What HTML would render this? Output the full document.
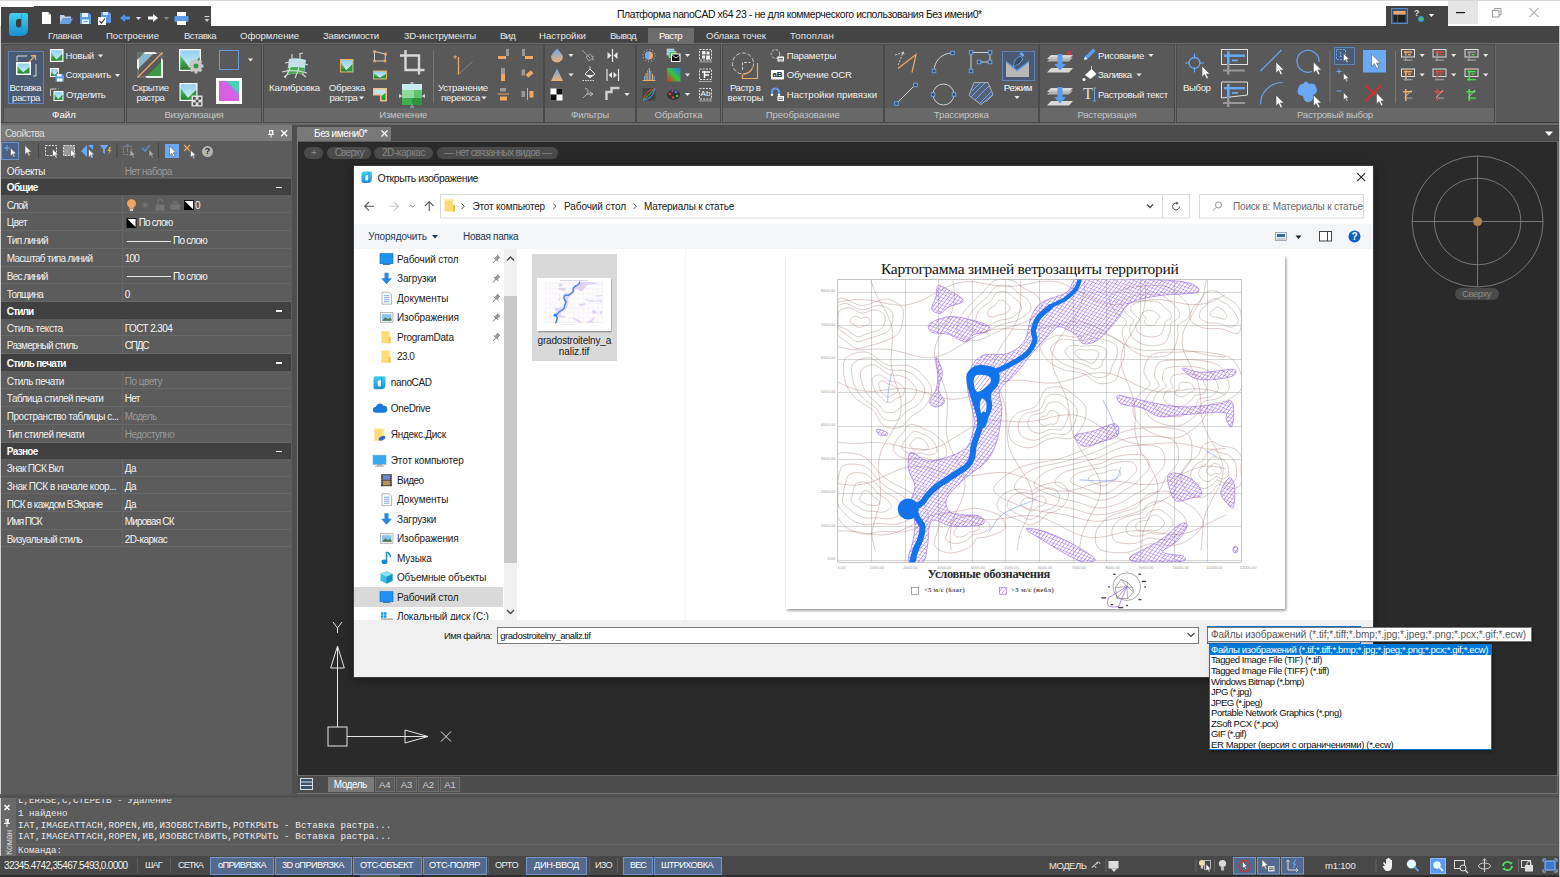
<!DOCTYPE html>
<html lang="ru"><head><meta charset="utf-8"><title>nanoCAD</title><style>html,body{margin:0;padding:0}body{width:1560px;height:877px;overflow:hidden;background:#555;position:relative;font-family:"Liberation Sans",sans-serif}
.t{position:absolute;white-space:nowrap;margin:0;padding:0}.r{position:absolute;margin:0;padding:0;overflow:visible}
</style></head><body>
<svg width="0" height="0" style="position:absolute"><defs>
<linearGradient id="sky" x1="0" y1="0" x2="0" y2="1"><stop offset="0" stop-color="#8fd0ee"/><stop offset="1" stop-color="#d9f1f7"/></linearGradient>
<linearGradient id="grn" x1="0" y1="0" x2="0" y2="1"><stop offset="0" stop-color="#5fd06a"/><stop offset="1" stop-color="#1f7a2a"/></linearGradient>
<linearGradient id="bo" x1="0" y1="0" x2="0" y2="1"><stop offset="0" stop-color="#6aa9f0"/><stop offset="1" stop-color="#f0b070"/></linearGradient>
<linearGradient id="rgb" x1="0" y1="1" x2="1" y2="0"><stop offset="0" stop-color="#f02020"/><stop offset="0.5" stop-color="#30c840"/><stop offset="1" stop-color="#3070f0"/></linearGradient>
<linearGradient id="logo" x1="0" y1="0" x2="0" y2="1"><stop offset="0" stop-color="#3fd0f0"/><stop offset="1" stop-color="#1c8fd0"/></linearGradient>
<linearGradient id="mg" x1="0" y1="0" x2="1" y2="1"><stop offset="0" stop-color="#d050e0"/><stop offset="0.5" stop-color="#c060e0"/><stop offset="1" stop-color="#40d8b0"/></linearGradient>
</defs></svg>
<div class="r" style="left:0px;top:0px;width:1560px;height:26px;background:#ffffff;"></div>
<div class="r" style="left:0px;top:0px;width:1560px;height:1px;background:#d8d8d8;"></div>
<div class="r" style="left:1px;top:7px;width:34px;height:19px;background:#444;"></div>
<div class="r" style="left:34px;top:6px;width:177px;height:20px;background:#444;"></div>
<svg class="r" style="left:0px;top:0px;" width="215" height="26" viewBox="0 0 215 26"><path d="M42,12 h6 l3,3 v9 h-9 z" fill="#fff"/><path d="M48,12 l3,3 h-3z" fill="#ccc"/><path d="M60,15 h4 l1,1.5 h6 v2 h-8 l-3,5.5 z" fill="#b8d4f0"/><path d="M62.5,18.5 h10.5 l-3,5.5 h-10.5 z" fill="#6ea0e0"/><path d="M80,13 h9 l2,2 v9 h-11 z" fill="#5b9be8"/><rect x="82" y="13" width="6" height="4" fill="#e8f0fa"/><rect x="82" y="19.5" width="7" height="4.5" fill="#e8f0fa"/><rect x="83.5" y="21" width="4" height="1" fill="#5b9be8"/><path d="M101,12 h8 l2,2 v9 h-10 z" fill="#5b9be8"/><rect x="103" y="12" width="5" height="3" fill="#dce8f8"/><rect x="98" y="17" width="8" height="8" fill="#fff"/><path d="M99.5,21 l2,2 l3.5,-4.5" stroke="#333" stroke-width="1.2" fill="none"/><path d="M120,18 l5,-4 v2.5 h5 v3 h-5 v2.5 z" fill="#4f93ea"/><path d="M135.9,17.1 h5.200 l-2.600,3 z" fill="#ddd"/><path d="M158,18 l-5,-4 v2.5 h-5 v3 h5 v2.5 z" fill="#fff"/><path d="M163.9,17.1 h5.200 l-2.600,3 z" fill="#888"/><rect x="177" y="12" width="9" height="5" fill="#fff"/><rect x="174.500" y="16" width="14" height="6" rx="1" fill="#5b9be8"/><rect x="177" y="21" width="9" height="4" fill="#fff"/><rect x="204.5" y="16" width="5" height="1.2" fill="#ccc"/><path d="M204.500,19 h5 l-2.500,3 z" fill="#ccc"/></svg>
<span class="t" style="left:617.00px;top:8.30px;font-size:10.4px;line-height:14.4px;color:#111;font-family:'Liberation Sans',sans-serif;letter-spacing:-0.398px;">Платформа nanoCAD x64 23 - не для коммерческого использования Без имени0*</span>
<div class="r" style="left:1386px;top:6px;width:62px;height:20px;background:#444;"></div>
<div class="r" style="left:1448px;top:1px;width:30px;height:23px;background:#e5e5e5;"></div>
<svg class="r" style="left:0px;top:0px;" width="1560" height="26" viewBox="0 0 1560 26"><rect x="1391.5" y="8.500" width="16" height="15" fill="#3f5575" stroke="#5b86c0" stroke-width="1"/><rect x="1393.5" y="11" width="12" height="3.5" fill="#e8a868"/><rect x="1393.5" y="15" width="3.5" height="7" fill="#222"/><rect x="1398" y="15" width="7.500" height="7" fill="#222"/><circle cx="1421" cy="19" r="3" fill="#3a9ad0"/><path d="M1419,19 q2,-2.500 4,0 q-2,2 -4,0" fill="#5c5"/><path d="M1428.9,14.1 h5.200 l-2.600,3 z" fill="#fff"/><rect x="1456" y="12" width="9" height="1.2" fill="#111"/><rect x="1492.5" y="10.500" width="6.500" height="6.500" fill="none" stroke="#999" stroke-width="1"/><path d="M1494.5,10.500 v-2 h6.500 v6.500 h-2" fill="none" stroke="#999" stroke-width="1"/><path d="M1529.5,8 l9,9 M1538.5,8 l-9,9" stroke="#888" stroke-width="1"/></svg>
<span class="t" style="left:1414.00px;top:7.00px;font-size:9px;line-height:13px;color:#ddd;font-family:'Liberation Sans',sans-serif;font-weight:bold;">?</span>
<div class="r" style="left:1px;top:26px;width:1558px;height:17px;background:#444444;"></div>
<div class="r" style="left:648px;top:28px;width:46px;height:15px;background:#6c6c6c;"></div>
<span class="t" style="left:48.00px;top:28.70px;font-size:9.6px;line-height:13.6px;color:#e4e4e4;font-family:'Liberation Sans',sans-serif;letter-spacing:-0.363px;">Главная</span>
<span class="t" style="left:106.00px;top:28.70px;font-size:9.6px;line-height:13.6px;color:#e4e4e4;font-family:'Liberation Sans',sans-serif;letter-spacing:-0.046px;">Построение</span>
<span class="t" style="left:184.00px;top:28.70px;font-size:9.6px;line-height:13.6px;color:#e4e4e4;font-family:'Liberation Sans',sans-serif;letter-spacing:-0.526px;">Вставка</span>
<span class="t" style="left:240.00px;top:28.70px;font-size:9.6px;line-height:13.6px;color:#e4e4e4;font-family:'Liberation Sans',sans-serif;letter-spacing:-0.059px;">Оформление</span>
<span class="t" style="left:323.00px;top:28.70px;font-size:9.6px;line-height:13.6px;color:#e4e4e4;font-family:'Liberation Sans',sans-serif;letter-spacing:-0.206px;">Зависимости</span>
<span class="t" style="left:404.00px;top:28.70px;font-size:9.6px;line-height:13.6px;color:#e4e4e4;font-family:'Liberation Sans',sans-serif;letter-spacing:-0.128px;">3D-инструменты</span>
<span class="t" style="left:500.00px;top:28.70px;font-size:9.6px;line-height:13.6px;color:#e4e4e4;font-family:'Liberation Sans',sans-serif;letter-spacing:-0.789px;">Вид</span>
<span class="t" style="left:539.00px;top:28.70px;font-size:9.6px;line-height:13.6px;color:#e4e4e4;font-family:'Liberation Sans',sans-serif;letter-spacing:-0.008px;">Настройки</span>
<span class="t" style="left:610.00px;top:28.70px;font-size:9.6px;line-height:13.6px;color:#e4e4e4;font-family:'Liberation Sans',sans-serif;letter-spacing:-0.605px;">Вывод</span>
<span class="t" style="left:659.00px;top:28.70px;font-size:9.6px;line-height:13.6px;color:#fff;font-family:'Liberation Sans',sans-serif;letter-spacing:-0.592px;">Растр</span>
<span class="t" style="left:706.00px;top:28.70px;font-size:9.6px;line-height:13.6px;color:#e4e4e4;font-family:'Liberation Sans',sans-serif;letter-spacing:0.012px;">Облака точек</span>
<span class="t" style="left:790.00px;top:28.70px;font-size:9.6px;line-height:13.6px;color:#e4e4e4;font-family:'Liberation Sans',sans-serif;letter-spacing:0.196px;">Топоплан</span>
<div class="r" style="left:1px;top:43px;width:1558px;height:80px;background:#595959;"></div>
<div class="r" style="left:1px;top:43px;width:1558px;height:1px;background:#6e6e6e;"></div>
<div class="r" style="left:1px;top:122px;width:1558px;height:1px;background:#3c3c3c;"></div>
<div class="r" style="left:4px;top:45px;width:120px;height:76.5px;background:#595959;box-shadow:0 0 0 1px #4a4a4a, 1px 1px 0 1px #6a6a6a;"></div>
<div class="r" style="left:4px;top:108px;width:120px;height:13.5px;background:#686868;"></div>
<span class="t" style="left:52.00px;top:108.20px;font-size:9.6px;line-height:13.6px;color:#fff;font-family:'Liberation Sans',sans-serif;letter-spacing:0.100px;">Файл</span>
<div class="r" style="left:127px;top:45px;width:134px;height:76.5px;background:#595959;box-shadow:0 0 0 1px #4a4a4a, 1px 1px 0 1px #6a6a6a;"></div>
<div class="r" style="left:127px;top:108px;width:134px;height:13.5px;background:#686868;"></div>
<span class="t" style="left:164.50px;top:108.20px;font-size:9.6px;line-height:13.6px;color:#c4c4c4;font-family:'Liberation Sans',sans-serif;letter-spacing:-0.321px;">Визуализация</span>
<div class="r" style="left:264px;top:45px;width:278.5px;height:76.5px;background:#595959;box-shadow:0 0 0 1px #4a4a4a, 1px 1px 0 1px #6a6a6a;"></div>
<div class="r" style="left:264px;top:108px;width:278.5px;height:13.5px;background:#686868;"></div>
<span class="t" style="left:379.25px;top:108.20px;font-size:9.6px;line-height:13.6px;color:#c4c4c4;font-family:'Liberation Sans',sans-serif;letter-spacing:-0.210px;">Изменение</span>
<div class="r" style="left:545px;top:45px;width:90px;height:76.5px;background:#595959;box-shadow:0 0 0 1px #4a4a4a, 1px 1px 0 1px #6a6a6a;"></div>
<div class="r" style="left:545px;top:108px;width:90px;height:13.5px;background:#686868;"></div>
<span class="t" style="left:571.00px;top:108.20px;font-size:9.6px;line-height:13.6px;color:#c4c4c4;font-family:'Liberation Sans',sans-serif;letter-spacing:-0.164px;">Фильтры</span>
<div class="r" style="left:637px;top:45px;width:83px;height:76.5px;background:#595959;box-shadow:0 0 0 1px #4a4a4a, 1px 1px 0 1px #6a6a6a;"></div>
<div class="r" style="left:637px;top:108px;width:83px;height:13.5px;background:#686868;"></div>
<span class="t" style="left:654.50px;top:108.20px;font-size:9.6px;line-height:13.6px;color:#c4c4c4;font-family:'Liberation Sans',sans-serif;letter-spacing:-0.046px;">Обработка</span>
<div class="r" style="left:722.5px;top:45px;width:160.5px;height:76.5px;background:#595959;box-shadow:0 0 0 1px #4a4a4a, 1px 1px 0 1px #6a6a6a;"></div>
<div class="r" style="left:722.5px;top:108px;width:160.5px;height:13.5px;background:#686868;"></div>
<span class="t" style="left:765.75px;top:108.20px;font-size:9.6px;line-height:13.6px;color:#c4c4c4;font-family:'Liberation Sans',sans-serif;letter-spacing:-0.068px;">Преобразование</span>
<div class="r" style="left:885px;top:45px;width:152.5px;height:76.5px;background:#595959;box-shadow:0 0 0 1px #4a4a4a, 1px 1px 0 1px #6a6a6a;"></div>
<div class="r" style="left:885px;top:108px;width:152.5px;height:13.5px;background:#686868;"></div>
<span class="t" style="left:933.75px;top:108.20px;font-size:9.6px;line-height:13.6px;color:#c4c4c4;font-family:'Liberation Sans',sans-serif;letter-spacing:-0.136px;">Трассировка</span>
<div class="r" style="left:1040px;top:45px;width:134px;height:76.5px;background:#595959;box-shadow:0 0 0 1px #4a4a4a, 1px 1px 0 1px #6a6a6a;"></div>
<div class="r" style="left:1040px;top:108px;width:134px;height:13.5px;background:#686868;"></div>
<span class="t" style="left:1077.50px;top:108.20px;font-size:9.6px;line-height:13.6px;color:#c4c4c4;font-family:'Liberation Sans',sans-serif;letter-spacing:-0.280px;">Растеризация</span>
<div class="r" style="left:1176.5px;top:45px;width:317.0px;height:76.5px;background:#595959;box-shadow:0 0 0 1px #4a4a4a, 1px 1px 0 1px #6a6a6a;"></div>
<div class="r" style="left:1176.5px;top:108px;width:317.0px;height:13.5px;background:#686868;"></div>
<span class="t" style="left:1297.00px;top:108.20px;font-size:9.6px;line-height:13.6px;color:#c4c4c4;font-family:'Liberation Sans',sans-serif;letter-spacing:-0.234px;">Растровый выбор</span>
<div class="r" style="left:7.5px;top:50.5px;width:36px;height:53px;background:#4a5a73;border:1px solid #5d83b8;box-sizing:border-box;"></div>
<div class="r" style="left:1001.5px;top:50.5px;width:33.5px;height:30.5px;background:#4a5a73;border:1px solid #5d83b8;box-sizing:border-box;"></div>
<div class="r" style="left:1333.5px;top:46.5px;width:21px;height:18px;background:#4a5a73;border:1px solid #5d83b8;box-sizing:border-box;"></div>
<svg class="r" style="left:0px;top:43px;" width="1560" height="80" viewBox="0 43 1560 80"><path d="M17,61 v-5 h10 M31,56 l4,-0 M35,56 v0" fill="none" stroke="#d8d8d8" stroke-width="1"/><path d="M36,64 v12 h-3" fill="none" stroke="#d8d8d8" stroke-width="1"/><path d="M29,62 l6.500,-6.500 M31,55.500 h4.500 v4.500" fill="none" stroke="#f0a860" stroke-width="1.2"/><rect x="16" y="62" width="15" height="13" fill="#fff"/><rect x="17.5" y="63.5" width="12.0" height="10.0" fill="url(#sky)"/><path d="M17.5,66.0 L24.1,73.5 L17.5,73.5 z" fill="url(#grn)"/><path d="M29.5,67.0 L21.7,73.5 L29.5,73.5 z" fill="#2f9a3c"/><rect x="50" y="49" width="13.5" height="13" fill="#fff"/><rect x="51.2" y="50.2" width="11.1" height="10.6" fill="url(#sky)"/><path d="M51.2,52.85 L57.30500000000001,60.800000000000004 L51.2,60.800000000000004 z" fill="url(#grn)"/><path d="M62.300000000000004,53.910000000000004 L55.085,60.800000000000004 L62.300000000000004,60.800000000000004 z" fill="#2f9a3c"/><path d="M97.9,54.6 h5.200 l-2.600,3 z" fill="#e8e8e8"/><rect x="50" y="68" width="9" height="9" fill="#fff"/><rect x="51" y="69" width="7" height="7" fill="url(#sky)"/><path d="M51,70.75 L54.85,76 L51,76 z" fill="url(#grn)"/><path d="M58,71.45 L53.45,76 L58,76 z" fill="#2f9a3c"/><path d="M55.500,74 h7 l1.500,1.500 v6 h-8.500 z" fill="#5b9be8"/><rect x="57" y="74" width="4.500" height="2.500" fill="#fff"/><rect x="57" y="78.500" width="5.500" height="3" fill="#fff"/><path d="M114.9,74.1 h5.200 l-2.600,3 z" fill="#e8e8e8"/><path d="M50.500,96 v-7 h6 M58,89 h0.500" fill="none" stroke="#d0d0d0" stroke-width="1"/><rect x="53.5" y="91" width="10" height="10" fill="#fff"/><rect x="54.5" y="92" width="8" height="8" fill="url(#sky)"/><path d="M54.5,94.0 L58.9,100 L54.5,100 z" fill="url(#grn)"/><path d="M62.5,94.8 L57.3,100 L62.5,100 z" fill="#2f9a3c"/><rect x="137" y="52" width="26" height="26" fill="#eee"/><rect x="139" y="54" width="22" height="22" fill="#5a5a5a"/><path d="M139,54 h14 l-14,14 z" fill="#8ab8c8"/><path d="M161,76 h-14 l14,-14 z" fill="#3a9a48"/><path d="M137,52 l8,0 l-8,8 z M163,52 v8 l-8,-8z M137,78 v-10 l10,10 z" fill="#595959" opacity="0.85"/><path d="M137.500,77.500 l25,-25" stroke="#f0a860" stroke-width="1.3"/><rect x="179" y="49" width="22" height="22" fill="#fff"/><rect x="180.3" y="50.3" width="19.4" height="19.4" fill="url(#sky)"/><path d="M180.3,55.15 L190.97,69.69999999999999 L180.3,69.69999999999999 z" fill="url(#grn)"/><path d="M199.70000000000002,57.089999999999996 L187.09,69.69999999999999 L199.70000000000002,69.69999999999999 z" fill="#2f9a3c"/><circle cx="196" cy="66" r="6" fill="#c8c8c8" stroke="#999" stroke-width="0.500"/><rect x="194.500" y="58.500" width="3" height="3.500" fill="#c8c8c8" transform="rotate(0 196 66)"/><rect x="194.500" y="58.500" width="3" height="3.500" fill="#c8c8c8" transform="rotate(45 196 66)"/><rect x="194.500" y="58.500" width="3" height="3.500" fill="#c8c8c8" transform="rotate(90 196 66)"/><rect x="194.500" y="58.500" width="3" height="3.500" fill="#c8c8c8" transform="rotate(135 196 66)"/><rect x="194.500" y="58.500" width="3" height="3.500" fill="#c8c8c8" transform="rotate(180 196 66)"/><rect x="194.500" y="58.500" width="3" height="3.500" fill="#c8c8c8" transform="rotate(225 196 66)"/><rect x="194.500" y="58.500" width="3" height="3.500" fill="#c8c8c8" transform="rotate(270 196 66)"/><rect x="194.500" y="58.500" width="3" height="3.500" fill="#c8c8c8" transform="rotate(315 196 66)"/><circle cx="196" cy="66" r="2.500" fill="#3a9a48"/><rect x="219.500" y="50.500" width="19" height="19" fill="none" stroke="#6a9ad8" stroke-width="1"/><path d="M247.9,58.6 h5.200 l-2.600,3 z" fill="#e8e8e8"/><rect x="179.5" y="83" width="18" height="18" fill="#fff"/><rect x="180.7" y="84.2" width="15.6" height="15.6" fill="url(#sky)"/><path d="M180.7,88.10000000000001 L189.28,99.8 L180.7,99.8 z" fill="url(#grn)"/><path d="M196.29999999999998,89.66 L186.16,99.8 L196.29999999999998,99.8 z" fill="#2f9a3c"/><rect x="191.500" y="95.500" width="11" height="11" fill="#ddd"/><rect x="193" y="97" width="2.700" height="2.700" fill="#555"/><rect x="198.400" y="97" width="2.700" height="2.700" fill="#555"/><rect x="195.700" y="99.700" width="2.700" height="2.700" fill="#555"/><rect x="193" y="102.400" width="2.700" height="2.700" fill="#555"/><rect x="198.400" y="102.400" width="2.700" height="2.700" fill="#555"/><rect x="216" y="78" width="26" height="26" fill="#fff"/><rect x="219" y="81" width="20" height="20" fill="#d860e0"/><path d="M226,81 h13 v13 z" fill="#48d8b0"/><path d="M222,81 h5 l12,12 v5 z" fill="#a880e0" opacity="0.700"/><path d="M289,59 q7,-2 17,1 l-2,14 q-8,-2 -17,1 z" fill="#bfe4f2"/><path d="M287.500,68 q8,-2 17,0 l-1,6 q-8,-2 -17,1 z" fill="#3fae4c"/><path d="M285,63 q12,-3 23,2 M282,72 q12,-3 25,1 M292,54 q1,12 -7,24 M300,54 q1,12 -5,24 M299,54 l4,-1 M302,74 l4,3 M284,77 l4,-3" fill="none" stroke="#d4d4d4" stroke-width="1.200"/><rect x="340" y="59" width="13.5" height="13.5" fill="#e8b060"/><rect x="341" y="60" width="11.5" height="11.5" fill="url(#sky)"/><path d="M341,62.875 L347.325,71.5 L341,71.5 z" fill="url(#grn)"/><path d="M352.5,64.025 L345.025,71.5 L352.5,71.5 z" fill="#2f9a3c"/><path d="M358.9,96.6 h5.200 l-2.600,3 z" fill="#e8e8e8"/><path d="M374.500,51.500 l11,2.500 l-0.500,7 h-10.500 z" fill="none" stroke="#d0d0d0" stroke-width="1"/><rect x="373.2" y="50.2" width="2.600" height="2.600" fill="#f0a860"/><rect x="384.2" y="52.7" width="2.600" height="2.600" fill="#f0a860"/><rect x="383.7" y="59.7" width="2.600" height="2.600" fill="#f0a860"/><rect x="373.2" y="59.7" width="2.600" height="2.600" fill="#f0a860"/><rect x="373" y="70.5" width="14" height="9" fill="#e8b060"/><rect x="374" y="71.5" width="12" height="7" fill="url(#sky)"/><path d="M374,73.25 L380.6,78.5 L374,78.5 z" fill="url(#grn)"/><path d="M386,73.95 L378.2,78.5 L386,78.5 z" fill="#2f9a3c"/><path d="M373,88 h14 v13.500 h-7 v-6 h-7 z" fill="#f0c088"/><path d="M374.500,89.500 h11 v10.500 h-4 v-6 h-7 z" fill="#bfe4f2"/><path d="M381.500,96 l4,-3 v7 h-4z" fill="#2f9a3c"/><path d="M405.500,50 v20 h19 M400,55.500 h19 v19" fill="none" stroke="#d8d8d8" stroke-width="2.400"/><rect x="402" y="84" width="20" height="21" fill="#3fae4c"/><rect x="402" y="84" width="20" height="6" fill="#c8ecf4"/><rect x="402" y="90" width="12" height="8" fill="#8fdc9a"/><rect x="414" y="90" width="8" height="8" fill="#5fc46c"/><rect x="412" y="98" width="10" height="7" fill="#2f963c"/><path d="M410,83 h4 M412,82 v2 M410,107 h4 M412,106 v-1.500 M399.500,94.500 l2,1.500 l-2,1.500z M424.500,94.500 l-2,1.500 l2,1.500z" stroke="#ddd" stroke-width="0.800" fill="#ddd"/><rect x="433" y="51" width="1" height="52" fill="#777"/><path d="M458.500,57 v17.500" stroke="#f0a860" stroke-width="1.300"/><path d="M458.500,74.500 l14,-13" stroke="#888" stroke-width="1"/><path d="M481.4,96.6 h5.200 l-2.600,3 z" fill="#e8e8e8"/><rect x="498" y="56" width="8" height="3" fill="#f0a860"/><rect x="506" y="49" width="3" height="7" fill="#999"/><rect x="525" y="56" width="8" height="3" fill="#f0a860"/><rect x="522" y="49" width="3" height="7" fill="#999"/><rect x="501" y="68" width="4" height="6" fill="#999"/><rect x="501" y="74" width="4" height="7" fill="#f0a860"/><rect x="521.500" y="69.500" width="3.500" height="6" fill="#999"/><rect x="526" y="72" width="7" height="4" fill="#f0a860" transform="rotate(-40 529.5 74)"/><rect x="500" y="88" width="6" height="3.500" fill="#999"/><rect x="497.500" y="93.500" width="11.500" height="1" fill="#f0a860"/><rect x="500" y="96.500" width="7" height="4" fill="#f0a860"/><rect x="521.500" y="91" width="3.500" height="6" fill="#999"/><rect x="527" y="88" width="1" height="12" fill="#f0a860"/><rect x="529.500" y="91" width="4" height="6.500" fill="#f0a860"/><path d="M557,48.500 q-6,6.500 -6,8 a6,6 0 0 0 12,0 q0,-1.500 -6,-8z" fill="url(#bo)"/><path d="M568.4,54.1 h5.200 l-2.600,3 z" fill="#e8e8e8"/><path d="M557,68.500 l6,12.500 h-12 z" fill="url(#bo)"/><path d="M568.4,73.6 h5.200 l-2.600,3 z" fill="#e8e8e8"/><rect x="550.500" y="88.500" width="12" height="12" fill="#fff"/><rect x="556.500" y="88.500" width="6" height="6" fill="#111"/><rect x="550.500" y="94.500" width="6" height="6" fill="#111"/><path d="M582,50 l8,8 M586,57 l4,-3 l3,4 l-4,3 z M592,56 l2,1" fill="none" stroke="#aaa" stroke-width="0.900"/><circle cx="593" cy="59.500" r="0.700" fill="#ccc"/><path d="M585,74 l5,-5 l5,5 l-5,3.500 z" fill="none" stroke="#e0e0e0" stroke-width="1"/><path d="M586,75 l8,0 l-4,3z" fill="#eee"/><path d="M582.500,80.500 h12" stroke="#e0e0e0" stroke-width="1.200" stroke-dasharray="1.500,1"/><path d="M590,69 v-3" stroke="#ddd" stroke-width="0.800"/><path d="M585,88 q5,2 2,6 q-3,3 -4,4 M587,94 l6,0 M590,92 l3,2 l-3,2" fill="none" stroke="#bbb" stroke-width="1"/><path d="M612.500,49 v13" stroke="#e8e8e8" stroke-width="1.200"/><path d="M607.500,52 l4,3.500 l-4,3.500z M617.500,52 l-4,3.500 l4,3.500z" fill="#e8e8e8"/><path d="M607,69 v12 M618.500,69 v12" stroke="#e8e8e8" stroke-width="1.200"/><path d="M612,72 l-3.500,3 l3.500,3z M613.500,72 l3.500,3 l-3.500,3z" fill="#e8e8e8"/><path d="M606.500,100 v-8 h5 v-4 h8" fill="none" stroke="#d0d0d0" stroke-width="2.400"/><path d="M624.4,93.1 h5.200 l-2.600,3 z" fill="#e8e8e8"/><circle cx="649" cy="55.500" r="4" fill="#f0a860"/><path d="M649,51.500 a4,4 0 0 0 0,8 z" fill="#6aa9f5"/><circle cx="649" cy="55.500" r="6" fill="none" stroke="#ddd" stroke-width="0.800" stroke-dasharray="1,2.100"/><rect x="644.0" y="76" width="1" height="4" fill="#6aa9f5"/><rect x="645.6" y="73" width="1" height="7" fill="#f0a860"/><rect x="647.2" y="70" width="1" height="10" fill="#6aa9f5"/><rect x="648.8" y="68" width="1" height="12" fill="#f0a860"/><rect x="650.4" y="71" width="1" height="9" fill="#6aa9f5"/><rect x="652.0" y="74" width="1" height="6" fill="#f0a860"/><rect x="653.6" y="76" width="1" height="4" fill="#6aa9f5"/><rect x="642.500" y="80" width="13" height="1" fill="#f0a860"/><rect x="642.500" y="88" width="13" height="13" fill="#444"/><path d="M643,100.500 q2,-10 12,-12" fill="none" stroke="#e04040" stroke-width="1"/><path d="M643,100.500 l12,-12" stroke="#40c040" stroke-width="1"/><path d="M643,100.500 q10,-2 12,-12" fill="none" stroke="#40a0f0" stroke-width="1"/><rect x="667" y="49" width="7" height="6" fill="#7cc8f0" stroke="#ddd" stroke-width="0.600"/><rect x="669" y="51.500" width="7" height="6" fill="#4fbf5c" stroke="#ddd" stroke-width="0.600"/><rect x="671.500" y="54" width="8.500" height="7.500" fill="#111" stroke="#fff" stroke-width="1"/><path d="M672,55 l4,3 l4,-3" fill="none" stroke="#fff" stroke-width="0.800"/><path d="M684.9,54.1 h5.200 l-2.600,3 z" fill="#e8e8e8"/><rect x="667" y="68" width="13.500" height="13.500" fill="url(#rgb)"/><path d="M684.9,73.6 h5.200 l-2.600,3 z" fill="#e8e8e8"/><ellipse cx="673.500" cy="95" rx="6.500" ry="5" fill="#333"/><circle cx="670" cy="94" r="1.300" fill="#e04040"/><circle cx="673" cy="97.500" r="1.300" fill="#e04040"/><circle cx="677" cy="96" r="1.300" fill="#40c040"/><circle cx="676" cy="92" r="1.300" fill="#4080f0"/><circle cx="672.500" cy="91" r="1" fill="#c050c0"/><path d="M684.9,93.1 h5.200 l-2.600,3 z" fill="#e8e8e8"/><rect x="699.500" y="49.5" width="12" height="10.500" fill="none" stroke="#e0e0e0" stroke-width="1" stroke-dasharray="2,1.200"/><rect x="699" y="61.5" width="13" height="0.800" fill="#bbb"/><rect x="699.500" y="69.0" width="12" height="10.500" fill="none" stroke="#e0e0e0" stroke-width="1" stroke-dasharray="2,1.200"/><rect x="699" y="81.0" width="13" height="0.800" fill="#bbb"/><rect x="699.500" y="88.5" width="12" height="10.500" fill="none" stroke="#e0e0e0" stroke-width="1" stroke-dasharray="2,1.200"/><rect x="699" y="100.5" width="13" height="0.800" fill="#bbb"/><rect x="702" y="51" width="3.500" height="3.500" fill="#eee"/><rect x="706.500" y="51.500" width="3" height="3" fill="#eee"/><rect x="702" y="55.500" width="3" height="3" fill="#eee"/><rect x="706" y="55.500" width="4" height="4" fill="#eee"/><path d="M704.500,71 v7 M702,72 h8 M705,75 h4" stroke="#fff" stroke-width="1.500" fill="none"/><circle cx="743" cy="63.500" r="10.500" fill="none" stroke="#ccc" stroke-width="1" stroke-dasharray="4,2"/><path d="M743,74 a10.500,10.500 0 0 0 9.500,-6" fill="none" stroke="#f0a860" stroke-width="1.200"/><path d="M742.500,70 v-7.500 h8" fill="none" stroke="#ccc" stroke-width="1" stroke-dasharray="3,1.500"/><path d="M757.500,63 v15.500 h-15 v-4" fill="none" stroke="#f0a860" stroke-width="1.200"/><circle cx="775.500" cy="54" r="4.300" fill="none" stroke="#ccc" stroke-width="1" stroke-dasharray="2.500,1.500"/><rect x="777.500" y="56.500" width="6.500" height="5" fill="#fff"/><rect x="778.500" y="58" width="4.500" height="0.800" fill="#555"/><rect x="778.500" y="59.600" width="4.500" height="0.800" fill="#555"/><rect x="771" y="70" width="13" height="9.500" rx="1" fill="#fff"/><path d="M772,95 v-3 a3.500,3.500 0 0 1 7,0 v3" fill="none" stroke="#5b9bf0" stroke-width="2.200"/><rect x="770.900" y="94" width="2.200" height="1.800" fill="#fff"/><rect x="777.900" y="94" width="2.200" height="1.800" fill="#fff"/><rect x="777.500" y="96" width="6.500" height="5" fill="#fff"/><rect x="778.500" y="97.500" width="4.500" height="0.800" fill="#555"/><rect x="778.500" y="99.100" width="4.500" height="0.800" fill="#555"/><path d="M898,68.500 l18,-14 l-4,18" fill="none" stroke="#f0a860" stroke-width="1.200"/><path d="M895,55 l8,-2.500 l-5,13" fill="none" stroke="#ccc" stroke-width="1" stroke-dasharray="2,1.300"/><path d="M903.500,51 l1,3.500 l-3,-1z" fill="#ccc"/><path d="M934,71 a18,18 0 0 1 18,-18" fill="none" stroke="#d0d0d0" stroke-width="1"/><rect x="932.2" y="69.2" width="3.600" height="3.600" fill="#3a4a60" stroke="#6aa9f5" stroke-width="0.900"/><rect x="950.7" y="51.2" width="3.600" height="3.600" fill="#3a4a60" stroke="#6aa9f5" stroke-width="0.900"/><path d="M896.500,103.500 l19,-19" stroke="#d0d0d0" stroke-width="1"/><rect x="894.7" y="101.7" width="3.600" height="3.600" fill="#3a4a60" stroke="#6aa9f5" stroke-width="0.900"/><rect x="913.7" y="83.2" width="3.600" height="3.600" fill="#3a4a60" stroke="#6aa9f5" stroke-width="0.900"/><circle cx="943.500" cy="94.500" r="10.500" fill="none" stroke="#d0d0d0" stroke-width="1"/><rect x="931.2" y="92.7" width="3.600" height="3.600" fill="#3a4a60" stroke="#6aa9f5" stroke-width="0.900"/><rect x="952.2" y="92.7" width="3.600" height="3.600" fill="#3a4a60" stroke="#6aa9f5" stroke-width="0.900"/><path d="M971,71 v-18.500 h19 v9.500 h-11" fill="none" stroke="#d0d0d0" stroke-width="1"/><rect x="969.2" y="69.2" width="3.600" height="3.600" fill="#3a4a60" stroke="#6aa9f5" stroke-width="0.900"/><rect x="969.2" y="50.7" width="3.600" height="3.600" fill="#3a4a60" stroke="#6aa9f5" stroke-width="0.900"/><rect x="988.2" y="50.7" width="3.600" height="3.600" fill="#3a4a60" stroke="#6aa9f5" stroke-width="0.900"/><rect x="988.2" y="60.2" width="3.600" height="3.600" fill="#3a4a60" stroke="#6aa9f5" stroke-width="0.900"/><rect x="977.2" y="60.2" width="3.600" height="3.600" fill="#3a4a60" stroke="#6aa9f5" stroke-width="0.900"/><path d="M974,82.500 h14 l5,12 l-12,10 l-12,-9 z" fill="#56627a" stroke="#b8b8b8" stroke-width="0.900"/><path d="M972,91 l8,-8 M971,97 l14,-14 M975,100 l15,-15 M980,103 l12,-12 M986,102 l7,-7" stroke="#6aa9f5" stroke-width="1"/><path d="M1006,62 l11,9 l12,-9 v15 h-23 z" fill="#b8b8b8"/><path d="M1006,61.500 l11,9 l12,-9" fill="none" stroke="#5b9bf0" stroke-width="1.200"/><path d="M1013,67 l2,-7 l5,-4 l3,3 l-4,5 z" fill="#3a4a60" stroke="#6aa9f5" stroke-width="0.800"/><rect x="1020" y="53" width="4" height="3" fill="#6aa9f5" transform="rotate(40 1022 54.5)"/><path d="M1014.4,96.1 h5.200 l-2.600,3 z" fill="#e8e8e8"/><path d="M1051,55 h22 l-4,4 h-22 z" fill="#d8d8d8"/><path d="M1051,57.5 h22 l-4,4 h-22 z" fill="#bdbdbd" opacity="0.900"/><path d="M1051,68 h22 l-4,4.500 h-22 z" fill="#d8d8d8"/><path d="M1057.500,54 h5 v10 h3.500 l-6,6.500 l-6,-6.500 h3.500 z" fill="#5b9bf0"/><path d="M1051,88 h22 l-4,4 h-22 z" fill="#d8d8d8"/><path d="M1051,90.5 h22 l-4,4 h-22 z" fill="#bdbdbd" opacity="0.900"/><path d="M1051,101 h22 l-4,4.500 h-22 z" fill="#d8d8d8"/><path d="M1057.500,87 h5 v10 h3.500 l-6,6.500 l-6,-6.500 h3.500 z" fill="#5b9bf0"/><path d="M1067,51 l4,4 M1071,51 l-4,4" stroke="#e03030" stroke-width="1.300"/><path d="M1084,60 l1,-3.500 l8,-8 l2.500,2.500 l-8,8 z" fill="#5b9bf0"/><path d="M1084,60 l1,-3.500 l2.500,2.500z" fill="#eee"/><path d="M1148.4,54.1 h5.200 l-2.600,3 z" fill="#e8e8e8"/><path d="M1085,75 l6.500,-6 l5,5 l-6,5 z" fill="#fff"/><path d="M1091.500,69 v-3" stroke="#ddd" stroke-width="0.800"/><circle cx="1084" cy="79.500" r="1.500" fill="#fff"/><path d="M1136.4,73.6 h5.200 l-2.600,3 z" fill="#e8e8e8"/><path d="M1094.500,88 v13 M1093,88 h3 M1093,101 h3" stroke="#6aa9f5" stroke-width="0.900"/><circle cx="1194.500" cy="63" r="5.500" fill="none" stroke="#6aa9f5" stroke-width="1.300"/><path d="M1194.500,53.500 v5 M1194.500,67.500 v5 M1185,63 h5 M1199,63 h5" stroke="#6aa9f5" stroke-width="1.200"/><polygon points="1202.0,66.0 1202.0,77.0 1204.6,74.6 1206.6,78.8 1208.4,77.9 1206.4,73.9 1209.9,73.9" fill="#fff" stroke="#555" stroke-width="0.6"/><rect x="1221.500" y="49.5" width="26" height="15" fill="none" stroke="#e0e0e0" stroke-width="1"/><rect x="1227" y="51.5" width="2.400" height="23" fill="#999"/><rect x="1223" y="69.5" width="22" height="2" fill="#999"/><rect x="1227" y="51.5" width="2.400" height="13" fill="#6aa9f5"/><rect x="1224" y="54.5" width="21" height="2.400" fill="#6aa9f5"/><rect x="1232" y="59.5" width="6" height="1.800" fill="#6aa9f5"/><path d="M1221.500,82 h26 v13 l-26,3 z" fill="none" stroke="#e0e0e0" stroke-width="1"/><rect x="1227" y="84" width="2.400" height="23" fill="#999"/><rect x="1223" y="102" width="22" height="2" fill="#999"/><rect x="1227" y="84" width="2.400" height="13" fill="#6aa9f5"/><rect x="1224" y="87" width="21" height="2.400" fill="#6aa9f5"/><rect x="1232" y="92" width="6" height="1.800" fill="#6aa9f5"/><path d="M1260.500,71 l21,-21" stroke="#6aa9f5" stroke-width="1.200"/><polygon points="1276.0,62.0 1276.0,73.0 1278.6,70.6 1280.6,74.8 1282.4,73.9 1280.4,69.9 1283.9,69.9" fill="#fff" stroke="#555" stroke-width="0.6"/><path d="M1260.500,104.500 a22,22 0 0 1 22,-22" fill="none" stroke="#6aa9f5" stroke-width="1.200"/><polygon points="1276.0,95.0 1276.0,106.0 1278.6,103.6 1280.6,107.8 1282.4,106.9 1280.4,102.9 1283.9,102.9" fill="#fff" stroke="#555" stroke-width="0.6"/><path d="M1319,62 a11,11 0 1 0 -7,9.500" fill="none" stroke="#6aa9f5" stroke-width="1.200"/><polygon points="1313.5,62.0 1313.5,73.0 1316.1,70.6 1318.1,74.8 1319.9,73.9 1317.9,69.9 1321.4,69.9" fill="#fff" stroke="#555" stroke-width="0.6"/><path d="M1303,84 q3,-5 6,0 q6,-2 7,3 q3,6 -3,8 q1,6 -4,7 q-5,1 -6,-6 q-7,-1 -5,-7 q1,-5 5,-5z" fill="#6aa9f5"/><polygon points="1313.5,95.0 1313.5,106.0 1316.1,103.6 1318.1,107.8 1319.9,106.9 1317.9,102.9 1321.4,102.9" fill="#fff" stroke="#555" stroke-width="0.6"/><rect x="1329.500" y="51" width="1" height="52" fill="#777"/><rect x="1336.500" y="49.500" width="9" height="10" fill="none" stroke="#6aa9f5" stroke-width="1" stroke-dasharray="2,1.200"/><polygon points="1343.5,53.5 1343.5,61.5 1345.4,59.7 1346.9,62.8 1348.1,62.1 1346.7,59.3 1349.3,59.3" fill="#fff" stroke="#555" stroke-width="0.6"/><path d="M1336.500,71.500 h5 M1339,69 v5" stroke="#6aa9f5" stroke-width="1"/><polygon points="1343.5,73.0 1343.5,80.5 1345.3,78.8 1346.7,81.7 1347.8,81.1 1346.5,78.4 1348.9,78.4" fill="#fff" stroke="#555" stroke-width="0.6"/><path d="M1336.500,91 h5" stroke="#6aa9f5" stroke-width="1"/><polygon points="1343.5,92.5 1343.5,100.0 1345.3,98.3 1346.7,101.2 1347.8,100.6 1346.5,97.9 1348.9,97.9" fill="#fff" stroke="#555" stroke-width="0.6"/><rect x="1363" y="50" width="23" height="22.500" fill="#6aa9f5"/><polygon points="1371.5,54.0 1371.5,66.5 1374.5,63.8 1376.8,68.5 1378.8,67.5 1376.5,63.0 1380.5,63.0" fill="#fff" stroke="#555" stroke-width="0.6"/><path d="M1365,84.500 l17,17 M1382,84.500 l-17,17" stroke="#d03030" stroke-width="1.800"/><polygon points="1376.5,93.0 1376.5,104.0 1379.1,101.6 1381.1,105.8 1382.9,104.9 1380.9,100.9 1384.4,100.9" fill="#fff" stroke="#555" stroke-width="0.6"/><rect x="1395" y="51" width="1" height="52" fill="#777"/><rect x="1401.5" y="49.5" width="13" height="7.500" fill="none" stroke="#ddd" stroke-width="1"/><rect x="1405.0" y="51" width="1.600" height="10" fill="#999"/><rect x="1403.5" y="59.5" width="9" height="1.300" fill="#999"/><rect x="1404.0" y="51.3" width="8" height="1.600" fill="#f0a860"/><rect x="1408.0" y="54" width="3" height="1.300" fill="#f0a860"/><path d="M1419.6000000000001,54.1 h5.200 l-2.600,3 z" fill="#e8e8e8"/><rect x="1401.5" y="69.0" width="13" height="7.500" fill="none" stroke="#ddd" stroke-width="1"/><rect x="1405.0" y="70.5" width="1.600" height="10" fill="#f0a860"/><rect x="1403.5" y="79.0" width="9" height="1.300" fill="#999"/><rect x="1404.0" y="70.8" width="8" height="1.600" fill="#f0a860"/><rect x="1408.0" y="73.5" width="3" height="1.300" fill="#f0a860"/><path d="M1419.6000000000001,73.6 h5.200 l-2.600,3 z" fill="#e8e8e8"/><rect x="1405.0" y="89" width="1.600" height="12" fill="#f0a860"/><rect x="1403.0" y="91" width="9" height="1.500" fill="#f0a860"/><rect x="1406.5" y="97.5" width="6" height="1.300" fill="#999"/><path d="M1404.5,98 l7,-8" stroke="#ccc" stroke-width="0.800"/><rect x="1433" y="49.5" width="13" height="7.500" fill="none" stroke="#ddd" stroke-width="1"/><rect x="1436.5" y="51" width="1.600" height="10" fill="#999"/><rect x="1435" y="59.5" width="9" height="1.300" fill="#999"/><rect x="1435.5" y="51.3" width="8" height="1.600" fill="#e04848"/><rect x="1439.5" y="54" width="3" height="1.300" fill="#e04848"/><path d="M1451.1000000000001,54.1 h5.200 l-2.600,3 z" fill="#e8e8e8"/><rect x="1433" y="69.0" width="13" height="7.500" fill="none" stroke="#ddd" stroke-width="1"/><rect x="1436.5" y="70.5" width="1.600" height="10" fill="#e04848"/><rect x="1435" y="79.0" width="9" height="1.300" fill="#999"/><rect x="1435.5" y="70.8" width="8" height="1.600" fill="#e04848"/><rect x="1439.5" y="73.5" width="3" height="1.300" fill="#e04848"/><path d="M1451.1000000000001,73.6 h5.200 l-2.600,3 z" fill="#e8e8e8"/><rect x="1436.5" y="89" width="1.600" height="12" fill="#e04848"/><rect x="1434.5" y="91" width="9" height="1.500" fill="#e04848"/><rect x="1438" y="97.5" width="6" height="1.300" fill="#999"/><path d="M1436,98 l7,-8" stroke="#ccc" stroke-width="0.800"/><rect x="1465" y="49.5" width="13" height="7.500" fill="none" stroke="#ddd" stroke-width="1"/><rect x="1468.5" y="51" width="1.600" height="10" fill="#999"/><rect x="1467" y="59.5" width="9" height="1.300" fill="#999"/><rect x="1467.5" y="51.3" width="8" height="1.600" fill="#999"/><rect x="1471.5" y="54" width="3" height="1.300" fill="#48e048"/><path d="M1483.1000000000001,54.1 h5.200 l-2.600,3 z" fill="#e8e8e8"/><rect x="1465" y="69.0" width="13" height="7.500" fill="none" stroke="#ddd" stroke-width="1"/><rect x="1468.5" y="70.5" width="1.600" height="10" fill="#48e048"/><rect x="1467" y="79.0" width="9" height="1.300" fill="#48e048"/><rect x="1467.5" y="70.8" width="8" height="1.600" fill="#48e048"/><rect x="1471.5" y="73.5" width="3" height="1.300" fill="#48e048"/><path d="M1483.1000000000001,73.6 h5.200 l-2.600,3 z" fill="#e8e8e8"/><rect x="1468.5" y="89" width="1.600" height="12" fill="#48e048"/><rect x="1466.5" y="91" width="9" height="1.500" fill="#48e048"/><rect x="1470" y="97.5" width="6" height="1.300" fill="#48e048"/><path d="M1468,98 l7,-8" stroke="#ccc" stroke-width="0.800"/></svg>
<span class="t" style="left:9.55px;top:80.70px;font-size:9.6px;line-height:13.6px;color:#f0f0f0;font-family:'Liberation Sans',sans-serif;letter-spacing:-0.597px;">Вставка</span>
<span class="t" style="left:12.00px;top:91.20px;font-size:9.6px;line-height:13.6px;color:#f0f0f0;font-family:'Liberation Sans',sans-serif;letter-spacing:-0.426px;">растра</span>
<span class="t" style="left:65.50px;top:48.70px;font-size:9.6px;line-height:13.6px;color:#f0f0f0;font-family:'Liberation Sans',sans-serif;letter-spacing:-0.227px;">Новый</span>
<span class="t" style="left:65.50px;top:68.20px;font-size:9.6px;line-height:13.6px;color:#f0f0f0;font-family:'Liberation Sans',sans-serif;letter-spacing:-0.245px;">Сохранить</span>
<span class="t" style="left:66.00px;top:87.70px;font-size:9.6px;line-height:13.6px;color:#f0f0f0;font-family:'Liberation Sans',sans-serif;letter-spacing:-0.379px;">Отделить</span>
<span class="t" style="left:132.00px;top:80.70px;font-size:9.6px;line-height:13.6px;color:#f0f0f0;font-family:'Liberation Sans',sans-serif;letter-spacing:-0.210px;">Скрытие</span>
<span class="t" style="left:136.50px;top:91.20px;font-size:9.6px;line-height:13.6px;color:#f0f0f0;font-family:'Liberation Sans',sans-serif;letter-spacing:-0.426px;">растра</span>
<span class="t" style="left:269.00px;top:80.70px;font-size:9.6px;line-height:13.6px;color:#f0f0f0;font-family:'Liberation Sans',sans-serif;letter-spacing:-0.192px;">Калибровка</span>
<span class="t" style="left:328.75px;top:80.70px;font-size:9.6px;line-height:13.6px;color:#f0f0f0;font-family:'Liberation Sans',sans-serif;letter-spacing:-0.155px;">Обрезка</span>
<span class="t" style="left:329.50px;top:91.20px;font-size:9.6px;line-height:13.6px;color:#f0f0f0;font-family:'Liberation Sans',sans-serif;letter-spacing:-0.426px;">растра</span>
<span class="t" style="left:453.00px;top:53.00px;font-size:10px;line-height:14px;color:#f0a860;font-family:'Liberation Sans',sans-serif;">*</span>
<span class="t" style="left:438.00px;top:80.70px;font-size:9.6px;line-height:13.6px;color:#f0f0f0;font-family:'Liberation Sans',sans-serif;letter-spacing:-0.198px;">Устранение</span>
<span class="t" style="left:441.00px;top:91.20px;font-size:9.6px;line-height:13.6px;color:#f0f0f0;font-family:'Liberation Sans',sans-serif;letter-spacing:-0.250px;">перекоса</span>
<span class="t" style="left:700.61px;top:88.00px;font-size:8px;line-height:12px;color:#fff;font-family:'Liberation Sans',sans-serif;">Ab</span>
<span class="t" style="left:729.95px;top:80.70px;font-size:9.6px;line-height:13.6px;color:#f0f0f0;font-family:'Liberation Sans',sans-serif;letter-spacing:-0.461px;">Растр в</span>
<span class="t" style="left:727.60px;top:91.20px;font-size:9.6px;line-height:13.6px;color:#f0f0f0;font-family:'Liberation Sans',sans-serif;letter-spacing:-0.072px;">векторы</span>
<span class="t" style="left:786.70px;top:48.70px;font-size:9.6px;line-height:13.6px;color:#f0f0f0;font-family:'Liberation Sans',sans-serif;letter-spacing:-0.186px;">Параметры</span>
<span class="t" style="left:772.39px;top:69.00px;font-size:8px;line-height:12px;color:#222;font-family:'Liberation Sans',sans-serif;font-weight:bold;">aB</span>
<span class="t" style="left:786.70px;top:68.20px;font-size:9.6px;line-height:13.6px;color:#f0f0f0;font-family:'Liberation Sans',sans-serif;letter-spacing:-0.242px;">Обучение OCR</span>
<span class="t" style="left:786.70px;top:87.70px;font-size:9.6px;line-height:13.6px;color:#f0f0f0;font-family:'Liberation Sans',sans-serif;letter-spacing:0.039px;">Настройки привязки</span>
<span class="t" style="left:1003.75px;top:80.70px;font-size:9.6px;line-height:13.6px;color:#fff;font-family:'Liberation Sans',sans-serif;letter-spacing:-0.220px;">Режим</span>
<span class="t" style="left:1098.00px;top:48.70px;font-size:9.6px;line-height:13.6px;color:#f0f0f0;font-family:'Liberation Sans',sans-serif;letter-spacing:-0.261px;">Рисование</span>
<span class="t" style="left:1098.00px;top:68.20px;font-size:9.6px;line-height:13.6px;color:#f0f0f0;font-family:'Liberation Sans',sans-serif;letter-spacing:-0.493px;">Заливка</span>
<span class="t" style="left:1083.00px;top:84.00px;font-size:16px;line-height:20px;color:#ddd;font-family:'Liberation Serif',serif;">T</span>
<span class="t" style="left:1098.00px;top:87.70px;font-size:9.6px;line-height:13.6px;color:#f0f0f0;font-family:'Liberation Sans',sans-serif;letter-spacing:-0.298px;">Растровый текст</span>
<span class="t" style="left:1183.05px;top:80.70px;font-size:9.6px;line-height:13.6px;color:#f0f0f0;font-family:'Liberation Sans',sans-serif;letter-spacing:-0.396px;">Выбор</span>
<span class="t" style="left:1338.28px;top:48.50px;font-size:8px;line-height:12px;color:#6aa9f5;font-family:'Liberation Sans',sans-serif;">1</span>
<svg class="r" style="left:8px;top:12px;" width="21" height="25" viewBox="0 0 21 25"><path d="M4,1 h14 q2,0 2,2 v14 q0,7 -7,7 h-9 q-3,0 -3,-3 v-16 q0,-4 3,-4z" fill="url(#logo)"/><path d="M8,9.500 q0,-2.500 2.500,-2.500 h2.800 v6 q0,2.500 -2.500,2.500 h-0.300 q-2.500,0 -2.500,-2.500z" fill="#3c3c3c"/><path d="M13.600,1.500 v21.500" stroke="#2590c8" stroke-width="0.700"/></svg>
<div class="r" style="left:0px;top:123px;width:1560px;height:3px;background:#6a6a6a;"></div>
<div class="r" style="left:0px;top:26px;width:1.2px;height:851px;background:#cfcfcf;"></div>
<div class="r" style="left:1px;top:125px;width:291px;height:671px;background:#5c5c5c;"></div>
<div class="r" style="left:292px;top:125px;width:5px;height:671px;background:#4e4e4e;"></div>
<div class="r" style="left:1px;top:125px;width:291px;height:16px;background:#7a7a7a;"></div>
<span class="t" style="left:5.00px;top:126.50px;font-size:10px;line-height:14px;color:#dcdcdc;font-family:'Liberation Sans',sans-serif;letter-spacing:-0.614px;">Свойства</span>
<div class="r" style="left:1px;top:141px;width:291px;height:20px;background:#5c5c5c;"></div>
<svg class="r" style="left:0px;top:125px;" width="297" height="36" viewBox="0 125 297 36"><path d="M269,130.500 h4.500 M269.700,130.500 v4 M272.800,130.500 v4 M268,134.500 h6 M271,134.500 v3" stroke="#fff" stroke-width="1" fill="none"/><rect x="271.800" y="130.500" width="1.300" height="4" fill="#fff"/><path d="M281.200,130.200 l6,6 M287.200,130.200 l-6,6" stroke="#fff" stroke-width="1.400"/><rect x="1.500" y="142.500" width="17" height="17" fill="#4b6186" stroke="#6a92cc" stroke-width="1"/><path d="M4,148 h6 M7,145 v6" stroke="#6aa9f5" stroke-width="1"/><polygon points="10.5,148.0 10.5,156.0 12.4,154.2 13.9,157.3 15.1,156.6 13.7,153.8 16.3,153.8" fill="#fff" stroke="#555" stroke-width="0.6"/><polygon points="25.0,145.5 25.0,154.5 27.2,152.5 28.8,155.9 30.2,155.2 28.6,152.0 31.5,152.0" fill="#fff" stroke="#555" stroke-width="0.6"/><rect x="38" y="143" width="1" height="15" fill="#444"/><rect x="45.500" y="145.500" width="11" height="10" fill="none" stroke="#e0e0e0" stroke-width="1" stroke-dasharray="2,1.200"/><polygon points="52.5,149.0 52.5,157.0 54.4,155.2 55.9,158.3 57.1,157.6 55.7,154.8 58.3,154.8" fill="#fff" stroke="#555" stroke-width="0.6"/><rect x="63.500" y="145.500" width="11" height="10" fill="#999" stroke="#e0e0e0" stroke-width="1" stroke-dasharray="2,1.200"/><polygon points="70.5,149.0 70.5,157.0 72.4,155.2 73.9,158.3 75.1,157.6 73.7,154.8 76.3,154.8" fill="#fff" stroke="#555" stroke-width="0.6"/><path d="M81,151 l6,-6 v12 z M93,145 h-5 l5,5z M93,157 h-5 l5,-5z" fill="#6aa9f5"/><polygon points="88.5,149.0 88.5,157.0 90.4,155.2 91.9,158.3 93.1,157.6 91.7,154.8 94.3,154.8" fill="#fff" stroke="#555" stroke-width="0.6"/><path d="M99.500,145 h9 l-3.500,4 v5 l-2,-1.500 v-3.500 z" fill="#6aa9f5"/><path d="M109.500,147 l-2,4 h2 l-1.500,4 l3.500,-5 h-2 l1.500,-3z" fill="#f0a860"/><rect x="116.500" y="143" width="1" height="15" fill="#444"/><rect x="123.500" y="146.500" width="8" height="8" fill="none" stroke="#888" stroke-width="1" stroke-dasharray="2,1.200"/><path d="M127.500,152 v-8 M125.500,146 l2,-2 l2,2" stroke="#5a88c0" stroke-width="1" fill="none"/><polygon points="130.0,149.5 130.0,157.0 131.8,155.3 133.2,158.2 134.3,157.6 133.0,154.9 135.4,154.9" fill="#aaa" stroke="#555" stroke-width="0.6"/><path d="M142,148 l3,3 l5,-6" fill="none" stroke="#5a88c0" stroke-width="1.800"/><polygon points="149.0,149.5 149.0,157.0 150.8,155.3 152.2,158.2 153.3,157.6 152.0,154.9 154.4,154.9" fill="#aaa" stroke="#555" stroke-width="0.6"/><rect x="158" y="143" width="1" height="15" fill="#444"/><rect x="165" y="144" width="14" height="14" fill="#6aa9f5"/><polygon points="169.5,146.0 169.5,155.5 171.8,153.4 173.5,157.0 175.0,156.3 173.3,152.8 176.3,152.8" fill="#fff" stroke="#555" stroke-width="0.6"/><path d="M184,145 l6,6 M190,145 l-6,6" stroke="#f0a860" stroke-width="1.200"/><polygon points="190.5,150.0 190.5,157.5 192.3,155.8 193.7,158.7 194.8,158.1 193.5,155.4 195.9,155.4" fill="#fff" stroke="#555" stroke-width="0.6"/><circle cx="207.500" cy="151.500" r="5.500" fill="#b4b4b4"/></svg>
<span class="t" style="left:204.75px;top:145.30px;font-size:9px;line-height:13px;color:#2a2a2a;font-family:'Liberation Sans',sans-serif;font-weight:bold;">?</span>
<div class="r" style="left:1px;top:160.3px;width:290px;height:18.2px;background:#5c5c5c;border-bottom:1px solid #686868;box-sizing:border-box;"></div>
<div class="r" style="left:122px;top:160.3px;width:1px;height:18.2px;background:#686868;"></div>
<span class="t" style="left:6.80px;top:164.90px;font-size:10px;line-height:14px;color:#f0f0f0;font-family:'Liberation Sans',sans-serif;letter-spacing:-0.434px;">Объекты</span>
<span class="t" style="left:124.80px;top:164.90px;font-size:10px;line-height:14px;color:#9a9a9a;font-family:'Liberation Sans',sans-serif;letter-spacing:-0.651px;">Нет набора</span>
<div class="r" style="left:1px;top:178.5px;width:290px;height:16.9px;background:#404040;"></div>
<span class="t" style="left:6.80px;top:181.15px;font-size:10px;line-height:14px;color:#fff;font-family:'Liberation Sans',sans-serif;font-weight:bold;letter-spacing:-0.660px;">Общие</span>
<div class="r" style="left:275.5px;top:186.65px;width:6.5px;height:1.6px;background:#f0f0f0;"></div>
<div class="r" style="left:1px;top:195.4px;width:290px;height:17.9px;background:#5c5c5c;border-bottom:1px solid #686868;box-sizing:border-box;"></div>
<div class="r" style="left:122px;top:195.4px;width:1px;height:17.9px;background:#686868;"></div>
<span class="t" style="left:6.80px;top:198.55px;font-size:10px;line-height:14px;color:#f0f0f0;font-family:'Liberation Sans',sans-serif;letter-spacing:-1.029px;">Слой</span>
<svg class="r" style="left:125px;top:195.4px;" width="100" height="17.9" viewBox="125 195.4 100 17.9"><path d="M131.500,199.54999999999998 a4.300,4.300 0 0 1 2.300,8 v1.500 h-4.600 v-1.500 a4.300,4.300 0 0 1 2.300,-8z" fill="#f0a860"/><rect x="129.800" y="209.54999999999998" width="3.400" height="1.800" fill="#ddd"/><g stroke="#777" stroke-width="0.900"><path d="M145,202.04999999999998 v7 M141.500,205.54999999999998 h7 M142.500,203.04999999999998 l5,5 M147.500,203.04999999999998 l-5,5"/></g><rect x="155.500" y="205.04999999999998" width="9" height="6" fill="#737373"/><path d="M158,205.04999999999998 v-2.500 a2.500,2.500 0 0 1 5,0" fill="none" stroke="#737373" stroke-width="1.200"/><rect x="170.500" y="204.54999999999998" width="9.500" height="5.500" fill="#737373"/><rect x="172.500" y="201.04999999999998" width="5.500" height="4" fill="#6a6a6a"/><rect x="184.500" y="201.04999999999998" width="9" height="9" fill="#000"/><path d="M184.500,201.04999999999998 h9 v9 z" fill="#fff"/><rect x="184.500" y="201.04999999999998" width="9" height="9" fill="none" stroke="#000" stroke-width="0.800"/></svg>
<span class="t" style="left:195.00px;top:198.55px;font-size:10px;line-height:14px;color:#f4f4f4;font-family:'Liberation Sans',sans-serif;">0</span>
<div class="r" style="left:1px;top:213.3px;width:290px;height:17.8px;background:#5c5c5c;border-bottom:1px solid #686868;box-sizing:border-box;"></div>
<div class="r" style="left:122px;top:213.3px;width:1px;height:17.8px;background:#686868;"></div>
<span class="t" style="left:6.80px;top:216.40px;font-size:10px;line-height:14px;color:#f0f0f0;font-family:'Liberation Sans',sans-serif;letter-spacing:-0.552px;">Цвет</span>
<svg class="r" style="left:125px;top:213.3px;" width="20" height="17.8" viewBox="125 213.3 20 17.8"><rect x="127" y="218.9" width="9" height="9" fill="#000"/><path d="M127,218.9 h9 v9 z" fill="#fff"/><rect x="127" y="218.9" width="9" height="9" fill="none" stroke="#000" stroke-width="0.800"/></svg>
<span class="t" style="left:138.70px;top:216.40px;font-size:10px;line-height:14px;color:#f4f4f4;font-family:'Liberation Sans',sans-serif;letter-spacing:-0.848px;">По слою</span>
<div class="r" style="left:1px;top:231.1px;width:290px;height:17.8px;background:#5c5c5c;border-bottom:1px solid #686868;box-sizing:border-box;"></div>
<div class="r" style="left:122px;top:231.1px;width:1px;height:17.8px;background:#686868;"></div>
<span class="t" style="left:6.80px;top:234.20px;font-size:10px;line-height:14px;color:#f0f0f0;font-family:'Liberation Sans',sans-serif;letter-spacing:-0.707px;">Тип линий</span>
<div class="r" style="left:127px;top:240.7px;width:44px;height:1px;background:#e8e8e8;"></div>
<span class="t" style="left:173.00px;top:234.20px;font-size:10px;line-height:14px;color:#f4f4f4;font-family:'Liberation Sans',sans-serif;letter-spacing:-0.791px;">По слою</span>
<div class="r" style="left:1px;top:248.9px;width:290px;height:17.8px;background:#5c5c5c;border-bottom:1px solid #686868;box-sizing:border-box;"></div>
<div class="r" style="left:122px;top:248.9px;width:1px;height:17.8px;background:#686868;"></div>
<span class="t" style="left:6.80px;top:252.00px;font-size:10px;line-height:14px;color:#f0f0f0;font-family:'Liberation Sans',sans-serif;letter-spacing:-0.672px;">Масштаб типа линий</span>
<span class="t" style="left:124.80px;top:252.00px;font-size:10px;line-height:14px;color:#f4f4f4;font-family:'Liberation Sans',sans-serif;letter-spacing:-0.828px;">100</span>
<div class="r" style="left:1px;top:266.7px;width:290px;height:17.8px;background:#5c5c5c;border-bottom:1px solid #686868;box-sizing:border-box;"></div>
<div class="r" style="left:122px;top:266.7px;width:1px;height:17.8px;background:#686868;"></div>
<span class="t" style="left:6.80px;top:269.80px;font-size:10px;line-height:14px;color:#f0f0f0;font-family:'Liberation Sans',sans-serif;letter-spacing:-0.814px;">Вес линий</span>
<div class="r" style="left:127px;top:276.3px;width:44px;height:1px;background:#e8e8e8;"></div>
<span class="t" style="left:173.00px;top:269.80px;font-size:10px;line-height:14px;color:#f4f4f4;font-family:'Liberation Sans',sans-serif;letter-spacing:-0.791px;">По слою</span>
<div class="r" style="left:1px;top:284.5px;width:290px;height:17.6px;background:#5c5c5c;border-bottom:1px solid #686868;box-sizing:border-box;"></div>
<div class="r" style="left:122px;top:284.5px;width:1px;height:17.6px;background:#686868;"></div>
<span class="t" style="left:6.80px;top:287.50px;font-size:10px;line-height:14px;color:#f0f0f0;font-family:'Liberation Sans',sans-serif;letter-spacing:-0.743px;">Толщина</span>
<span class="t" style="left:124.80px;top:287.50px;font-size:10px;line-height:14px;color:#f4f4f4;font-family:'Liberation Sans',sans-serif;">0</span>
<div class="r" style="left:1px;top:302.1px;width:290px;height:17.1px;background:#404040;"></div>
<span class="t" style="left:6.80px;top:304.85px;font-size:10px;line-height:14px;color:#fff;font-family:'Liberation Sans',sans-serif;font-weight:bold;letter-spacing:-0.833px;">Стили</span>
<div class="r" style="left:275.5px;top:310.35px;width:6.5px;height:1.6px;background:#f0f0f0;"></div>
<div class="r" style="left:1px;top:319.2px;width:290px;height:17.3px;background:#5c5c5c;border-bottom:1px solid #686868;box-sizing:border-box;"></div>
<div class="r" style="left:122px;top:319.2px;width:1px;height:17.3px;background:#686868;"></div>
<span class="t" style="left:6.80px;top:322.05px;font-size:10px;line-height:14px;color:#f0f0f0;font-family:'Liberation Sans',sans-serif;letter-spacing:-0.405px;">Стиль текста</span>
<span class="t" style="left:124.80px;top:322.05px;font-size:10px;line-height:14px;color:#f4f4f4;font-family:'Liberation Sans',sans-serif;letter-spacing:-0.613px;">ГОСТ 2.304</span>
<div class="r" style="left:1px;top:336.5px;width:290px;height:17.4px;background:#5c5c5c;border-bottom:1px solid #686868;box-sizing:border-box;"></div>
<div class="r" style="left:122px;top:336.5px;width:1px;height:17.4px;background:#686868;"></div>
<span class="t" style="left:6.80px;top:339.40px;font-size:10px;line-height:14px;color:#f0f0f0;font-family:'Liberation Sans',sans-serif;letter-spacing:-0.724px;">Размерный стиль</span>
<span class="t" style="left:124.80px;top:339.40px;font-size:10px;line-height:14px;color:#f4f4f4;font-family:'Liberation Sans',sans-serif;letter-spacing:-1.251px;">СПДС</span>
<div class="r" style="left:1px;top:353.9px;width:290px;height:17.6px;background:#404040;"></div>
<span class="t" style="left:6.80px;top:356.90px;font-size:10px;line-height:14px;color:#fff;font-family:'Liberation Sans',sans-serif;font-weight:bold;letter-spacing:-0.693px;">Стиль печати</span>
<div class="r" style="left:275.5px;top:362.4px;width:6.5px;height:1.6px;background:#f0f0f0;"></div>
<div class="r" style="left:1px;top:371.5px;width:290px;height:17.8px;background:#5c5c5c;border-bottom:1px solid #686868;box-sizing:border-box;"></div>
<div class="r" style="left:122px;top:371.5px;width:1px;height:17.8px;background:#686868;"></div>
<span class="t" style="left:6.80px;top:374.60px;font-size:10px;line-height:14px;color:#f0f0f0;font-family:'Liberation Sans',sans-serif;letter-spacing:-0.456px;">Стиль печати</span>
<span class="t" style="left:124.80px;top:374.60px;font-size:10px;line-height:14px;color:#9a9a9a;font-family:'Liberation Sans',sans-serif;letter-spacing:-0.522px;">По цвету</span>
<div class="r" style="left:1px;top:389.3px;width:290px;height:17.8px;background:#5c5c5c;border-bottom:1px solid #686868;box-sizing:border-box;"></div>
<div class="r" style="left:122px;top:389.3px;width:1px;height:17.8px;background:#686868;"></div>
<span class="t" style="left:6.80px;top:392.40px;font-size:10px;line-height:14px;color:#f0f0f0;font-family:'Liberation Sans',sans-serif;letter-spacing:-0.566px;">Таблица стилей печати</span>
<span class="t" style="left:124.80px;top:392.40px;font-size:10px;line-height:14px;color:#f4f4f4;font-family:'Liberation Sans',sans-serif;letter-spacing:-0.711px;">Нет</span>
<div class="r" style="left:1px;top:407.1px;width:290px;height:17.8px;background:#5c5c5c;border-bottom:1px solid #686868;box-sizing:border-box;"></div>
<div class="r" style="left:122px;top:407.1px;width:1px;height:17.8px;background:#686868;"></div>
<span class="t" style="left:6.80px;top:410.20px;font-size:10px;line-height:14px;color:#f0f0f0;font-family:'Liberation Sans',sans-serif;letter-spacing:-0.461px;">Пространство таблицы с...</span>
<span class="t" style="left:124.80px;top:410.20px;font-size:10px;line-height:14px;color:#9a9a9a;font-family:'Liberation Sans',sans-serif;letter-spacing:-0.699px;">Модель</span>
<div class="r" style="left:1px;top:424.9px;width:290px;height:17.9px;background:#5c5c5c;border-bottom:1px solid #686868;box-sizing:border-box;"></div>
<div class="r" style="left:122px;top:424.9px;width:1px;height:17.9px;background:#686868;"></div>
<span class="t" style="left:6.80px;top:428.05px;font-size:10px;line-height:14px;color:#f0f0f0;font-family:'Liberation Sans',sans-serif;letter-spacing:-0.491px;">Тип стилей печати</span>
<span class="t" style="left:124.80px;top:428.05px;font-size:10px;line-height:14px;color:#9a9a9a;font-family:'Liberation Sans',sans-serif;letter-spacing:-0.575px;">Недоступно</span>
<div class="r" style="left:1px;top:442.8px;width:290px;height:16.4px;background:#404040;"></div>
<span class="t" style="left:6.80px;top:445.20px;font-size:10px;line-height:14px;color:#fff;font-family:'Liberation Sans',sans-serif;font-weight:bold;letter-spacing:-0.667px;">Разное</span>
<div class="r" style="left:275.5px;top:450.7px;width:6.5px;height:1.6px;background:#f0f0f0;"></div>
<div class="r" style="left:1px;top:459.2px;width:290px;height:17.7px;background:#5c5c5c;border-bottom:1px solid #686868;box-sizing:border-box;"></div>
<div class="r" style="left:122px;top:459.2px;width:1px;height:17.7px;background:#686868;"></div>
<span class="t" style="left:6.80px;top:462.25px;font-size:10px;line-height:14px;color:#f0f0f0;font-family:'Liberation Sans',sans-serif;letter-spacing:-0.657px;">Знак ПСК Вкл</span>
<span class="t" style="left:124.80px;top:462.25px;font-size:10px;line-height:14px;color:#f4f4f4;font-family:'Liberation Sans',sans-serif;letter-spacing:-0.567px;">Да</span>
<div class="r" style="left:1px;top:476.9px;width:290px;height:17.6px;background:#5c5c5c;border-bottom:1px solid #686868;box-sizing:border-box;"></div>
<div class="r" style="left:122px;top:476.9px;width:1px;height:17.6px;background:#686868;"></div>
<span class="t" style="left:6.80px;top:479.90px;font-size:10px;line-height:14px;color:#f0f0f0;font-family:'Liberation Sans',sans-serif;letter-spacing:-0.452px;">Знак ПСК в начале коор...</span>
<span class="t" style="left:124.80px;top:479.90px;font-size:10px;line-height:14px;color:#f4f4f4;font-family:'Liberation Sans',sans-serif;letter-spacing:-0.567px;">Да</span>
<div class="r" style="left:1px;top:494.5px;width:290px;height:17.6px;background:#5c5c5c;border-bottom:1px solid #686868;box-sizing:border-box;"></div>
<div class="r" style="left:122px;top:494.5px;width:1px;height:17.6px;background:#686868;"></div>
<span class="t" style="left:6.80px;top:497.50px;font-size:10px;line-height:14px;color:#f0f0f0;font-family:'Liberation Sans',sans-serif;letter-spacing:-0.687px;">ПСК в каждом ВЭкране</span>
<span class="t" style="left:124.80px;top:497.50px;font-size:10px;line-height:14px;color:#f4f4f4;font-family:'Liberation Sans',sans-serif;letter-spacing:-0.567px;">Да</span>
<div class="r" style="left:1px;top:512.1px;width:290px;height:17.7px;background:#5c5c5c;border-bottom:1px solid #686868;box-sizing:border-box;"></div>
<div class="r" style="left:122px;top:512.1px;width:1px;height:17.7px;background:#686868;"></div>
<span class="t" style="left:6.80px;top:515.15px;font-size:10px;line-height:14px;color:#f0f0f0;font-family:'Liberation Sans',sans-serif;letter-spacing:-1.099px;">Имя ПСК</span>
<span class="t" style="left:124.80px;top:515.15px;font-size:10px;line-height:14px;color:#f4f4f4;font-family:'Liberation Sans',sans-serif;letter-spacing:-0.804px;">Мировая СК</span>
<div class="r" style="left:1px;top:529.8px;width:290px;height:17.7px;background:#5c5c5c;border-bottom:1px solid #686868;box-sizing:border-box;"></div>
<div class="r" style="left:122px;top:529.8px;width:1px;height:17.7px;background:#686868;"></div>
<span class="t" style="left:6.80px;top:532.85px;font-size:10px;line-height:14px;color:#f0f0f0;font-family:'Liberation Sans',sans-serif;letter-spacing:-0.632px;">Визуальный стиль</span>
<span class="t" style="left:124.80px;top:532.85px;font-size:10px;line-height:14px;color:#f4f4f4;font-family:'Liberation Sans',sans-serif;letter-spacing:-0.510px;">2D-каркас</span>
<div class="r" style="left:297px;top:125px;width:1262px;height:16px;background:#4c4c4c;"></div>
<div class="r" style="left:297px;top:127px;width:94px;height:14px;background:#787878;"></div>
<span class="t" style="left:314.00px;top:127.00px;font-size:10px;line-height:14px;color:#fff;font-family:'Liberation Sans',sans-serif;letter-spacing:-0.414px;">Без имени0*</span>
<svg class="r" style="left:380px;top:129px;" width="10" height="10" viewBox="0 0 10 10"><path d="M1.500,1.500 l6,6 M7.500,1.500 l-6,6" stroke="#fff" stroke-width="1.200"/></svg>
<svg class="r" style="left:1544px;top:130px;" width="10" height="8" viewBox="0 0 10 8"><path d="M1,1.500 h8 l-4,4.500z" fill="#fff"/></svg>
<div class="r" style="left:296.5px;top:140.5px;width:1262.5px;height:652.5px;background:#5e5e5e;"></div>
<div class="r" style="left:296.5px;top:141px;width:1.8px;height:634px;background:#7e7e7e;"></div>
<div class="r" style="left:298.3px;top:142.2px;width:1258.5px;height:632.8px;background:#2a2a2a;"></div>
<div class="r" style="left:304.3px;top:146.8px;width:19.0px;height:12.2px;background:#4b4b4b;border-radius:6.5px;"></div>
<span class="t" style="left:310.88px;top:146.30px;font-size:10px;line-height:14px;color:#858585;font-family:'Liberation Sans',sans-serif;">+</span>
<div class="r" style="left:327.3px;top:146.8px;width:43.69999999999999px;height:12.2px;background:#4b4b4b;border-radius:6.5px;"></div>
<span class="t" style="left:334.65px;top:146.30px;font-size:10px;line-height:14px;color:#858585;font-family:'Liberation Sans',sans-serif;letter-spacing:-0.739px;">Сверху</span>
<div class="r" style="left:374.3px;top:146.8px;width:58.39999999999998px;height:12.2px;background:#4b4b4b;border-radius:6.5px;"></div>
<span class="t" style="left:382.00px;top:146.30px;font-size:10px;line-height:14px;color:#858585;font-family:'Liberation Sans',sans-serif;letter-spacing:-0.443px;">2D-каркас</span>
<div class="r" style="left:436.7px;top:146.8px;width:121.59999999999997px;height:12.2px;background:#4b4b4b;border-radius:6.5px;"></div>
<span class="t" style="left:444.00px;top:146.30px;font-size:10px;line-height:14px;color:#858585;font-family:'Liberation Sans',sans-serif;letter-spacing:-0.698px;">— нет связанных видов —</span>
<svg class="r" style="left:1400px;top:150px;" width="160" height="145" viewBox="1400 150 160 145"><circle cx="1477.600" cy="221.500" r="65.500" fill="none" stroke="#8c8c8c" stroke-width="0.800"/><circle cx="1477.600" cy="221.500" r="43.300" fill="none" stroke="#8c8c8c" stroke-width="0.800"/><path d="M1412,221.500 h131 M1477.600,156 v131" stroke="#8c8c8c" stroke-width="0.800"/><circle cx="1477.600" cy="221.500" r="4.500" fill="#b08050"/></svg>
<div class="r" style="left:1454.6px;top:287.7px;width:44px;height:12.5px;background:#4a4a4a;border-radius:6px;"></div>
<span class="t" style="left:1462.10px;top:287.25px;font-size:9.5px;line-height:13.5px;color:#8a8a8a;font-family:'Liberation Sans',sans-serif;letter-spacing:-0.460px;">Сверху</span>
<svg class="r" style="left:320px;top:615px;" width="140" height="135" viewBox="320 615 140 135"><g fill="none" stroke="#e6e6e6" stroke-width="1"><path d="M337.500,727 V646 M330.700,668 L337.500,646 L344.300,668 z"/><rect x="328" y="727" width="19" height="19"/><path d="M347,736.500 H428 M405,730 L428,736.500 L405,743 z"/><path d="M333,622 l4.500,6 l4.500,-6 M337.500,628 v5"/><path d="M441,731.500 l10,10 M451,731.500 l-10,10"/></g></svg>
<div class="r" style="left:297px;top:775.5px;width:1262px;height:17.5px;background:#4c4c4c;"></div>
<div class="r" style="left:297px;top:775.3px;width:1261px;height:1.2px;background:#686868;"></div>
<div class="r" style="left:297px;top:792.6px;width:1261px;height:1.6px;background:#727272;"></div>
<div class="r" style="left:1556.8px;top:141px;width:1.6px;height:653px;background:#6c6c6c;"></div>
<svg class="r" style="left:299px;top:776px;" width="16" height="16" viewBox="299 776 16 16"><rect x="300.500" y="778.500" width="12" height="11" fill="#3a5070" stroke="#ddd" stroke-width="1"/><path d="M301,782 h11 M301,785.500 h11" stroke="#ddd" stroke-width="1"/></svg>
<div class="r" style="left:327.5px;top:777px;width:46px;height:15px;background:#7a7a7a;"></div>
<span class="t" style="left:333.80px;top:777.80px;font-size:10px;line-height:14px;color:#fff;font-family:'Liberation Sans',sans-serif;letter-spacing:-0.483px;">Модель</span>
<div class="r" style="left:374.5px;top:777px;width:20.5px;height:15px;background:#5a5a5a;border:1px solid #6e6e6e;box-sizing:border-box;"></div>
<span class="t" style="left:378.89px;top:778.05px;font-size:9.5px;line-height:13.5px;color:#cfcfcf;font-family:'Liberation Sans',sans-serif;">A4</span>
<div class="r" style="left:396.3px;top:777px;width:20.5px;height:15px;background:#5a5a5a;border:1px solid #6e6e6e;box-sizing:border-box;"></div>
<span class="t" style="left:400.69px;top:778.05px;font-size:9.5px;line-height:13.5px;color:#cfcfcf;font-family:'Liberation Sans',sans-serif;">A3</span>
<div class="r" style="left:418px;top:777px;width:20.5px;height:15px;background:#5a5a5a;border:1px solid #6e6e6e;box-sizing:border-box;"></div>
<span class="t" style="left:422.39px;top:778.05px;font-size:9.5px;line-height:13.5px;color:#cfcfcf;font-family:'Liberation Sans',sans-serif;">A2</span>
<div class="r" style="left:439.8px;top:777px;width:20.5px;height:15px;background:#5a5a5a;border:1px solid #6e6e6e;box-sizing:border-box;"></div>
<span class="t" style="left:444.19px;top:778.05px;font-size:9.5px;line-height:13.5px;color:#cfcfcf;font-family:'Liberation Sans',sans-serif;">A1</span>
<div class="r" style="left:354px;top:166px;width:1019px;height:511px;background:#ffffff;box-shadow:0 0 0 1px #3a3a3a, 0 2px 10px rgba(0,0,0,0.5);"></div>
<svg class="r" style="left:354px;top:166px;" width="1019" height="24" viewBox="354 166 1019 24"><path d="M364,171.500 h6.500 q1.300,0 1.300,1.300 v6 q0,4.200 -4.200,4.200 h-4.300 q-1.800,0 -1.800,-1.800 v-7 q0,-2.700 2.500,-2.700z" fill="url(#logo)"/><path d="M365.300,176.800 q0,-1.800 1.800,-1.800 h1.400 v4.200 q0,1.400 -1.400,1.400 h-0.400 q-1.400,0 -1.400,-1.400z" fill="#e4f7ff"/><path d="M368.900,172.300 v10" stroke="#1a80c0" stroke-width="0.600"/><path d="M1357.200,173.200 l8,8 M1365.200,173.200 l-8,8" stroke="#222" stroke-width="1.100"/></svg>
<span class="t" style="left:377.50px;top:170.75px;font-size:10.5px;line-height:14.5px;color:#1a1a1a;font-family:'Liberation Sans',sans-serif;letter-spacing:-0.427px;">Открыть изображение</span>
<svg class="r" style="left:354px;top:190px;" width="1019" height="34" viewBox="354 190 1019 34"><path d="M374,206.300 h-9 M369,202 l-4.300,4.300 l4.300,4.300" fill="none" stroke="#555" stroke-width="1.100"/><path d="M389,206.300 h9 M394,202 l4.300,4.300 l-4.300,4.300" fill="none" stroke="#c8c8c8" stroke-width="1.100"/><path d="M410.500,205 l2.200,2.200 l2.200,-2.200" fill="none" stroke="#777" stroke-width="1"/><path d="M429.200,211 v-9 M424.900,206 l4.300,-4.300 l4.300,4.300" fill="none" stroke="#555" stroke-width="1.100"/><rect x="440.500" y="194.500" width="749" height="23.500" fill="#fff" stroke="#d9d9d9" stroke-width="1"/><path d="M1162.500,194.500 v23.500" stroke="#d9d9d9" stroke-width="1"/><path d="M444.500,199 h8.500 v12.500 h-8.500z" fill="#ffdc78"/><path d="M453,205 h2 v6.500 h-2z" fill="#f0c040"/><path d="M444.500,199 h10 v2 h-10z" fill="#ffe9a6"/><path d="M461.5,203.5 l2.800,2.800 l-2.800,2.800" fill="none" stroke="#555" stroke-width="1"/><path d="M553.2,203.5 l2.800,2.800 l-2.800,2.800" fill="none" stroke="#555" stroke-width="1"/><path d="M633.5,203.5 l2.800,2.800 l-2.800,2.800" fill="none" stroke="#555" stroke-width="1"/><path d="M1147,204.500 l3,3 l3,-3" fill="none" stroke="#444" stroke-width="1.300"/><path d="M1179.500,206.500 a3.500,3.500 0 1 1 -1.500,-2.900" fill="none" stroke="#444" stroke-width="1"/><path d="M1176.500,201.500 l2,2 l-2.500,1z" fill="#444"/><rect x="1199.500" y="194.500" width="164" height="23.500" fill="#fff" stroke="#d9d9d9" stroke-width="1"/><circle cx="1218.500" cy="205" r="3" fill="none" stroke="#888" stroke-width="0.900"/><path d="M1216.300,207.300 l-3.300,3.300" stroke="#888" stroke-width="0.900"/></svg>
<span class="t" style="left:472.50px;top:199.50px;font-size:10px;line-height:14px;color:#1a1a1a;font-family:'Liberation Sans',sans-serif;letter-spacing:-0.163px;">Этот компьютер</span>
<span class="t" style="left:564.00px;top:199.50px;font-size:10px;line-height:14px;color:#1a1a1a;font-family:'Liberation Sans',sans-serif;letter-spacing:-0.065px;">Рабочий стол</span>
<span class="t" style="left:644.00px;top:199.50px;font-size:10px;line-height:14px;color:#1a1a1a;font-family:'Liberation Sans',sans-serif;letter-spacing:-0.202px;">Материалы к статье</span>
<span class="t" style="left:1233.00px;top:199.50px;font-size:10px;line-height:14px;color:#6a6a6a;font-family:'Liberation Sans',sans-serif;letter-spacing:-0.185px;">Поиск в: Материалы к статье</span>
<div class="r" style="left:354px;top:224px;width:1019px;height:25px;background:#f3f5f7;"></div>
<span class="t" style="left:368.30px;top:229.50px;font-size:10px;line-height:14px;color:#1e395b;font-family:'Liberation Sans',sans-serif;letter-spacing:-0.073px;">Упорядочить</span>
<span class="t" style="left:463.00px;top:229.50px;font-size:10px;line-height:14px;color:#1e395b;font-family:'Liberation Sans',sans-serif;letter-spacing:-0.271px;">Новая папка</span>
<svg class="r" style="left:354px;top:224px;" width="1019" height="25" viewBox="354 224 1019 25"><path d="M432,235 h6 l-3,3.500z" fill="#1e395b"/><rect x="1275.500" y="232.500" width="11" height="8" fill="#e8eef4" stroke="#8a9ab0" stroke-width="0.800"/><rect x="1277" y="234" width="8" height="3" fill="#3a6aa0"/><path d="M1277,239 h8" stroke="#8a9ab0" stroke-width="0.800"/><path d="M1295.500,235.500 h6 l-3,3.500z" fill="#222"/><rect x="1319.500" y="231.500" width="12" height="9.500" fill="#fff" stroke="#444" stroke-width="1"/><path d="M1327.500,231.500 v9.500" stroke="#444" stroke-width="1"/><circle cx="1354.500" cy="236.500" r="6" fill="#0b62c4"/></svg>
<span class="t" style="left:1351.45px;top:229.80px;font-size:10px;line-height:14px;color:#fff;font-family:'Liberation Sans',sans-serif;font-weight:bold;">?</span>
<div class="r" style="left:354px;top:587px;width:149px;height:19.5px;background:#d9d9d9;"></div>
<span class="t" style="left:397.00px;top:252.70px;font-size:10px;line-height:14px;color:#1a1a1a;font-family:'Liberation Sans',sans-serif;letter-spacing:-0.106px;">Рабочий стол</span>
<span class="t" style="left:397.00px;top:272.20px;font-size:10px;line-height:14px;color:#1a1a1a;font-family:'Liberation Sans',sans-serif;letter-spacing:-0.131px;">Загрузки</span>
<span class="t" style="left:397.00px;top:291.70px;font-size:10px;line-height:14px;color:#1a1a1a;font-family:'Liberation Sans',sans-serif;letter-spacing:-0.017px;">Документы</span>
<span class="t" style="left:397.00px;top:311.20px;font-size:10px;line-height:14px;color:#1a1a1a;font-family:'Liberation Sans',sans-serif;letter-spacing:-0.095px;">Изображения</span>
<span class="t" style="left:397.00px;top:330.70px;font-size:10px;line-height:14px;color:#1a1a1a;font-family:'Liberation Sans',sans-serif;letter-spacing:-0.252px;">ProgramData</span>
<span class="t" style="left:397.00px;top:350.20px;font-size:10px;line-height:14px;color:#1a1a1a;font-family:'Liberation Sans',sans-serif;letter-spacing:-0.566px;">23.0</span>
<span class="t" style="left:390.80px;top:376.20px;font-size:10px;line-height:14px;color:#1a1a1a;font-family:'Liberation Sans',sans-serif;letter-spacing:-0.366px;">nanoCAD</span>
<span class="t" style="left:390.80px;top:402.20px;font-size:10px;line-height:14px;color:#1a1a1a;font-family:'Liberation Sans',sans-serif;letter-spacing:-0.355px;">OneDrive</span>
<span class="t" style="left:390.80px;top:428.20px;font-size:10px;line-height:14px;color:#1a1a1a;font-family:'Liberation Sans',sans-serif;letter-spacing:-0.286px;">Яндекс.Диск</span>
<span class="t" style="left:390.80px;top:454.20px;font-size:10px;line-height:14px;color:#1a1a1a;font-family:'Liberation Sans',sans-serif;letter-spacing:-0.134px;">Этот компьютер</span>
<span class="t" style="left:397.00px;top:473.70px;font-size:10px;line-height:14px;color:#1a1a1a;font-family:'Liberation Sans',sans-serif;letter-spacing:-0.543px;">Видео</span>
<span class="t" style="left:397.00px;top:493.20px;font-size:10px;line-height:14px;color:#1a1a1a;font-family:'Liberation Sans',sans-serif;letter-spacing:-0.028px;">Документы</span>
<span class="t" style="left:397.00px;top:512.70px;font-size:10px;line-height:14px;color:#1a1a1a;font-family:'Liberation Sans',sans-serif;letter-spacing:-0.118px;">Загрузки</span>
<span class="t" style="left:397.00px;top:532.20px;font-size:10px;line-height:14px;color:#1a1a1a;font-family:'Liberation Sans',sans-serif;letter-spacing:-0.113px;">Изображения</span>
<span class="t" style="left:397.00px;top:551.70px;font-size:10px;line-height:14px;color:#1a1a1a;font-family:'Liberation Sans',sans-serif;letter-spacing:-0.095px;">Музыка</span>
<span class="t" style="left:397.00px;top:571.20px;font-size:10px;line-height:14px;color:#1a1a1a;font-family:'Liberation Sans',sans-serif;letter-spacing:-0.171px;">Объемные объекты</span>
<span class="t" style="left:397.00px;top:590.70px;font-size:10px;line-height:14px;color:#1a1a1a;font-family:'Liberation Sans',sans-serif;letter-spacing:-0.098px;">Рабочий стол</span>
<span class="t" style="left:397.00px;top:610.20px;font-size:10px;line-height:14px;color:#1a1a1a;font-family:'Liberation Sans',sans-serif;letter-spacing:-0.149px;">Локальный диск (C:)</span>
<svg class="r" style="left:354px;top:249px;overflow:hidden;" width="150" height="371" viewBox="354 249 150 371"><rect x="380" y="253.7" width="13" height="10" fill="#1f93f3"/><rect x="380" y="253.7" width="13" height="10" fill="none" stroke="#1170c8" stroke-width="0.700"/><rect x="383" y="263.7" width="7" height="1.200" fill="#2a6ab0"/><g transform="rotate(40 496 259.5)"><path d="M494,255.5 h4 M494.700,255.5 v4 M497.300,255.5 v4 M493,259.5 h6 M496,259.5 v4.500" stroke="#777" stroke-width="0.900" fill="none"/><rect x="494.700" y="255.5" width="2.600" height="4" fill="#999"/></g><path d="M384.5,272.7 h4 v5.500 h3.500 l-5.500,6 l-5.500,-6 h3.500z" fill="#2b88e0"/><g transform="rotate(40 496 279)"><path d="M494,275 h4 M494.700,275 v4 M497.300,275 v4 M493,279 h6 M496,279 v4.500" stroke="#777" stroke-width="0.900" fill="none"/><rect x="494.700" y="275" width="2.600" height="4" fill="#999"/></g><path d="M382,292.2 h7 l2.500,2.500 v9.500 h-9.500z" fill="#fafafa" stroke="#999" stroke-width="0.700"/><path d="M384,295.7 h5.500 M384,297.7 h5.500 M384,299.7 h5.500 M384,301.7 h5.500" stroke="#5a9ae0" stroke-width="0.800"/><g transform="rotate(40 496 298.5)"><path d="M494,294.5 h4 M494.700,294.5 v4 M497.300,294.5 v4 M493,298.5 h6 M496,298.5 v4.500" stroke="#777" stroke-width="0.900" fill="none"/><rect x="494.700" y="294.5" width="2.600" height="4" fill="#999"/></g><rect x="380.5" y="312.7" width="12.500" height="9.500" fill="#f4f4f4" stroke="#999" stroke-width="0.700"/><rect x="382" y="314.2" width="9.500" height="6.500" fill="#8ac4ec"/><path d="M382,320.7 l3.500,-3.500 l2.500,2 l2,-1.500 l1.500,1.500 v1.500z" fill="#4a7a50"/><g transform="rotate(40 496 318)"><path d="M494,314 h4 M494.700,314 v4 M497.300,314 v4 M493,318 h6 M496,318 v4.500" stroke="#777" stroke-width="0.900" fill="none"/><rect x="494.700" y="314" width="2.600" height="4" fill="#999"/></g><path d="M381.5,331.2 h9 v12 h-9z" fill="#ffe9a6"/><path d="M381.5,331.2 h7 v12 h-7z" fill="#ffdc78"/><path d="M388.5,337.2 h2 v6 h-2z" fill="#f0c040"/><g transform="rotate(40 496 337.5)"><path d="M494,333.5 h4 M494.700,333.5 v4 M497.300,333.5 v4 M493,337.5 h6 M496,337.5 v4.500" stroke="#777" stroke-width="0.900" fill="none"/><rect x="494.700" y="333.5" width="2.600" height="4" fill="#999"/></g><path d="M381.5,350.7 h9 v12 h-9z" fill="#ffe9a6"/><path d="M381.5,350.7 h7 v12 h-7z" fill="#ffdc78"/><path d="M388.5,356.7 h2 v6 h-2z" fill="#f0c040"/><path d="M376,376.2 h8 q1.500,0 1.500,1.500 v7 q0,4.500 -4.500,4.500 h-5.500 q-2,0 -2,-2 v-8 q0,-3 2.500,-3z" fill="url(#logo)"/><path d="M377.6,382.2 q0,-2 2,-2 h1.600 v4.600 q0,1.600 -1.600,1.600 h-0.400 q-1.600,0 -1.600,-1.600z" fill="#e4f7ff"/><path d="M381.6,377.2 v11" stroke="#1a80c0" stroke-width="0.600"/><path d="M376,412.7 a3,3 0 0 1 0,-6 a4,4 0 0 1 7.500,-1 a3.500,3.500 0 0 1 0.500,7z" fill="#1a78d8"/><path d="M374.5,428.7 h10 v12 h-10z" fill="#ffe9a6"/><path d="M374.5,428.7 h8 v12 h-8z" fill="#ffdc78"/><ellipse cx="382" cy="438.2" rx="3.500" ry="2" fill="#2a6ad8" transform="rotate(-25 382 438.2)"/><rect x="373" y="455.2" width="13" height="9" fill="#35a8f0" stroke="#7ac" stroke-width="0.700"/><rect x="377" y="464.2" width="5" height="1.500" fill="#999"/><rect x="375" y="465.7" width="9" height="1" fill="#aaa"/><rect x="381" y="474.2" width="11" height="12" fill="#444"/><rect x="383" y="475.2" width="7" height="4.500" fill="#6a8ad0"/><rect x="383" y="480.7" width="7" height="4.500" fill="#c09050"/><path d="M381.8,475.2 v10 M391.2,475.2 v10" stroke="#ddd" stroke-width="0.800" stroke-dasharray="1,1"/><path d="M382,493.7 h7 l2.500,2.500 v9.500 h-9.500z" fill="#fafafa" stroke="#999" stroke-width="0.700"/><path d="M384,497.2 h5.500 M384,499.2 h5.500 M384,501.2 h5.500 M384,503.2 h5.500" stroke="#5a9ae0" stroke-width="0.800"/><path d="M384.5,513.2 h4 v5.500 h3.500 l-5.500,6 l-5.500,-6 h3.500z" fill="#2b88e0"/><rect x="380.5" y="533.7" width="12.500" height="9.500" fill="#f4f4f4" stroke="#999" stroke-width="0.700"/><rect x="382" y="535.2" width="9.500" height="6.500" fill="#8ac4ec"/><path d="M382,541.7 l3.500,-3.500 l2.500,2 l2,-1.500 l1.500,1.500 v1.500z" fill="#4a7a50"/><path d="M386.5,552.2 v9" stroke="#1a88e0" stroke-width="1.500"/><ellipse cx="384.5" cy="561.7" rx="3" ry="2.300" fill="#1a88e0"/><path d="M386.5,552.2 q4,1 4,5" stroke="#1a88e0" stroke-width="1.500" fill="none"/><path d="M386.5,571.2 l6,2.500 v7 l-6,3 l-6,-3 v-7z" fill="#35c0e8"/><path d="M386.5,576.7 l6,-3 v7 l-6,3z" fill="#1a90c8"/><path d="M386.5,576.7 l-6,-3 l6,-2.500 l6,2.500z" fill="#8ae0f8"/><rect x="380" y="591.7" width="13" height="10" fill="#1f93f3"/><rect x="380" y="591.7" width="13" height="10" fill="none" stroke="#1170c8" stroke-width="0.700"/><rect x="383" y="601.7" width="7" height="1.200" fill="#2a6ab0"/><rect x="381" y="618.2" width="12" height="3.500" fill="#bbb"/><rect x="381" y="620.7" width="12" height="1" fill="#888"/><path d="M381,612.2 h2.500 v2.500 h-2.500z M384,612.2 h2.500 v2.500 h-2.500z M381,615.2 h2.500 v2.500 h-2.500z M384,615.2 h2.500 v2.500 h-2.500z" fill="#1a98e8"/></svg>
<div class="r" style="left:503.5px;top:249px;width:13.5px;height:371px;background:#f0f0f0;"></div>
<div class="r" style="left:503.5px;top:296px;width:13.5px;height:267px;background:#c9c9c9;"></div>
<svg class="r" style="left:503px;top:249px;" width="14" height="371" viewBox="503 249 14 371"><path d="M507,260.500 l3.500,-3.500 l3.500,3.500" fill="none" stroke="#444" stroke-width="1.300"/><path d="M507,610 l3.500,3.500 l3.500,-3.500" fill="none" stroke="#444" stroke-width="1.300"/></svg>
<div class="r" style="left:532px;top:254px;width:85px;height:106.5px;background:#d9d9d9;"></div>
<div class="r" style="left:536.5px;top:278px;width:74px;height:53px;background:#fff;box-shadow:0.5px 1px 1.5px rgba(0,0,0,0.45);"></div>
<svg class="r" style="left:536.500px;top:278px" width="74" height="53" viewBox="0 0 1233 877" preserveAspectRatio="none"><rect x="137" y="70" width="957" height="670" fill="#fdfbfd" stroke="#e6e0e6" stroke-width="5"/><path d="M137.0,70 V740 M216.7,70 V740 M296.4,70 V740 M376.1,70 V740 M455.8,70 V740 M535.5,70 V740 M615.2,70 V740 M694.9,70 V740 M774.6,70 V740 M854.3,70 V740 M934.0,70 V740 M1013.7,70 V740 M1093.4,70 V740 M137,735.0 H1094 M137,655.6 H1094 M137,576.2 H1094 M137,496.8 H1094 M137,417.4 H1094 M137,338.0 H1094 M137,258.6 H1094 M137,179.2 H1094 M137,99.8 H1094 " stroke="#efe8ea" stroke-width="5" fill="none"/><path d="M710.0,66.0 C733.3,60.7 778.3,66.3 820.0,68.0 C861.7,69.7 931.7,70.7 960.0,76.0 C988.3,81.3 1000.0,94.7 990.0,100.0 C980.0,105.3 926.7,103.7 900.0,108.0 C873.3,112.3 846.7,116.5 830.0,126.0 C813.3,135.5 812.5,150.7 800.0,165.0 C787.5,179.3 768.3,202.5 755.0,212.0 C741.7,221.5 729.2,224.0 720.0,222.0 C710.8,220.0 709.7,206.7 700.0,200.0 C690.3,193.3 672.0,182.0 662.0,182.0 C652.0,182.0 650.3,190.0 640.0,200.0 C629.7,210.0 613.3,226.7 600.0,242.0 C586.7,257.3 573.0,277.0 560.0,292.0 C547.0,307.0 527.7,317.3 522.0,332.0 C516.3,346.7 527.2,360.3 526.0,380.0 C524.8,399.7 521.0,430.0 515.0,450.0 C509.0,470.0 502.5,485.0 490.0,500.0 C477.5,515.0 455.8,525.0 440.0,540.0 C424.2,555.0 400.0,575.8 395.0,590.0 C390.0,604.2 397.5,618.3 410.0,625.0 C422.5,631.7 458.3,625.8 470.0,630.0 C481.7,634.2 490.0,645.8 480.0,650.0 C470.0,654.2 430.0,656.3 410.0,655.0 C390.0,653.7 370.0,634.5 360.0,642.0 C350.0,649.5 353.3,684.0 350.0,700.0 C346.7,716.0 347.5,731.7 340.0,738.0 C332.5,744.3 309.2,746.0 305.0,738.0 C300.8,730.0 312.5,704.7 315.0,690.0 C317.5,675.3 320.8,665.0 320.0,650.0 C319.2,635.0 310.0,615.0 310.0,600.0 C310.0,585.0 320.8,573.3 320.0,560.0 C319.2,546.7 306.7,533.3 305.0,520.0 C303.3,506.7 302.5,483.3 310.0,480.0 C317.5,476.7 335.0,498.3 350.0,500.0 C365.0,501.7 385.0,495.0 400.0,490.0 C415.0,485.0 430.8,478.3 440.0,470.0 C449.2,461.7 451.7,451.7 455.0,440.0 C458.3,428.3 461.7,418.3 460.0,400.0 C458.3,381.7 446.7,349.2 445.0,330.0 C443.3,310.8 444.2,298.3 450.0,285.0 C455.8,271.7 465.0,256.7 480.0,250.0 C495.0,243.3 523.3,250.8 540.0,245.0 C556.7,239.2 570.8,229.2 580.0,215.0 C589.2,200.8 588.3,175.0 595.0,160.0 C601.7,145.0 605.8,135.0 620.0,125.0 C634.2,115.0 665.0,109.8 680.0,100.0 C695.0,90.2 686.7,71.3 710.0,66.0z" fill="#e2d2f2" stroke="none"/><path d="M375.0,85.0 C380.0,82.5 390.0,89.2 400.0,95.0 C410.0,100.8 435.0,113.3 435.0,120.0 C435.0,126.7 409.2,130.0 400.0,135.0 C390.8,140.0 386.7,149.2 380.0,150.0 C373.3,150.8 361.7,146.7 360.0,140.0 C358.3,133.3 367.5,119.2 370.0,110.0 C372.5,100.8 370.0,87.5 375.0,85.0z" fill="#e2d2f2" stroke="none"/><path d="M355.0,175.0 C361.7,168.8 384.2,159.7 400.0,158.0 C415.8,156.3 434.2,161.3 450.0,165.0 C465.8,168.7 488.3,175.0 495.0,180.0 C501.7,185.0 495.8,191.7 490.0,195.0 C484.2,198.3 468.3,196.2 460.0,200.0 C451.7,203.8 450.0,218.0 440.0,218.0 C430.0,218.0 413.3,203.8 400.0,200.0 C386.7,196.2 367.5,199.2 360.0,195.0 C352.5,190.8 348.3,181.2 355.0,175.0z" fill="#e2d2f2" stroke="none"/><path d="M370.0,255.0 C371.8,253.7 384.0,277.5 385.0,290.0 C386.0,302.5 375.2,318.3 376.0,330.0 C376.8,341.7 391.0,353.0 390.0,360.0 C389.0,367.0 375.8,372.0 370.0,372.0 C364.2,372.0 355.0,367.0 355.0,360.0 C355.0,353.0 366.8,340.3 370.0,330.0 C373.2,319.7 374.0,310.5 374.0,298.0 C374.0,285.5 368.2,256.3 370.0,255.0z" fill="#e2d2f2" stroke="none"/><path d="M230.0,425.0 C232.5,423.7 245.8,427.8 250.0,430.0 C254.2,432.2 257.5,436.7 255.0,438.0 C252.5,439.3 239.2,440.2 235.0,438.0 C230.8,435.8 227.5,426.3 230.0,425.0z" fill="#e2d2f2" stroke="none"/><path d="M955.0,280.0 C959.2,278.3 980.0,289.5 1000.0,290.0 C1020.0,290.5 1063.3,281.3 1075.0,283.0 C1086.7,284.7 1080.8,295.8 1070.0,300.0 C1059.2,304.2 1025.8,308.0 1010.0,308.0 C994.2,308.0 984.2,304.7 975.0,300.0 C965.8,295.3 950.8,281.7 955.0,280.0z" fill="#e2d2f2" stroke="none"/><path d="M800.0,345.0 C803.3,342.5 813.3,346.7 830.0,350.0 C846.7,353.3 878.3,361.3 900.0,365.0 C921.7,368.7 936.7,372.0 960.0,372.0 C983.3,372.0 1021.7,367.3 1040.0,365.0 C1058.3,362.7 1064.0,353.8 1070.0,358.0 C1076.0,362.2 1076.0,379.7 1076.0,390.0 C1076.0,400.3 1073.0,418.0 1070.0,420.0 C1067.0,422.0 1061.3,407.8 1058.0,402.0 C1054.7,396.2 1066.3,387.0 1050.0,385.0 C1033.7,383.0 985.0,388.3 960.0,390.0 C935.0,391.7 916.7,397.5 900.0,395.0 C883.3,392.5 875.0,380.0 860.0,375.0 C845.0,370.0 820.0,370.0 810.0,365.0 C800.0,360.0 796.7,347.5 800.0,345.0z" fill="#e2d2f2" stroke="none"/><path d="M700.0,440.0 C703.3,434.2 724.2,434.7 740.0,430.0 C755.8,425.3 785.0,410.3 795.0,412.0 C805.0,413.7 805.8,432.8 800.0,440.0 C794.2,447.2 773.3,450.8 760.0,455.0 C746.7,459.2 730.0,467.5 720.0,465.0 C710.0,462.5 696.7,445.8 700.0,440.0z" fill="#e2d2f2" stroke="none"/><path d="M920.0,535.0 C923.3,528.3 934.2,527.5 945.0,530.0 C955.8,532.5 975.8,541.7 985.0,550.0 C994.2,558.3 1001.7,573.7 1000.0,580.0 C998.3,586.3 985.0,585.5 975.0,588.0 C965.0,590.5 948.3,598.0 940.0,595.0 C931.7,592.0 928.3,580.0 925.0,570.0 C921.7,560.0 916.7,541.7 920.0,535.0z" fill="#e2d2f2" stroke="none"/><path d="M1045.0,575.0 C1045.8,565.0 1059.5,542.5 1065.0,540.0 C1070.5,537.5 1076.3,548.3 1078.0,560.0 C1079.7,571.7 1078.0,603.3 1075.0,610.0 C1072.0,616.7 1065.0,605.8 1060.0,600.0 C1055.0,594.2 1044.2,585.0 1045.0,575.0z" fill="#e2d2f2" stroke="none"/><path d="M583.0,661.0 C583.0,657.0 612.2,662.3 630.0,668.0 C647.8,673.7 672.5,686.0 690.0,695.0 C707.5,704.0 725.5,715.2 735.0,722.0 C744.5,728.8 749.5,733.0 747.0,736.0 C744.5,739.0 731.2,742.3 720.0,740.0 C708.8,737.7 695.0,730.0 680.0,722.0 C665.0,714.0 646.2,702.2 630.0,692.0 C613.8,681.8 583.0,665.0 583.0,661.0z" fill="#e2d2f2" stroke="none"/><path d="M957.0,647.0 C961.2,647.0 967.5,648.8 965.0,656.0 C962.5,663.2 951.5,680.3 942.0,690.0 C932.5,699.7 910.0,708.7 908.0,714.0 C906.0,719.3 922.2,720.2 930.0,722.0 C937.8,723.8 950.5,722.5 955.0,725.0 C959.5,727.5 966.2,734.5 957.0,737.0 C947.8,739.5 919.8,739.8 900.0,740.0 C880.2,740.2 849.3,740.3 838.0,738.0 C826.7,735.7 826.7,731.3 832.0,726.0 C837.3,720.7 857.0,713.3 870.0,706.0 C883.0,698.7 898.3,690.3 910.0,682.0 C921.7,673.7 932.2,661.8 940.0,656.0 C947.8,650.2 952.8,647.0 957.0,647.0z" fill="#e2d2f2" stroke="none"/><path d="M712.0,66.0 C710.3,70.3 708.2,83.5 702.0,92.0 C695.8,100.5 685.0,110.0 675.0,117.0 C665.0,124.0 652.3,126.8 642.0,134.0 C631.7,141.2 619.8,150.7 613.0,160.0 C606.2,169.3 602.5,180.8 601.0,190.0 C599.5,199.2 606.5,205.8 604.0,215.0 C601.5,224.2 594.7,236.2 586.0,245.0 C577.3,253.8 564.0,261.0 552.0,268.0 C540.0,275.0 527.7,284.2 514.0,287.0 C500.3,289.8 480.7,282.8 470.0,285.0 C459.3,287.2 453.0,291.7 450.0,300.0 C447.0,308.3 449.3,323.3 452.0,335.0 C454.7,346.7 460.7,360.7 466.0,370.0 C471.3,379.3 482.0,383.4 483.6,391.0 C485.2,398.6 478.2,407.3 475.5,415.5 C472.8,423.7 470.0,431.9 467.3,440.0 C464.6,448.1 461.2,455.2 459.2,464.0 C457.2,472.8 457.9,484.4 455.2,492.6 C452.5,500.8 449.1,506.9 443.0,513.0 C436.9,519.1 426.8,523.6 418.7,529.0 C410.6,534.4 402.4,539.9 394.3,545.3 C386.2,550.7 377.4,555.4 370.0,561.5 C362.6,567.6 355.1,575.7 349.7,581.8 C344.3,587.9 342.6,593.0 337.6,598.0 C332.7,603.0 322.0,605.9 320.0,612.0 C318.0,618.1 322.5,627.4 325.4,634.5 C328.3,641.6 336.2,646.7 337.6,654.8 C339.0,662.9 336.2,673.7 333.5,683.2 C330.8,692.7 324.7,701.8 321.3,711.6 C317.9,721.4 314.6,736.9 313.2,742.0" fill="none" stroke="#3a80ee" stroke-width="22" stroke-linecap="round"/><circle cx="303" cy="616" r="27" fill="#3a80ee"/><rect x="380" y="36" width="470" height="12" fill="#ccc"/><rect x="400" y="766" width="240" height="10" fill="#ddd"/></svg>
<span class="t" style="left:537.60px;top:333.70px;font-size:10px;line-height:14px;color:#1a1a1a;font-family:'Liberation Sans',sans-serif;letter-spacing:-0.195px;">gradostroitelny_a</span>
<span class="t" style="left:558.75px;top:345.00px;font-size:10px;line-height:14px;color:#1a1a1a;font-family:'Liberation Sans',sans-serif;letter-spacing:-0.069px;">naliz.tif</span>
<div class="r" style="left:685px;top:249px;width:1px;height:371px;background:#f4f4f4;"></div>
<div class="r" style="left:786px;top:254.5px;width:498.5px;height:354px;background:#fff;box-shadow:1px 1.500px 3px rgba(0,0,0,0.45);"></div>
<svg class="r" style="left:780px;top:250px" width="520" height="370" viewBox="0 0 1233 877" preserveAspectRatio="none"><defs><pattern id="hx" width="7.500" height="7.500" patternUnits="userSpaceOnUse" patternTransform="rotate(-52)"><path d="M0,0.500 H7.500" stroke="#8a4ce0" stroke-width="1.300" fill="none"/></pattern><pattern id="hy" width="8" height="8" patternUnits="userSpaceOnUse" patternTransform="rotate(22)"><path d="M0,0.500 H8" stroke="#9359e4" stroke-width="1.150" fill="none"/></pattern><clipPath id="mc"><rect x="137" y="70" width="957" height="670"/></clipPath></defs><path d="M216.8,70 V740 M296.5,70 V740 M376.2,70 V740 M456.0,70 V740 M535.8,70 V740 M615.5,70 V740 M695.2,70 V740 M775.0,70 V740 M854.8,70 V740 M934.5,70 V740 M1014.2,70 V740 M137,735.0 H1094 M137,655.6 H1094 M137,576.2 H1094 M137,496.8 H1094 M137,417.4 H1094 M137,338.0 H1094 M137,258.6 H1094 M137,179.2 H1094 M137,99.8 H1094 " stroke="#a6a6a6" stroke-width="1.100" fill="none" shape-rendering="crispEdges"/><rect x="137" y="70" width="957" height="670" fill="none" stroke="#8a8a8a" stroke-width="1.200"/><g clip-path="url(#mc)"><path d="M800.9,540.0 C798.4,542.4 795.9,544.0 793.3,545.5 C790.7,547.0 787.7,547.4 785.4,549.0 C783.0,550.5 782.4,553.1 779.2,554.9 C776.0,556.6 770.5,559.4 766.1,559.5 C761.8,559.6 757.1,556.9 753.1,555.4 C749.1,554.0 745.8,552.5 742.1,550.7 C738.5,548.8 732.2,546.8 731.2,544.3 C730.1,541.9 733.0,538.3 735.7,536.2 C738.4,534.0 743.6,532.5 747.3,531.3 C751.1,530.2 754.6,529.6 758.0,529.1 C761.4,528.6 763.9,529.4 767.7,528.4 C771.4,527.4 774.8,524.3 780.4,523.1 C786.0,522.0 796.8,520.3 801.4,521.6 C806.0,523.0 808.3,528.0 808.2,531.1 C808.1,534.1 803.4,537.6 800.9,540.0z M831.0,540.0 C826.4,544.8 822.6,548.0 817.9,551.2 C813.1,554.4 807.3,555.8 802.5,559.0 C797.6,562.2 795.5,567.1 788.8,570.4 C782.1,573.6 771.0,578.5 762.3,578.5 C753.6,578.5 744.8,573.3 736.5,570.5 C728.3,567.7 720.9,565.4 713.0,561.8 C705.1,558.2 691.5,554.0 689.3,549.0 C687.1,544.1 694.0,536.5 700.0,532.2 C706.1,527.8 717.8,525.3 725.5,523.0 C733.3,520.7 740.0,519.8 746.6,518.6 C753.2,517.5 757.7,518.4 765.2,516.1 C772.7,513.8 780.3,507.1 791.7,504.8 C803.2,502.6 825.0,499.7 834.0,502.6 C843.0,505.5 846.2,516.0 845.7,522.3 C845.2,528.5 835.6,535.2 831.0,540.0z M854.9,540.0 C848.9,546.8 845.6,551.6 839.5,556.3 C833.4,561.0 825.3,563.6 818.2,568.1 C811.0,572.7 806.5,579.1 796.7,583.3 C786.9,587.5 771.6,593.5 759.4,593.3 C747.1,593.2 735.3,586.2 723.4,582.5 C711.4,578.9 699.5,576.4 687.6,571.5 C675.8,566.6 655.3,560.3 652.4,553.2 C649.5,546.1 660.8,534.9 670.3,528.8 C679.7,522.8 697.8,519.7 709.0,516.7 C720.2,513.6 728.6,512.4 737.6,510.5 C746.6,508.6 752.3,508.8 763.0,505.1 C773.7,501.5 785.4,491.6 801.8,488.5 C818.1,485.4 848.9,482.3 861.1,486.7 C873.4,491.2 876.2,506.5 875.2,515.4 C874.1,524.2 860.8,533.2 854.9,540.0z M885.7,540.0 C878.5,549.4 876.7,556.4 869.0,563.2 C861.2,569.9 849.6,574.4 839.2,580.5 C828.9,586.6 820.8,594.6 806.9,599.8 C793.0,605.0 772.4,612.1 755.7,611.8 C738.9,611.5 723.4,602.6 706.3,598.0 C689.3,593.5 670.7,591.1 653.5,584.5 C636.3,578.0 606.8,568.6 603.3,558.6 C599.8,548.7 618.0,532.9 632.3,524.6 C646.5,516.3 673.1,513.0 688.7,508.9 C704.4,504.8 714.2,503.1 726.1,500.0 C738.0,496.9 745.2,495.7 760.1,490.2 C774.9,484.6 792.6,470.7 815.2,466.8 C837.9,462.8 879.8,459.7 896.0,466.4 C912.1,473.0 913.8,494.4 912.1,506.7 C910.4,519.0 892.8,530.6 885.7,540.0z M914.2,540.0 C906.6,551.8 907.6,561.4 898.6,570.1 C889.6,578.9 873.8,585.2 860.0,592.6 C846.3,600.0 833.9,608.6 816.0,614.5 C798.0,620.3 773.4,628.1 752.5,627.7 C731.6,627.4 712.6,617.5 690.5,612.4 C668.4,607.4 642.2,605.5 619.8,597.4 C597.3,589.4 559.5,576.7 555.9,564.0 C552.3,551.2 578.8,531.0 598.1,520.8 C617.4,510.5 652.2,507.5 671.8,502.4 C691.4,497.4 701.3,494.9 715.5,490.3 C729.7,485.7 738.2,482.4 757.0,475.0 C775.8,467.6 799.8,450.2 828.3,445.6 C856.7,441.1 908.2,439.0 927.6,447.9 C946.9,456.8 946.5,483.8 944.3,499.2 C942.1,514.5 921.8,528.2 914.2,540.0z M943.8,540.0 C936.4,554.3 941.2,566.8 930.8,577.7 C920.5,588.6 899.4,596.8 881.7,605.3 C864.0,613.8 846.7,622.2 824.6,628.5 C802.6,634.7 774.5,643.1 749.4,642.9 C724.4,642.7 701.8,632.6 674.2,627.4 C646.5,622.1 611.5,620.9 583.6,611.3 C555.7,601.6 510.0,585.1 506.9,569.4 C503.8,553.7 540.3,529.2 565.2,517.1 C590.1,504.9 633.0,502.6 656.2,496.5 C679.4,490.3 688.1,486.5 704.3,480.1 C720.6,473.8 730.8,467.7 753.7,458.3 C776.6,449.0 807.6,428.5 841.8,423.8 C875.9,419.0 936.2,418.5 958.5,429.8 C980.7,441.2 977.6,473.6 975.2,491.9 C972.8,510.3 951.2,525.7 943.8,540.0z M278.9,330.0 C279.6,332.8 277.7,337.0 275.7,339.2 C273.6,341.4 269.2,341.7 266.7,343.0 C264.2,344.3 262.8,346.2 260.5,347.0 C258.3,347.8 255.3,348.3 253.2,347.6 C251.0,346.9 249.3,344.3 247.6,342.9 C245.8,341.5 244.0,340.6 242.5,339.1 C241.1,337.5 239.8,335.6 238.7,333.5 C237.6,331.3 236.6,329.0 235.8,325.9 C235.1,322.9 233.2,317.8 234.5,315.1 C235.7,312.4 240.2,309.8 243.4,309.9 C246.5,309.9 250.9,314.0 253.5,315.5 C256.0,317.0 256.8,318.1 258.6,318.9 C260.4,319.6 262.0,319.3 264.1,319.9 C266.2,320.5 268.9,321.0 271.4,322.7 C273.9,324.4 278.2,327.2 278.9,330.0z M295.5,330.0 C296.5,334.7 293.1,341.7 289.7,345.4 C286.3,349.2 279.3,349.9 275.1,352.4 C271.0,354.8 268.7,358.7 264.8,360.1 C260.9,361.5 255.5,362.2 251.8,360.8 C248.0,359.4 245.4,354.3 242.5,351.6 C239.6,349.0 236.9,347.6 234.3,345.0 C231.7,342.4 229.2,339.7 227.0,336.0 C224.8,332.2 222.4,328.1 221.1,322.8 C219.8,317.5 216.8,308.5 219.2,304.0 C221.5,299.5 229.7,295.5 235.3,295.9 C240.8,296.2 248.2,303.5 252.5,306.0 C256.8,308.5 258.1,309.9 261.2,310.9 C264.4,311.8 267.5,310.9 271.3,311.9 C275.0,313.0 279.7,314.2 283.8,317.2 C287.8,320.2 294.5,325.3 295.5,330.0z M323.6,330.0 C324.9,338.1 319.0,349.5 313.4,356.0 C307.8,362.5 296.8,364.2 290.0,368.8 C283.1,373.4 279.2,381.1 272.4,383.6 C265.6,386.1 255.7,386.7 249.3,383.8 C243.0,380.9 238.9,371.0 234.1,366.2 C229.3,361.4 225.2,359.3 220.5,355.0 C215.9,350.7 210.6,346.6 206.4,340.3 C202.1,334.0 197.2,326.5 194.9,317.2 C192.6,307.9 188.2,292.2 192.7,284.7 C197.1,277.2 212.0,271.3 221.7,272.2 C231.4,273.2 243.4,286.1 250.8,290.1 C258.2,294.2 260.3,295.4 265.8,296.7 C271.4,297.9 277.6,295.7 284.2,297.6 C290.8,299.4 298.7,302.2 305.3,307.6 C311.8,313.0 322.2,321.9 323.6,330.0z M343.1,330.0 C344.6,340.5 337.1,354.9 330.2,363.5 C323.3,372.1 310.1,375.1 301.5,381.7 C292.9,388.2 287.6,399.3 278.6,402.5 C269.6,405.8 255.9,405.7 247.5,401.2 C239.2,396.8 234.6,382.4 228.5,375.9 C222.4,369.3 217.5,367.2 211.1,361.9 C204.7,356.5 196.5,352.0 190.3,343.8 C184.0,335.6 176.8,325.0 173.8,312.7 C170.9,300.5 166.3,279.7 172.7,270.2 C179.1,260.7 199.3,254.3 212.2,255.8 C225.0,257.3 240.1,274.4 249.7,279.3 C259.2,284.2 262.0,284.3 269.5,285.4 C277.0,286.4 286.2,283.2 294.9,285.7 C303.5,288.2 313.4,293.0 321.5,300.4 C329.5,307.8 341.7,319.5 343.1,330.0z M359.4,330.0 C360.9,342.7 352.6,359.3 344.7,370.0 C336.9,380.6 322.6,385.4 312.5,393.9 C302.5,402.3 295.5,416.8 284.4,420.6 C273.3,424.3 256.0,422.7 245.9,416.5 C235.9,410.3 231.3,391.6 224.1,383.4 C217.0,375.3 211.3,373.8 203.1,367.7 C194.9,361.7 183.1,356.9 174.9,347.0 C166.7,337.2 157.2,323.5 153.9,308.5 C150.6,293.6 146.7,268.4 155.1,257.4 C163.5,246.3 188.7,240.1 204.3,242.2 C219.9,244.3 237.2,264.8 248.7,270.1 C260.2,275.5 263.7,273.6 273.1,274.3 C282.5,275.0 294.7,271.0 305.2,274.3 C315.6,277.6 326.7,284.8 335.7,294.1 C344.8,303.3 357.9,317.3 359.4,330.0z M982.7,330.0 C982.6,331.8 981.1,334.1 979.1,335.3 C977.0,336.5 972.6,336.2 970.5,337.3 C968.3,338.4 968.5,340.2 966.2,342.0 C964.0,343.7 960.6,347.0 957.0,347.8 C953.4,348.6 948.1,347.8 944.7,346.5 C941.4,345.3 937.8,342.7 937.0,340.4 C936.2,338.1 938.1,334.7 939.8,332.7 C941.6,330.7 946.6,329.9 947.6,328.3 C948.5,326.8 945.8,325.6 945.8,323.5 C945.7,321.5 945.2,317.7 947.1,316.0 C949.0,314.3 953.7,313.7 957.2,313.4 C960.7,313.1 965.0,313.3 968.3,314.1 C971.6,314.9 975.0,316.5 977.0,318.2 C978.9,319.9 979.1,322.5 980.0,324.4 C981.0,326.4 982.9,328.2 982.7,330.0z M1011.3,330.0 C1010.5,334.1 1006.3,338.9 1001.5,341.5 C996.7,344.2 987.2,343.1 982.6,345.7 C978.0,348.3 979.0,352.9 974.1,357.1 C969.2,361.3 961.2,369.2 953.1,370.9 C945.0,372.6 932.8,370.3 925.6,367.3 C918.3,364.3 911.2,358.1 909.7,352.9 C908.1,347.6 912.5,340.3 916.2,335.8 C919.8,331.4 929.8,329.7 931.6,326.2 C933.4,322.7 926.9,319.6 926.8,314.9 C926.7,310.3 926.3,301.9 930.8,298.4 C935.3,294.9 946.0,294.2 953.9,293.7 C961.8,293.2 970.7,293.5 978.1,295.1 C985.5,296.7 993.7,299.7 998.4,303.3 C1003.1,307.0 1004.2,312.7 1006.3,317.1 C1008.5,321.6 1012.1,325.9 1011.3,330.0z M1039.2,330.0 C1037.2,336.3 1029.3,343.3 1021.7,347.2 C1014.1,351.1 1000.3,349.2 993.7,353.4 C987.1,357.6 989.5,365.6 982.1,372.5 C974.7,379.3 961.7,391.9 949.2,394.4 C936.6,396.9 917.7,392.5 906.9,387.4 C896.2,382.4 886.6,372.4 884.5,364.3 C882.3,356.2 889.1,345.5 894.2,338.7 C899.2,332.0 912.9,329.5 915.0,324.0 C917.1,318.5 906.9,313.0 906.9,305.9 C906.9,298.8 907.7,286.3 915.0,281.3 C922.3,276.2 938.8,276.3 950.9,275.6 C962.9,274.9 975.9,275.2 987.4,277.3 C998.9,279.5 1012.3,283.0 1020.0,288.4 C1027.7,293.7 1030.3,302.6 1033.5,309.5 C1036.7,316.5 1041.2,323.7 1039.2,330.0z M1064.0,330.0 C1060.4,338.3 1048.5,346.8 1038.4,351.8 C1028.2,356.8 1011.4,354.1 1003.3,360.1 C995.2,366.0 999.4,377.9 989.8,387.3 C980.1,396.8 962.0,413.8 945.4,416.8 C928.8,419.8 904.0,412.6 890.3,405.5 C876.5,398.4 865.6,384.7 863.1,374.0 C860.5,363.3 868.9,350.0 874.8,341.3 C880.7,332.6 896.4,329.2 898.5,321.8 C900.6,314.5 887.2,306.4 887.6,297.1 C888.0,287.8 890.8,272.1 900.9,266.0 C911.0,259.9 932.5,261.1 948.3,260.3 C964.1,259.6 980.2,259.3 995.6,261.6 C1011.0,263.9 1029.9,267.3 1040.6,274.1 C1051.3,280.9 1055.7,293.0 1059.6,302.3 C1063.6,311.6 1067.5,321.7 1064.0,330.0z M1093.0,330.0 C1087.2,340.7 1070.9,350.8 1058.0,357.3 C1045.0,363.7 1025.1,360.3 1015.5,368.5 C1005.8,376.7 1012.3,393.9 999.8,406.6 C987.4,419.4 962.3,441.6 940.6,445.1 C919.0,448.6 887.2,437.4 870.0,427.5 C852.8,417.6 840.7,399.5 837.4,385.7 C834.2,371.8 843.9,355.7 850.5,344.6 C857.0,333.4 874.5,328.7 876.6,318.9 C878.6,309.1 861.8,297.8 863.0,285.9 C864.2,274.0 870.1,254.8 883.8,247.5 C897.5,240.2 924.9,243.0 945.2,242.1 C965.6,241.1 985.5,239.5 1005.9,241.8 C1026.2,244.0 1052.7,247.1 1067.2,255.6 C1081.6,264.2 1088.5,280.6 1092.8,293.0 C1097.1,305.4 1098.8,319.3 1093.0,330.0z M659.8,400.0 C659.0,402.4 657.9,404.2 656.8,406.2 C655.8,408.3 655.4,411.3 653.4,412.4 C651.4,413.5 647.6,413.0 645.1,413.0 C642.6,413.1 641.1,412.3 638.4,412.9 C635.7,413.4 632.1,416.2 628.7,416.3 C625.4,416.3 620.7,415.1 618.3,413.1 C616.0,411.2 614.4,407.3 614.5,404.5 C614.5,401.7 616.0,398.0 618.5,396.2 C620.9,394.3 626.6,394.2 629.2,393.4 C631.8,392.6 632.6,393.1 634.1,391.4 C635.5,389.7 635.6,385.0 637.9,383.1 C640.1,381.3 644.6,380.1 647.6,380.4 C650.7,380.7 654.0,383.0 656.3,384.9 C658.6,386.9 661.0,389.5 661.6,392.0 C662.1,394.5 660.6,397.6 659.8,400.0z M681.7,400.0 C680.3,404.9 678.1,409.0 675.7,413.2 C673.3,417.5 671.6,423.2 667.3,425.3 C663.1,427.4 655.2,425.7 650.1,425.8 C644.9,425.9 642.3,424.6 636.7,426.0 C631.1,427.5 623.3,434.0 616.3,434.2 C609.2,434.5 599.3,431.7 594.5,427.5 C589.8,423.4 587.3,415.1 587.8,409.3 C588.2,403.4 591.9,396.1 597.0,392.4 C602.0,388.6 613.1,388.5 618.1,386.7 C623.1,384.9 624.4,385.3 627.3,381.6 C630.2,377.9 630.8,368.0 635.5,364.3 C640.2,360.7 649.4,359.0 655.6,359.9 C661.8,360.8 667.9,365.9 672.6,369.8 C677.3,373.8 682.4,378.7 683.9,383.7 C685.4,388.7 683.1,395.1 681.7,400.0z M702.2,400.0 C700.5,407.2 696.9,413.7 693.1,419.7 C689.2,425.7 685.6,433.5 679.1,436.2 C672.6,438.9 661.3,435.7 654.0,435.9 C646.7,436.1 643.5,435.0 635.3,437.5 C627.1,440.0 615.1,450.4 604.7,450.9 C594.3,451.4 579.5,446.9 572.9,440.7 C566.2,434.4 563.9,421.8 565.0,413.3 C566.1,404.7 572.2,394.7 579.5,389.3 C586.7,383.9 601.6,383.8 608.5,380.9 C615.4,378.1 616.5,377.7 620.7,372.1 C624.8,366.4 626.4,352.0 633.3,347.1 C640.3,342.2 653.6,340.8 662.4,342.5 C671.2,344.3 679.2,351.8 686.0,357.4 C692.8,363.1 700.6,369.4 703.4,376.5 C706.1,383.6 704.0,392.8 702.2,400.0z M724.2,400.0 C722.2,409.5 716.7,418.6 711.1,426.4 C705.4,434.1 699.3,443.5 690.3,446.6 C681.4,449.7 667.1,444.8 657.6,445.2 C648.2,445.7 644.6,445.4 633.8,449.3 C622.9,453.2 606.3,467.9 592.4,468.7 C578.6,469.5 558.8,462.7 550.6,454.1 C542.4,445.5 541.0,428.5 543.0,417.2 C545.1,405.9 553.6,393.4 562.9,386.3 C572.1,379.3 590.2,379.1 598.6,374.9 C607.0,370.8 607.9,369.1 613.4,361.5 C618.8,353.9 621.8,335.3 631.1,329.3 C640.4,323.3 657.7,323.0 669.0,325.7 C680.2,328.4 689.7,338.4 698.8,345.6 C707.8,352.8 719.1,360.0 723.3,369.1 C727.5,378.2 726.3,390.5 724.2,400.0z M229.9,590.0 C232.2,592.2 236.8,596.5 236.5,599.1 C236.2,601.7 231.6,604.6 228.2,605.6 C224.8,606.5 219.6,605.1 216.2,604.8 C212.9,604.5 210.5,604.4 208.1,603.8 C205.7,603.2 203.7,602.1 201.6,601.1 C199.6,600.2 197.7,599.3 195.6,598.0 C193.6,596.7 190.2,595.3 189.2,593.4 C188.3,591.5 189.6,588.9 190.2,586.8 C190.8,584.6 191.6,582.8 192.7,580.3 C193.7,577.9 194.0,573.6 196.5,572.0 C198.9,570.4 204.2,570.0 207.4,570.8 C210.6,571.7 213.5,575.1 215.5,576.9 C217.6,578.7 218.5,580.3 219.7,581.7 C220.8,583.2 220.9,584.3 222.6,585.7 C224.3,587.1 227.6,587.8 229.9,590.0z M251.8,590.0 C256.5,594.6 264.9,603.3 264.0,608.5 C263.1,613.7 253.2,619.1 246.3,621.0 C239.3,622.8 229.1,619.9 222.4,619.5 C215.8,619.1 211.1,619.7 206.1,618.7 C201.1,617.7 196.5,615.6 192.3,613.6 C188.1,611.5 184.6,609.2 180.7,606.4 C176.8,603.6 170.6,600.5 168.9,596.7 C167.2,592.9 169.6,588.0 170.5,583.5 C171.3,579.1 172.2,575.1 174.1,570.0 C176.0,564.8 176.7,555.6 181.8,552.5 C186.9,549.3 198.1,549.0 204.7,550.9 C211.2,552.9 216.8,560.4 220.9,564.2 C225.0,568.0 226.6,570.9 229.1,573.7 C231.7,576.5 232.5,578.3 236.3,581.0 C240.1,583.7 247.2,585.4 251.8,590.0z M276.1,590.0 C282.9,597.1 294.6,610.6 292.7,618.3 C290.7,626.0 275.0,633.7 264.3,636.4 C253.7,639.1 238.9,634.8 228.8,634.6 C218.7,634.4 211.7,636.3 203.8,635.2 C196.0,634.0 188.3,630.8 181.9,627.4 C175.5,624.1 170.7,619.6 165.2,615.0 C159.7,610.5 151.4,605.8 148.9,600.0 C146.4,594.2 149.4,587.1 150.2,580.2 C151.0,573.3 151.1,566.7 153.7,558.6 C156.3,550.4 157.8,535.8 165.8,531.1 C173.8,526.4 191.8,526.8 201.8,530.2 C211.9,533.7 220.0,546.0 226.1,551.8 C232.3,557.7 234.5,561.4 238.8,565.4 C243.0,569.4 245.5,571.6 251.8,575.7 C258.0,579.8 269.3,582.9 276.1,590.0z M299.1,590.0 C307.6,599.4 321.1,617.0 317.9,626.9 C314.6,636.9 293.5,646.0 279.6,649.5 C265.7,653.0 247.5,647.8 234.5,648.1 C221.5,648.4 212.1,652.4 201.6,651.1 C191.2,649.9 180.3,645.4 172.0,640.7 C163.7,635.9 157.7,628.8 151.8,622.5 C146.0,616.2 139.5,610.2 137.0,602.7 C134.5,595.2 137.0,586.4 137.0,577.3 C137.0,568.1 134.7,558.6 137.0,547.6 C139.3,536.6 140.4,517.0 150.8,511.1 C161.2,505.2 186.1,507.0 199.4,512.1 C212.6,517.2 222.4,534.1 230.4,541.8 C238.4,549.4 241.2,553.3 247.3,558.1 C253.5,562.9 258.4,565.2 267.0,570.5 C275.6,575.8 290.6,580.6 299.1,590.0z M330.3,590.0 C340.7,602.5 356.1,625.5 351.1,638.3 C346.0,651.1 317.9,662.0 299.8,666.8 C281.7,671.5 259.3,665.6 242.4,666.7 C225.5,667.8 212.6,674.8 198.6,673.5 C184.6,672.1 168.8,665.5 158.5,658.6 C148.2,651.7 140.6,640.9 137.0,632.2 C133.4,623.4 137.0,616.1 137.0,606.3 C137.0,596.4 137.0,585.5 137.0,573.2 C137.0,560.9 137.0,547.2 137.0,532.4 C137.0,517.5 127.1,491.4 137.0,484.1 C146.9,476.7 179.6,480.9 196.1,488.3 C212.6,495.8 225.4,518.8 235.9,528.7 C246.4,538.7 250.5,542.2 259.3,547.9 C268.0,553.6 276.6,556.1 288.5,563.1 C300.3,570.1 319.8,577.5 330.3,590.0z M911.0,650.0 C910.2,652.7 907.0,655.1 905.0,657.4 C902.9,659.7 901.4,662.4 898.5,663.7 C895.5,664.9 890.8,665.2 887.3,665.1 C883.9,665.0 881.6,662.7 877.9,663.0 C874.3,663.3 870.4,666.4 865.5,666.8 C860.6,667.1 852.2,667.2 848.5,665.2 C844.9,663.3 843.3,658.4 843.5,655.2 C843.6,651.9 846.1,647.9 849.3,645.6 C852.5,643.4 858.8,642.4 862.5,641.5 C866.3,640.7 869.4,642.0 871.8,640.6 C874.3,639.1 874.1,634.7 877.3,632.7 C880.4,630.6 886.6,628.0 890.6,628.2 C894.7,628.3 898.7,631.7 901.8,633.8 C905.0,636.0 908.0,638.6 909.5,641.2 C911.0,643.9 911.7,647.3 911.0,650.0z M931.5,650.0 C930.5,654.4 925.3,658.7 921.7,662.4 C918.0,666.0 914.8,670.1 909.7,672.0 C904.7,673.9 897.0,673.7 891.5,673.5 C886.0,673.3 882.7,670.1 876.7,670.8 C870.8,671.5 864.0,677.2 855.8,677.9 C847.7,678.6 833.7,678.5 827.9,675.2 C822.1,672.0 820.4,663.7 821.0,658.4 C821.6,653.0 826.4,646.8 831.6,643.1 C836.7,639.5 846.3,638.0 852.0,636.4 C857.8,634.9 862.2,636.5 866.1,634.0 C870.0,631.4 870.3,624.2 875.4,621.0 C880.6,617.8 890.7,614.2 897.2,614.8 C903.7,615.3 909.4,621.0 914.5,624.5 C919.5,628.0 924.6,631.7 927.4,635.9 C930.3,640.2 932.4,645.6 931.5,650.0z M963.9,650.0 C962.7,657.1 954.0,664.4 947.7,670.1 C941.5,675.8 934.9,681.8 926.5,684.4 C918.1,687.1 906.1,686.2 897.5,685.9 C888.9,685.7 884.3,681.2 874.8,682.8 C865.3,684.4 853.7,694.2 840.6,695.5 C827.4,696.9 804.7,696.2 795.8,690.8 C787.0,685.4 785.8,671.7 787.4,663.1 C788.9,654.6 797.3,645.2 805.3,639.4 C813.4,633.7 827.2,631.3 835.8,628.6 C844.4,625.9 850.8,627.6 856.9,623.3 C863.0,619.0 864.2,607.7 872.6,602.9 C880.9,598.1 896.8,593.4 907.0,594.7 C917.1,596.0 925.2,605.1 933.2,610.6 C941.2,616.1 949.9,621.2 955.0,627.7 C960.2,634.3 965.1,642.9 963.9,650.0z M1003.2,650.0 C1001.8,660.2 988.3,671.2 978.6,679.3 C968.9,687.3 957.5,694.8 945.1,698.2 C932.7,701.6 916.2,699.6 904.1,699.4 C892.0,699.2 886.3,694.1 872.6,697.1 C858.9,700.0 841.0,715.0 822.0,717.0 C802.9,719.0 770.2,717.1 758.1,709.0 C746.0,701.0 746.5,680.8 749.5,668.5 C752.6,656.2 765.1,643.5 776.3,635.3 C787.5,627.1 805.2,623.6 816.7,619.3 C828.2,615.1 836.6,616.3 845.3,610.0 C854.1,603.6 857.1,587.7 869.2,581.4 C881.3,575.1 903.8,569.9 917.9,572.2 C932.0,574.5 942.4,587.6 954.0,595.2 C965.6,602.9 979.3,609.0 987.5,618.1 C995.7,627.2 1004.7,639.8 1003.2,650.0z M545.4,140.0 C544.9,142.4 541.8,144.9 539.7,146.8 C537.7,148.7 535.7,150.4 533.3,151.4 C530.9,152.4 527.9,152.4 525.4,152.8 C522.9,153.2 521.4,152.9 518.1,153.9 C514.8,154.9 510.0,158.7 505.8,158.9 C501.6,159.1 495.0,157.5 493.0,155.1 C491.0,152.7 492.6,147.3 493.8,144.3 C495.1,141.2 498.1,138.7 500.4,136.8 C502.7,134.9 505.5,134.2 507.4,132.9 C509.3,131.7 510.2,131.2 511.8,129.1 C513.5,127.1 514.6,122.5 517.4,120.8 C520.2,119.1 525.6,118.3 528.8,119.2 C532.0,120.0 534.1,123.8 536.5,125.9 C538.9,128.1 541.6,129.7 543.1,132.1 C544.6,134.4 546.0,137.6 545.4,140.0z M572.5,140.0 C571.3,145.0 564.2,149.9 559.8,153.6 C555.4,157.3 550.8,160.2 545.9,162.1 C541.0,164.0 535.5,163.8 530.5,164.9 C525.6,166.0 522.7,166.1 516.1,168.5 C509.5,170.8 499.2,178.6 490.8,178.9 C482.4,179.2 469.3,175.5 465.6,170.4 C461.9,165.3 466.1,154.5 468.8,148.4 C471.5,142.3 477.4,137.5 481.7,133.7 C485.9,129.9 490.6,128.3 494.1,125.5 C497.7,122.8 499.5,121.2 502.9,117.2 C506.3,113.2 509.0,104.3 514.7,101.3 C520.4,98.3 531.0,97.3 537.3,99.2 C543.5,101.0 547.5,108.2 552.4,112.3 C557.4,116.4 563.6,119.3 566.9,123.9 C570.3,128.5 573.7,135.0 572.5,140.0z M595.0,140.0 C593.1,146.9 582.0,154.0 575.3,158.9 C568.5,163.9 561.5,167.1 554.7,169.6 C547.8,172.1 541.0,172.0 534.3,173.8 C527.6,175.7 523.8,177.0 514.5,180.6 C505.1,184.2 490.1,195.1 478.4,195.4 C466.7,195.7 449.0,189.6 444.4,182.2 C439.8,174.9 446.8,159.8 450.7,151.3 C454.6,142.9 462.4,136.8 467.8,131.5 C473.1,126.1 478.3,123.4 482.9,119.3 C487.5,115.2 490.3,112.5 495.3,107.0 C500.2,101.5 504.6,90.0 512.7,86.3 C520.7,82.6 534.8,82.0 543.4,84.7 C552.0,87.3 557.1,96.7 564.3,102.1 C571.5,107.6 581.4,110.9 586.5,117.2 C591.6,123.5 596.8,133.1 595.0,140.0z M621.3,140.0 C618.4,149.3 601.9,158.5 592.3,164.8 C582.8,171.0 572.9,174.3 563.9,177.5 C555.0,180.7 547.1,181.0 538.6,184.0 C530.0,186.9 524.9,190.1 512.5,195.2 C500.0,200.3 479.2,214.6 463.9,214.7 C448.7,214.7 426.2,205.5 420.8,195.5 C415.3,185.4 426.0,165.6 431.2,154.5 C436.4,143.4 445.6,136.0 452.0,128.9 C458.3,121.7 463.6,117.3 469.3,111.7 C475.0,106.0 479.3,101.6 486.2,94.9 C493.0,88.3 499.7,75.8 510.4,72.0 C521.0,68.2 538.8,68.9 550.0,72.0 C561.3,75.1 567.9,84.3 577.9,90.6 C587.8,96.8 602.5,101.0 609.7,109.3 C617.0,117.5 624.2,130.7 621.3,140.0z M1045.9,520.0 C1046.2,522.5 1046.9,525.9 1045.8,527.8 C1044.7,529.7 1041.4,531.2 1039.2,531.3 C1037.0,531.5 1034.2,528.8 1032.5,528.7 C1030.8,528.6 1030.6,529.9 1029.0,530.7 C1027.4,531.6 1025.1,533.6 1022.9,533.8 C1020.6,533.9 1017.7,533.1 1015.7,531.5 C1013.8,530.0 1011.2,527.0 1011.1,524.5 C1011.0,522.0 1013.4,518.3 1015.1,516.5 C1016.9,514.6 1020.3,514.6 1021.8,513.4 C1023.3,512.2 1023.2,510.4 1024.3,509.0 C1025.4,507.7 1027.0,505.9 1028.6,505.5 C1030.2,505.0 1032.1,506.0 1034.0,506.4 C1035.8,506.8 1038.1,506.8 1039.8,507.9 C1041.5,509.0 1043.2,511.0 1044.2,513.0 C1045.2,515.0 1045.7,517.5 1045.9,520.0z M1063.4,520.0 C1063.9,525.1 1065.0,532.3 1062.5,536.1 C1059.9,539.8 1052.8,542.3 1048.2,542.5 C1043.6,542.6 1038.4,537.1 1035.0,537.0 C1031.6,537.0 1031.2,540.3 1027.9,542.3 C1024.6,544.3 1019.5,548.7 1015.0,549.0 C1010.4,549.2 1004.5,547.0 1000.7,543.7 C996.9,540.3 992.3,534.0 992.2,528.9 C992.2,523.8 996.9,516.8 1000.4,513.0 C1003.8,509.2 1010.1,509.0 1013.0,506.3 C1015.9,503.6 1015.6,499.5 1017.9,496.8 C1020.3,494.0 1023.8,490.7 1027.2,490.1 C1030.5,489.4 1034.2,492.0 1037.9,493.0 C1041.6,494.0 1045.9,493.9 1049.5,496.0 C1053.1,498.0 1057.0,501.5 1059.3,505.5 C1061.6,509.5 1062.9,514.9 1063.4,520.0z M1082.5,520.0 C1083.2,527.9 1084.0,539.1 1079.7,544.6 C1075.5,550.2 1064.1,553.2 1057.0,553.3 C1049.9,553.4 1042.4,544.9 1037.4,545.2 C1032.3,545.4 1031.9,551.6 1026.7,555.0 C1021.5,558.4 1013.2,565.4 1006.3,565.6 C999.4,565.8 990.6,561.6 985.1,556.2 C979.6,550.9 973.4,541.1 973.5,533.3 C973.6,525.6 980.5,515.3 985.5,509.5 C990.5,503.7 999.2,502.9 1003.4,498.5 C1007.6,494.1 1007.1,487.2 1010.8,483.1 C1014.6,479.1 1020.5,474.6 1025.7,474.1 C1030.8,473.6 1036.1,478.5 1041.7,480.1 C1047.3,481.7 1053.6,481.0 1059.2,483.9 C1064.9,486.8 1071.7,491.5 1075.5,497.5 C1079.4,503.5 1081.8,512.1 1082.5,520.0z M1093.0,520.0 C1093.0,531.4 1097.2,547.6 1093.0,555.4 C1088.8,563.1 1076.4,566.4 1067.6,566.4 C1058.9,566.4 1047.4,554.4 1040.3,555.3 C1033.2,556.3 1032.6,566.7 1025.1,572.0 C1017.5,577.4 1004.9,587.5 994.9,587.5 C985.0,587.5 972.9,580.2 965.5,572.1 C958.1,564.0 950.2,550.0 950.4,538.8 C950.6,527.6 960.0,513.5 966.7,505.0 C973.3,496.6 984.7,494.7 990.5,488.1 C996.3,481.4 995.9,470.7 1001.5,465.1 C1007.0,459.4 1016.3,454.3 1023.8,454.2 C1031.2,454.1 1038.3,462.1 1046.2,464.5 C1054.2,466.9 1063.8,465.0 1071.6,468.7 C1079.4,472.4 1089.4,478.3 1093.0,486.8 C1096.6,495.4 1093.0,508.6 1093.0,520.0z M755.6,250.0 C754.9,252.8 751.8,255.0 750.3,257.5 C748.8,260.1 748.8,263.5 746.6,265.3 C744.4,267.2 740.3,268.6 737.2,268.4 C734.1,268.3 730.8,265.5 728.2,264.5 C725.6,263.4 723.9,262.9 721.7,262.0 C719.5,261.1 717.6,260.3 715.1,259.0 C712.6,257.7 709.4,256.6 706.6,254.1 C703.9,251.7 698.8,247.5 698.8,244.5 C698.8,241.4 703.1,237.2 706.8,236.0 C710.5,234.7 717.3,236.6 720.9,236.8 C724.5,237.0 726.0,237.3 728.4,237.3 C730.8,237.3 732.6,236.6 735.2,236.6 C737.8,236.5 740.8,236.3 744.0,237.0 C747.2,237.8 752.6,238.7 754.5,240.9 C756.5,243.1 756.3,247.2 755.6,250.0z M773.3,250.0 C772.3,254.8 767.8,258.6 765.5,263.2 C763.2,267.7 763.3,274.1 759.5,277.3 C755.6,280.4 748.0,282.7 742.5,282.1 C737.1,281.6 731.4,276.2 727.0,274.1 C722.6,272.1 720.0,271.4 716.1,270.0 C712.3,268.6 708.6,267.9 704.0,265.8 C699.3,263.7 693.1,261.6 688.4,257.4 C683.7,253.1 675.4,245.6 675.8,240.4 C676.2,235.2 684.3,228.3 690.8,226.2 C697.3,224.2 708.6,227.7 714.7,227.9 C720.8,228.1 723.1,228.0 727.2,227.7 C731.3,227.4 734.9,225.9 739.4,225.8 C744.0,225.8 749.1,225.9 754.4,227.4 C759.7,228.9 768.3,230.9 771.4,234.6 C774.6,238.4 774.3,245.2 773.3,250.0z M799.4,250.0 C798.2,257.7 792.3,264.2 788.9,271.9 C785.6,279.5 785.8,290.6 779.4,295.7 C773.0,300.8 759.5,303.9 750.5,302.6 C741.5,301.3 732.3,291.3 725.2,287.9 C718.1,284.4 714.4,283.7 708.0,281.7 C701.6,279.8 694.6,279.5 686.7,276.2 C678.7,273.0 667.8,269.3 660.3,262.4 C652.7,255.4 640.2,242.7 641.4,234.3 C642.6,225.9 656.8,215.4 667.5,212.1 C678.2,208.9 696.0,214.8 705.7,214.9 C715.3,215.0 718.6,213.7 725.3,212.7 C732.0,211.8 738.5,209.0 746.0,209.0 C753.4,209.1 761.6,210.3 769.9,213.1 C778.2,215.8 791.0,219.4 795.9,225.5 C800.8,231.7 800.6,242.3 799.4,250.0z M816.7,250.0 C815.9,259.7 810.0,268.4 806.2,278.3 C802.5,288.2 802.5,302.9 794.1,309.3 C785.7,315.6 767.5,318.6 755.9,316.3 C744.2,314.1 733.1,300.4 724.2,295.9 C715.4,291.4 711.2,291.3 702.8,289.3 C694.3,287.4 684.2,288.0 673.7,284.1 C663.1,280.2 648.7,275.0 639.4,266.0 C630.2,257.1 615.8,240.6 618.1,230.2 C620.3,219.7 639.2,207.2 652.8,203.3 C666.4,199.3 687.9,206.7 699.8,206.4 C711.6,206.1 715.3,203.0 723.9,201.4 C732.4,199.7 741.5,196.0 750.9,196.3 C760.3,196.7 770.3,199.5 780.3,203.4 C790.4,207.3 805.2,212.1 811.3,219.9 C817.3,227.6 817.6,240.3 816.7,250.0z M473.0,660.0 C471.8,662.8 464.6,665.7 460.8,667.1 C457.0,668.5 452.6,667.7 450.1,668.6 C447.5,669.5 447.5,671.3 445.4,672.7 C443.3,674.2 441.1,676.1 437.6,677.4 C434.1,678.7 428.7,681.0 424.6,680.6 C420.4,680.2 414.4,677.9 412.9,675.2 C411.4,672.4 414.3,667.1 415.3,664.0 C416.4,660.9 418.4,659.0 419.4,656.6 C420.4,654.2 419.7,651.4 421.4,649.6 C423.0,647.8 426.6,646.8 429.4,645.9 C432.1,644.9 434.8,644.4 437.8,643.8 C440.8,643.3 444.2,642.2 447.4,642.5 C450.6,642.8 453.4,644.3 456.9,645.6 C460.3,646.9 465.5,648.0 468.2,650.4 C470.9,652.8 474.2,657.2 473.0,660.0z M497.5,660.0 C494.9,664.9 481.8,669.6 475.0,672.0 C468.3,674.4 461.3,672.8 457.1,674.6 C452.9,676.4 453.2,680.0 449.6,682.8 C446.1,685.6 441.8,689.2 435.7,691.3 C429.6,693.5 420.1,696.8 413.1,695.8 C406.1,694.9 396.3,690.7 393.8,685.8 C391.2,681.0 396.1,672.2 397.7,666.9 C399.3,661.6 401.8,658.3 403.2,654.0 C404.7,649.7 403.4,644.4 406.5,641.3 C409.5,638.2 416.6,636.8 421.5,635.4 C426.5,634.0 431.1,633.7 436.3,632.8 C441.5,631.9 447.0,629.8 452.6,630.1 C458.3,630.3 463.7,632.2 470.0,634.4 C476.3,636.5 485.7,638.5 490.3,642.8 C494.9,647.1 500.0,655.1 497.5,660.0z M532.8,660.0 C528.0,667.9 505.8,674.9 494.9,678.8 C483.9,682.7 473.7,680.0 467.2,683.3 C460.8,686.5 461.9,693.5 456.2,698.4 C450.5,703.2 442.8,709.1 432.9,712.3 C422.9,715.6 407.6,719.7 396.6,717.8 C385.6,715.9 370.8,708.7 366.7,701.0 C362.6,693.2 370.1,679.6 372.1,671.1 C374.1,662.6 376.6,657.0 378.6,650.0 C380.6,642.9 378.7,633.6 384.0,628.7 C389.3,623.8 401.9,622.3 410.3,620.4 C418.7,618.6 425.9,618.9 434.2,617.5 C442.5,616.1 451.0,612.0 460.3,612.0 C469.6,612.0 479.4,614.1 489.9,617.4 C500.4,620.6 516.2,624.3 523.4,631.5 C530.5,638.6 537.5,652.1 532.8,660.0z M213.9,170.0 C213.6,172.4 212.2,175.3 210.1,176.9 C208.0,178.5 203.8,178.9 201.2,179.6 C198.7,180.3 196.9,180.5 194.8,181.3 C192.6,182.0 190.3,184.1 188.1,184.1 C185.9,184.1 183.4,182.4 181.6,181.2 C179.7,180.1 179.0,178.6 177.0,177.3 C174.9,176.0 171.0,175.2 169.2,173.4 C167.5,171.5 166.2,168.5 166.5,166.2 C166.8,163.8 168.8,161.0 171.0,159.4 C173.2,157.8 176.9,156.3 179.9,156.5 C182.8,156.7 186.5,159.6 188.7,160.5 C191.0,161.5 191.0,162.3 193.3,162.1 C195.7,161.8 199.7,159.0 202.8,159.1 C205.9,159.2 210.1,160.7 212.0,162.5 C213.8,164.3 214.2,167.6 213.9,170.0z M249.0,170.0 C248.1,176.0 244.9,183.0 239.9,187.1 C234.9,191.2 225.2,192.7 219.0,194.8 C212.7,196.8 208.1,197.7 202.5,199.5 C196.8,201.4 190.6,206.1 185.1,205.8 C179.6,205.5 173.9,200.4 169.4,197.5 C164.8,194.5 163.3,191.1 157.9,188.0 C152.5,184.8 140.5,183.4 137.0,178.7 C133.5,174.1 136.2,166.0 137.0,160.1 C137.8,154.1 137.3,147.0 141.9,143.1 C146.6,139.3 157.6,136.2 165.1,136.8 C172.5,137.4 181.2,144.7 186.8,146.8 C192.4,148.9 192.6,150.2 198.7,149.4 C204.8,148.5 215.4,141.3 223.3,141.6 C231.1,141.9 241.3,146.2 245.6,151.0 C249.9,155.7 249.9,164.0 249.0,170.0z M266.7,170.0 C265.3,178.0 261.9,186.9 255.8,192.5 C249.6,198.2 237.7,200.8 229.6,203.8 C221.5,206.9 214.9,208.5 207.2,210.8 C199.5,213.0 190.8,218.4 183.5,217.5 C176.2,216.6 169.4,209.3 163.5,205.3 C157.6,201.3 152.3,197.4 147.9,193.5 C143.5,189.6 138.8,188.1 137.0,181.9 C135.2,175.7 137.0,164.4 137.0,156.4 C137.0,148.5 133.5,139.2 137.0,134.3 C140.5,129.4 149.6,126.1 157.7,127.0 C165.9,127.9 178.5,137.3 185.9,139.7 C193.2,142.1 193.8,142.9 202.1,141.4 C210.4,140.0 225.3,130.5 235.6,131.0 C245.9,131.6 258.7,138.2 263.9,144.7 C269.1,151.2 268.1,162.0 266.7,170.0z M290.8,170.0 C289.0,180.7 285.7,192.3 278.1,200.2 C270.5,208.0 255.7,212.6 245.0,217.0 C234.3,221.4 224.5,223.9 213.9,226.6 C203.3,229.4 191.0,235.3 181.3,233.5 C171.6,231.7 163.0,221.2 155.6,215.8 C148.2,210.5 140.1,206.3 137.0,201.4 C133.9,196.5 137.0,194.7 137.0,186.4 C137.0,178.1 137.0,162.0 137.0,151.4 C137.0,140.7 135.2,128.5 137.0,122.2 C138.8,116.0 139.9,112.6 147.8,113.8 C155.7,115.0 174.6,127.0 184.5,129.7 C194.4,132.3 195.6,132.0 207.0,129.7 C218.4,127.5 239.4,115.1 253.0,116.1 C266.7,117.2 282.6,127.1 288.9,136.1 C295.2,145.1 292.6,159.3 290.8,170.0z M900.6,160.0 C900.0,161.7 896.2,162.8 894.9,164.4 C893.7,166.0 894.0,167.4 892.9,169.6 C891.8,171.7 891.1,175.7 888.4,177.3 C885.8,178.9 880.6,179.4 877.0,179.1 C873.4,178.7 869.1,177.0 866.9,175.1 C864.8,173.2 863.9,169.9 864.2,167.7 C864.4,165.4 868.2,163.3 868.3,161.7 C868.3,160.0 865.8,159.7 864.4,157.8 C862.9,155.9 859.2,152.3 859.5,150.1 C859.9,147.9 863.7,145.7 866.6,144.6 C869.6,143.4 873.9,143.0 877.3,143.0 C880.8,143.1 884.7,143.8 887.3,145.0 C890.0,146.2 891.3,148.7 893.2,150.3 C895.0,151.9 897.2,152.9 898.5,154.5 C899.7,156.1 901.1,158.3 900.6,160.0z M927.6,160.0 C925.8,163.9 916.9,166.3 914.1,170.1 C911.3,173.9 913.1,177.5 910.8,182.8 C908.5,188.1 906.8,198.2 900.5,202.0 C894.1,205.8 881.3,206.9 872.8,205.8 C864.3,204.6 854.4,199.9 849.5,195.2 C844.7,190.5 843.2,182.8 843.6,177.6 C844.0,172.4 852.3,167.8 851.9,164.0 C851.6,160.1 844.8,159.1 841.3,154.5 C837.8,149.9 829.6,141.3 830.9,136.2 C832.1,131.1 841.7,126.6 848.9,124.1 C856.0,121.5 865.7,120.7 873.8,120.7 C881.9,120.7 891.1,121.6 897.5,124.2 C903.9,126.7 907.8,132.3 912.3,136.1 C916.8,139.9 922.0,142.8 924.5,146.8 C927.1,150.8 929.3,156.1 927.6,160.0z M946.2,160.0 C943.4,165.5 930.8,168.5 927.2,174.0 C923.6,179.5 927.6,185.2 924.8,193.1 C921.9,201.1 919.3,216.2 910.1,221.7 C900.9,227.2 881.7,228.1 869.6,226.0 C857.5,223.9 844.0,216.2 837.3,209.3 C830.6,202.4 829.0,191.8 829.3,184.6 C829.6,177.3 840.1,171.3 838.9,165.8 C837.8,160.4 827.2,158.5 822.2,151.8 C817.2,145.1 806.7,132.7 809.1,125.6 C811.4,118.6 826.0,113.1 836.4,109.6 C846.7,106.2 859.8,105.1 871.3,104.9 C882.8,104.6 895.9,104.8 905.3,108.1 C914.7,111.4 921.4,119.1 927.9,124.5 C934.4,130.0 941.3,135.0 944.4,140.9 C947.5,146.8 949.1,154.5 946.2,160.0z M968.8,160.0 C964.5,167.6 947.9,171.1 943.6,178.9 C939.3,186.7 946.7,195.4 943.3,206.8 C939.8,218.3 935.7,240.2 922.7,247.6 C909.8,255.1 882.3,255.2 865.5,251.7 C848.8,248.2 831.4,236.3 822.3,226.6 C813.3,216.9 811.5,203.0 811.4,193.2 C811.2,183.5 823.7,175.8 821.3,168.3 C818.9,160.8 803.4,157.5 796.7,148.2 C790.1,138.9 777.4,121.7 781.5,112.3 C785.5,102.9 806.5,96.4 821.0,91.9 C835.4,87.3 852.4,85.8 868.2,84.9 C883.9,84.1 902.3,82.8 915.7,86.8 C929.1,90.9 939.6,101.5 948.6,109.2 C957.5,117.0 966.1,125.0 969.5,133.4 C972.9,141.9 973.1,152.4 968.8,160.0z M628.8,600.0 C627.1,602.7 623.4,605.1 620.4,606.5 C617.4,607.9 613.1,607.3 610.7,608.5 C608.3,609.7 608.4,611.8 606.2,613.5 C603.9,615.3 600.3,618.5 597.2,618.8 C594.1,619.1 590.5,616.8 587.5,615.5 C584.5,614.2 581.8,612.7 579.1,610.8 C576.5,609.0 572.4,606.8 571.4,604.3 C570.4,601.9 571.7,598.4 573.1,595.9 C574.5,593.4 576.9,590.9 579.7,589.4 C582.4,588.0 586.6,587.2 589.7,587.3 C592.8,587.3 595.7,589.9 598.5,589.7 C601.3,589.6 602.5,587.3 606.3,586.2 C610.1,585.1 617.3,582.4 621.3,583.1 C625.3,583.8 629.0,587.6 630.3,590.4 C631.5,593.2 630.4,597.3 628.8,600.0z M658.1,600.0 C654.7,605.5 647.7,610.3 641.8,613.3 C636.0,616.3 627.8,615.7 623.0,618.3 C618.3,620.9 618.0,625.6 613.2,629.0 C608.4,632.4 600.7,638.3 594.3,638.6 C587.9,639.0 581.0,633.9 574.8,631.1 C568.6,628.4 563.0,625.9 557.1,622.3 C551.2,618.6 541.8,614.4 539.4,609.2 C537.0,604.0 539.8,596.5 542.9,591.3 C546.0,586.2 552.1,581.1 558.2,578.3 C564.3,575.5 573.0,574.5 579.5,574.6 C585.9,574.7 591.3,579.8 596.9,579.1 C602.6,578.4 605.4,572.9 613.4,570.5 C621.4,568.0 636.9,562.7 645.0,564.3 C653.2,565.9 660.1,574.2 662.3,580.2 C664.5,586.1 661.5,594.5 658.1,600.0z M676.6,600.0 C672.1,607.4 663.8,613.7 656.5,618.0 C649.2,622.3 639.0,622.1 632.6,625.9 C626.2,629.6 625.0,636.0 618.3,640.3 C611.6,644.6 601.0,651.5 592.4,651.6 C583.8,651.7 575.3,644.5 566.9,640.9 C558.6,637.3 550.6,634.8 542.0,630.1 C533.5,625.4 519.3,619.8 515.8,612.8 C512.3,605.8 516.4,595.0 521.1,588.0 C525.8,581.1 535.5,574.6 544.2,571.0 C552.9,567.5 564.6,566.7 573.2,566.9 C581.8,567.0 588.2,573.2 595.8,571.8 C603.5,570.4 607.8,562.1 618.8,558.6 C629.9,555.1 651.3,548.3 662.1,550.8 C672.8,553.2 681.1,565.2 683.5,573.4 C685.9,581.6 681.1,592.6 676.6,600.0z M1056.4,150.0 C1057.6,152.4 1060.3,156.4 1059.7,158.8 C1059.1,161.1 1055.4,163.7 1052.8,164.2 C1050.1,164.7 1046.1,162.4 1043.8,161.7 C1041.5,161.0 1040.5,160.4 1038.9,160.0 C1037.4,159.7 1036.4,159.7 1034.5,159.5 C1032.7,159.3 1030.3,159.7 1027.9,158.8 C1025.5,157.9 1021.4,156.3 1020.4,154.2 C1019.4,152.1 1020.8,148.3 1022.0,146.2 C1023.3,144.0 1026.3,142.9 1028.1,141.3 C1029.8,139.7 1030.6,137.6 1032.3,136.7 C1034.0,135.7 1036.6,135.3 1038.5,135.6 C1040.4,135.8 1042.1,137.4 1043.8,138.2 C1045.5,139.0 1047.3,139.3 1048.7,140.4 C1050.0,141.5 1050.9,143.0 1052.2,144.6 C1053.5,146.2 1055.1,147.6 1056.4,150.0z M1079.5,150.0 C1082.5,155.6 1088.3,165.3 1086.6,170.8 C1085.0,176.2 1075.8,181.8 1069.4,182.7 C1063.1,183.6 1053.9,177.9 1048.6,176.4 C1043.3,174.9 1041.2,174.1 1037.5,173.5 C1033.9,173.0 1031.1,173.5 1026.7,173.1 C1022.3,172.7 1016.5,173.2 1011.2,171.0 C1005.9,168.7 996.9,164.5 994.8,159.6 C992.8,154.7 996.1,146.3 999.0,141.3 C1001.9,136.3 1008.3,133.6 1012.0,129.7 C1015.8,125.8 1017.4,120.2 1021.4,117.8 C1025.5,115.5 1031.8,114.7 1036.4,115.6 C1040.9,116.5 1044.9,120.9 1048.8,123.0 C1052.6,125.1 1056.3,125.9 1059.6,128.3 C1062.8,130.7 1065.2,133.7 1068.5,137.3 C1071.8,140.9 1076.4,144.4 1079.5,150.0z M1093.0,150.0 C1094.6,158.5 1094.5,173.6 1093.0,181.7 C1091.5,189.8 1090.5,197.4 1083.7,198.5 C1077.0,199.7 1060.4,190.7 1052.5,188.6 C1044.6,186.5 1041.8,186.4 1036.2,186.0 C1030.6,185.6 1025.7,187.1 1019.0,186.5 C1012.2,185.8 1003.5,185.8 995.8,182.1 C988.1,178.4 975.7,171.8 972.9,164.3 C970.2,156.8 975.3,144.7 979.3,137.1 C983.4,129.6 992.0,125.2 997.3,119.0 C1002.6,112.8 1004.8,103.4 1011.0,99.8 C1017.2,96.2 1027.5,95.5 1034.5,97.3 C1041.4,99.0 1047.2,106.8 1052.9,110.3 C1058.6,113.8 1063.5,114.8 1068.6,118.2 C1073.7,121.6 1079.5,125.3 1083.5,130.6 C1087.6,135.9 1091.4,141.5 1093.0,150.0z M349.3,460.0 C350.6,462.6 352.7,467.3 351.6,469.6 C350.5,472.0 345.6,473.8 342.7,474.1 C339.7,474.4 336.0,472.0 333.7,471.5 C331.4,471.0 330.5,471.0 328.9,470.9 C327.2,470.8 325.9,471.1 323.6,471.0 C321.4,471.0 318.0,471.7 315.4,470.6 C312.8,469.6 308.7,467.1 308.0,464.7 C307.4,462.2 309.9,458.4 311.4,456.0 C313.0,453.7 315.6,452.5 317.3,450.8 C319.1,449.1 319.9,446.6 321.7,445.6 C323.6,444.7 326.3,444.8 328.4,445.0 C330.5,445.3 332.3,446.4 334.2,447.1 C336.1,447.8 338.2,448.0 339.8,449.2 C341.4,450.3 342.3,452.0 343.9,453.8 C345.5,455.6 348.0,457.4 349.3,460.0z M368.0,460.0 C370.5,465.1 374.1,474.2 371.7,478.6 C369.3,482.9 359.5,485.9 353.7,486.3 C347.9,486.7 341.2,482.1 336.9,481.2 C332.6,480.4 331.0,481.0 327.8,481.2 C324.5,481.3 321.6,482.1 317.3,482.0 C313.0,481.9 306.5,482.7 301.8,480.5 C297.0,478.3 289.8,473.4 288.8,468.8 C287.7,464.1 292.4,457.0 295.2,452.6 C298.0,448.2 302.5,445.7 305.5,442.2 C308.6,438.7 310.1,433.5 313.6,431.7 C317.2,429.8 322.9,430.3 327.0,431.0 C331.0,431.8 334.2,434.6 337.8,436.1 C341.3,437.5 345.0,437.9 348.1,439.9 C351.3,441.9 353.5,444.7 356.8,448.1 C360.1,451.4 365.5,454.9 368.0,460.0z M389.5,460.0 C393.2,467.8 397.8,481.9 393.8,488.4 C389.7,494.9 374.1,498.6 365.2,499.1 C356.3,499.6 346.6,492.4 340.2,491.4 C333.7,490.3 331.6,492.4 326.5,493.0 C321.5,493.6 316.5,495.1 309.9,494.9 C303.3,494.6 293.7,495.0 286.8,491.4 C279.9,487.8 269.9,480.2 268.5,473.1 C267.0,466.0 274.1,455.7 278.0,449.0 C282.0,442.2 287.7,438.0 292.1,432.5 C296.5,426.9 298.7,418.3 304.3,415.5 C309.8,412.6 319.1,414.1 325.3,415.6 C331.5,417.2 336.2,422.4 341.4,424.8 C346.7,427.2 351.9,427.3 357.0,430.1 C362.0,432.8 366.1,436.5 371.6,441.5 C377.0,446.5 385.8,452.2 389.5,460.0z M137.0,123.9 C143.7,122.9 163.7,118.3 177.0,117.6 C190.3,116.8 203.7,117.8 217.0,119.4 C230.3,121.1 243.7,125.8 257.0,127.7 C270.3,129.5 283.7,132.0 297.0,130.5 C310.3,129.1 323.7,124.5 337.0,119.0 C350.3,113.4 363.7,103.9 377.0,97.3 C390.3,90.7 403.7,83.0 417.0,79.4 C430.3,75.7 443.7,74.9 457.0,75.4 C470.3,75.8 483.7,80.0 497.0,81.9 C510.3,83.8 523.7,86.7 537.0,86.9 C550.3,87.0 563.7,84.7 577.0,82.7 C590.3,80.7 603.7,76.0 617.0,74.9 C630.3,73.7 643.7,73.1 657.0,75.9 C670.3,78.6 683.7,85.1 697.0,91.4 C710.3,97.7 723.7,107.5 737.0,113.6 C750.3,119.7 763.7,125.6 777.0,128.0 C790.3,130.3 803.7,129.2 817.0,127.9 C830.3,126.6 843.7,122.0 857.0,120.2 C870.3,118.5 883.7,116.8 897.0,117.4 C910.3,117.9 923.7,121.3 937.0,123.4 C950.3,125.4 963.7,129.5 977.0,129.7 C990.3,129.9 1003.7,128.4 1017.0,124.4 C1030.3,120.4 1050.3,108.8 1057.0,105.6 M215.3,72.0 C217.9,78.7 224.3,98.7 230.8,112.0 C237.3,125.3 248.2,138.7 254.2,152.0 C260.2,165.3 265.0,178.7 266.8,192.0 C268.7,205.3 265.8,218.7 265.2,232.0 C264.7,245.3 262.3,258.7 263.6,272.0 C264.9,285.3 269.4,298.7 273.2,312.0 C276.9,325.3 284.2,338.7 286.1,352.0 C288.0,365.3 288.2,378.7 284.7,392.0 C281.1,405.3 271.9,418.7 264.7,432.0 C257.6,445.3 247.1,458.7 241.9,472.0 C236.6,485.3 233.9,498.7 233.1,512.0 C232.3,525.3 236.3,538.7 237.1,552.0 C237.9,565.3 239.4,578.7 237.8,592.0 C236.3,605.3 230.9,618.7 227.6,632.0 C224.3,645.3 218.4,658.7 218.0,672.0 C217.6,685.3 224.1,705.3 225.3,712.0 M137.0,229.1 C143.7,230.3 163.7,235.7 177.0,236.7 C190.3,237.7 203.7,235.2 217.0,235.0 C230.3,234.8 243.7,234.1 257.0,235.7 C270.3,237.2 283.7,241.3 297.0,244.4 C310.3,247.4 323.7,252.7 337.0,254.0 C350.3,255.2 363.7,255.2 377.0,251.7 C390.3,248.3 403.7,240.6 417.0,233.2 C430.3,225.9 443.7,215.1 457.0,207.9 C470.3,200.7 483.7,193.9 497.0,190.3 C510.3,186.7 523.7,186.7 537.0,186.4 C550.3,186.2 563.7,188.9 577.0,188.9 C590.3,188.9 603.7,188.4 617.0,186.4 C630.3,184.3 643.7,179.4 657.0,176.6 C670.3,173.8 683.7,169.5 697.0,169.5 C710.3,169.6 723.7,171.9 737.0,176.8 C750.3,181.7 763.7,191.1 777.0,198.9 C790.3,206.7 803.7,217.1 817.0,223.5 C830.3,229.8 843.7,234.7 857.0,237.1 C870.3,239.5 883.7,238.0 897.0,237.8 C910.3,237.5 923.7,235.0 937.0,235.4 C950.3,235.8 963.7,237.6 977.0,240.0 C990.3,242.4 1003.7,247.7 1017.0,250.0 C1030.3,252.3 1050.3,252.9 1057.0,253.5 M410.2,72.0 C410.7,78.7 414.4,98.7 413.6,112.0 C412.8,125.3 410.2,138.7 405.4,152.0 C400.5,165.3 390.7,178.7 384.4,192.0 C378.0,205.3 369.9,218.7 367.5,232.0 C365.0,245.3 366.6,258.7 369.6,272.0 C372.6,285.3 380.9,298.7 385.4,312.0 C389.9,325.3 395.0,338.7 396.8,352.0 C398.5,365.3 396.3,378.7 395.9,392.0 C395.5,405.3 392.6,418.7 394.2,432.0 C395.8,445.3 400.2,458.7 405.6,472.0 C411.0,485.3 421.1,498.7 426.7,512.0 C432.2,525.3 438.0,538.7 438.8,552.0 C439.5,565.3 435.2,578.7 430.9,592.0 C426.7,605.3 417.8,618.7 413.3,632.0 C408.7,645.3 404.9,658.7 403.7,672.0 C402.4,685.3 405.4,705.3 405.7,712.0 M137.0,313.3 C143.7,316.1 163.7,326.5 177.0,330.1 C190.3,333.8 203.7,335.2 217.0,335.2 C230.3,335.3 243.7,331.8 257.0,330.7 C270.3,329.5 283.7,327.2 297.0,328.1 C310.3,328.9 323.7,332.2 337.0,335.6 C350.3,339.0 363.7,345.5 377.0,348.5 C390.3,351.5 403.7,354.5 417.0,353.7 C430.3,352.9 443.7,348.5 457.0,343.7 C470.3,338.8 483.7,330.1 497.0,324.6 C510.3,319.1 523.7,313.0 537.0,310.4 C550.3,307.8 563.7,308.2 577.0,308.9 C590.3,309.5 603.7,313.4 617.0,314.3 C630.3,315.3 643.7,316.2 657.0,314.6 C670.3,313.0 683.7,308.3 697.0,304.7 C710.3,301.1 723.7,295.0 737.0,292.8 C750.3,290.7 763.7,289.8 777.0,291.9 C790.3,294.1 803.7,300.3 817.0,305.9 C830.3,311.4 843.7,320.1 857.0,325.1 C870.3,330.1 883.7,334.4 897.0,335.9 C910.3,337.5 923.7,335.5 937.0,334.3 C950.3,333.2 963.7,329.5 977.0,329.1 C990.3,328.6 1003.7,329.2 1017.0,331.6 C1030.3,333.9 1050.3,341.1 1057.0,343.1 M570.6,72.0 C570.5,78.7 570.9,98.7 570.3,112.0 C569.7,125.3 570.7,138.7 567.1,152.0 C563.5,165.3 556.3,178.7 548.7,192.0 C541.2,205.3 528.9,218.7 521.9,232.0 C514.8,245.3 508.0,258.7 506.4,272.0 C504.8,285.3 508.7,298.7 512.3,312.0 C516.0,325.3 524.2,338.7 528.4,352.0 C532.6,365.3 535.9,378.7 537.5,392.0 C539.1,405.3 536.9,418.7 538.1,432.0 C539.2,445.3 539.9,458.7 544.5,472.0 C549.0,485.3 557.9,498.7 565.5,512.0 C573.2,525.3 584.7,538.7 590.3,552.0 C595.9,565.3 599.7,578.7 599.2,592.0 C598.8,605.3 592.3,618.7 587.4,632.0 C582.5,645.3 574.1,658.7 569.8,672.0 C565.6,685.3 563.2,705.3 561.9,712.0 M137.0,455.5 C143.7,456.0 163.7,458.6 177.0,458.7 C190.3,458.8 203.7,456.1 217.0,456.1 C230.3,456.1 243.7,456.7 257.0,458.7 C270.3,460.8 283.7,465.7 297.0,468.3 C310.3,470.9 323.7,474.8 337.0,474.4 C350.3,473.9 363.7,471.0 377.0,465.8 C390.3,460.5 403.7,450.7 417.0,442.8 C430.3,434.9 443.7,424.6 457.0,418.3 C470.3,412.1 483.7,407.5 497.0,405.3 C510.3,403.2 523.7,404.8 537.0,405.2 C550.3,405.6 563.7,408.0 577.0,407.6 C590.3,407.2 603.7,405.3 617.0,402.9 C630.3,400.6 643.7,395.4 657.0,393.4 C670.3,391.4 683.7,389.1 697.0,391.0 C710.3,392.9 723.7,398.1 737.0,404.6 C750.3,411.0 763.7,421.8 777.0,429.7 C790.3,437.6 803.7,446.8 817.0,451.9 C830.3,457.1 843.7,459.5 857.0,460.6 C870.3,461.7 883.7,459.1 897.0,458.5 C910.3,457.9 923.7,456.3 937.0,457.1 C950.3,458.0 963.7,461.1 977.0,463.6 C990.3,466.1 1003.7,471.0 1017.0,472.1 C1030.3,473.2 1050.3,470.4 1057.0,470.1 M723.2,72.0 C722.4,78.7 722.0,98.7 718.6,112.0 C715.3,125.3 710.6,138.7 703.3,152.0 C695.9,165.3 683.6,178.7 674.7,192.0 C665.8,205.3 654.5,218.7 649.7,232.0 C644.9,245.3 644.0,258.7 646.0,272.0 C648.0,285.3 656.3,298.7 661.8,312.0 C667.4,325.3 675.1,338.7 679.3,352.0 C683.5,365.3 684.9,378.7 687.3,392.0 C689.7,405.3 689.6,418.7 693.7,432.0 C697.9,445.3 704.4,458.7 712.2,472.0 C720.0,485.3 732.5,498.7 740.4,512.0 C748.3,525.3 757.0,538.7 759.4,552.0 C761.9,565.3 759.3,578.7 755.2,592.0 C751.0,605.3 741.1,618.7 734.8,632.0 C728.4,645.3 721.3,658.7 717.1,672.0 C712.9,685.3 710.9,705.3 709.6,712.0 M137.0,553.6 C143.7,554.3 163.7,558.2 177.0,557.6 C190.3,556.9 203.7,554.1 217.0,549.8 C230.3,545.5 243.7,537.3 257.0,531.6 C270.3,525.9 283.7,518.7 297.0,515.7 C310.3,512.7 323.7,512.2 337.0,513.5 C350.3,514.8 363.7,520.2 377.0,523.7 C390.3,527.2 403.7,532.3 417.0,534.3 C430.3,536.2 443.7,536.1 457.0,535.2 C470.3,534.3 483.7,530.3 497.0,529.1 C510.3,527.8 523.7,526.1 537.0,527.8 C550.3,529.5 563.7,534.2 577.0,539.3 C590.3,544.3 603.7,553.0 617.0,558.2 C630.3,563.5 643.7,569.1 657.0,570.9 C670.3,572.6 683.7,571.0 697.0,568.6 C710.3,566.3 723.7,560.1 737.0,556.7 C750.3,553.3 763.7,549.2 777.0,548.1 C790.3,546.9 803.7,548.5 817.0,549.8 C830.3,551.1 843.7,555.1 857.0,555.8 C870.3,556.4 883.7,556.5 897.0,553.7 C910.3,550.9 923.7,544.6 937.0,539.0 C950.3,533.5 963.7,525.1 977.0,520.5 C990.3,516.0 1003.7,512.4 1017.0,512.0 C1030.3,511.6 1050.3,517.2 1057.0,518.2 M865.4,72.0 C865.6,78.7 867.7,98.7 866.6,112.0 C865.6,125.3 863.9,138.7 858.9,152.0 C853.9,165.3 844.2,178.7 836.7,192.0 C829.2,205.3 818.6,218.7 814.1,232.0 C809.5,245.3 807.9,258.7 809.3,272.0 C810.8,285.3 818.2,298.7 823.0,312.0 C827.8,325.3 834.9,338.7 838.1,352.0 C841.3,365.3 841.5,378.7 842.2,392.0 C842.9,405.3 840.4,418.7 842.2,432.0 C844.0,445.3 847.5,458.7 853.2,472.0 C858.9,485.3 869.5,498.7 876.4,512.0 C883.3,525.3 892.0,538.7 894.7,552.0 C897.5,565.3 896.0,578.7 892.8,592.0 C889.5,605.3 880.6,618.7 875.3,632.0 C869.9,645.3 863.6,658.7 860.7,672.0 C857.8,685.3 858.3,705.3 857.8,712.0 M137.0,665.6 C143.7,665.9 163.7,665.6 177.0,667.0 C190.3,668.4 203.7,672.7 217.0,674.0 C230.3,675.2 243.7,676.5 257.0,674.3 C270.3,672.1 283.7,666.5 297.0,660.7 C310.3,654.9 323.7,645.4 337.0,639.3 C350.3,633.3 363.7,626.9 377.0,624.4 C390.3,621.9 403.7,622.7 417.0,624.2 C430.3,625.7 443.7,630.8 457.0,633.3 C470.3,635.8 483.7,638.8 497.0,639.1 C510.3,639.5 523.7,637.1 537.0,635.5 C550.3,633.9 563.7,629.8 577.0,629.3 C590.3,628.9 603.7,629.4 617.0,632.8 C630.3,636.2 643.7,643.5 657.0,649.8 C670.3,656.1 683.7,665.5 697.0,670.8 C710.3,676.1 723.7,680.5 737.0,681.7 C750.3,682.9 763.7,680.2 777.0,677.9 C790.3,675.7 803.7,670.4 817.0,668.3 C830.3,666.1 843.7,664.5 857.0,664.8 C870.3,665.1 883.7,668.5 897.0,670.1 C910.3,671.7 923.7,675.0 937.0,674.5 C950.3,673.9 963.7,671.4 977.0,666.9 C990.3,662.3 1003.7,653.8 1017.0,647.3 C1030.3,640.8 1050.3,631.3 1057.0,628.1 M1010.6,72.0 C1009.0,78.7 1006.4,98.7 1001.0,112.0 C995.6,125.3 985.5,138.7 978.2,152.0 C970.9,165.3 961.0,178.7 957.2,192.0 C953.4,205.3 952.9,218.7 955.4,232.0 C958.0,245.3 966.6,258.7 972.4,272.0 C978.3,285.3 986.4,298.7 990.5,312.0 C994.6,325.3 995.7,338.7 997.2,352.0 C998.6,365.3 996.9,378.7 999.3,392.0 C1001.7,405.3 1005.7,418.7 1011.5,432.0 C1017.4,445.3 1027.9,458.7 1034.3,472.0 C1040.8,485.3 1048.6,498.7 1050.3,512.0 C1052.1,525.3 1049.3,538.7 1044.9,552.0 C1040.5,565.3 1030.4,578.7 1024.0,592.0 C1017.6,605.3 1010.4,618.7 1006.7,632.0 C1002.9,645.3 1003.0,658.7 1001.7,672.0 C1000.3,685.3 999.1,705.3 998.6,712.0" fill="none" stroke="#94604f" stroke-width="0.950" opacity="0.800"/><path d="M710.0,66.0 C733.3,60.7 778.3,66.3 820.0,68.0 C861.7,69.7 931.7,70.7 960.0,76.0 C988.3,81.3 1000.0,94.7 990.0,100.0 C980.0,105.3 926.7,103.7 900.0,108.0 C873.3,112.3 846.7,116.5 830.0,126.0 C813.3,135.5 812.5,150.7 800.0,165.0 C787.5,179.3 768.3,202.5 755.0,212.0 C741.7,221.5 729.2,224.0 720.0,222.0 C710.8,220.0 709.7,206.7 700.0,200.0 C690.3,193.3 672.0,182.0 662.0,182.0 C652.0,182.0 650.3,190.0 640.0,200.0 C629.7,210.0 613.3,226.7 600.0,242.0 C586.7,257.3 573.0,277.0 560.0,292.0 C547.0,307.0 527.7,317.3 522.0,332.0 C516.3,346.7 527.2,360.3 526.0,380.0 C524.8,399.7 521.0,430.0 515.0,450.0 C509.0,470.0 502.5,485.0 490.0,500.0 C477.5,515.0 455.8,525.0 440.0,540.0 C424.2,555.0 400.0,575.8 395.0,590.0 C390.0,604.2 397.5,618.3 410.0,625.0 C422.5,631.7 458.3,625.8 470.0,630.0 C481.7,634.2 490.0,645.8 480.0,650.0 C470.0,654.2 430.0,656.3 410.0,655.0 C390.0,653.7 370.0,634.5 360.0,642.0 C350.0,649.5 353.3,684.0 350.0,700.0 C346.7,716.0 347.5,731.7 340.0,738.0 C332.5,744.3 309.2,746.0 305.0,738.0 C300.8,730.0 312.5,704.7 315.0,690.0 C317.5,675.3 320.8,665.0 320.0,650.0 C319.2,635.0 310.0,615.0 310.0,600.0 C310.0,585.0 320.8,573.3 320.0,560.0 C319.2,546.7 306.7,533.3 305.0,520.0 C303.3,506.7 302.5,483.3 310.0,480.0 C317.5,476.7 335.0,498.3 350.0,500.0 C365.0,501.7 385.0,495.0 400.0,490.0 C415.0,485.0 430.8,478.3 440.0,470.0 C449.2,461.7 451.7,451.7 455.0,440.0 C458.3,428.3 461.7,418.3 460.0,400.0 C458.3,381.7 446.7,349.2 445.0,330.0 C443.3,310.8 444.2,298.3 450.0,285.0 C455.8,271.7 465.0,256.7 480.0,250.0 C495.0,243.3 523.3,250.8 540.0,245.0 C556.7,239.2 570.8,229.2 580.0,215.0 C589.2,200.8 588.3,175.0 595.0,160.0 C601.7,145.0 605.8,135.0 620.0,125.0 C634.2,115.0 665.0,109.8 680.0,100.0 C695.0,90.2 686.7,71.3 710.0,66.0z M375.0,85.0 C380.0,82.5 390.0,89.2 400.0,95.0 C410.0,100.8 435.0,113.3 435.0,120.0 C435.0,126.7 409.2,130.0 400.0,135.0 C390.8,140.0 386.7,149.2 380.0,150.0 C373.3,150.8 361.7,146.7 360.0,140.0 C358.3,133.3 367.5,119.2 370.0,110.0 C372.5,100.8 370.0,87.5 375.0,85.0z M355.0,175.0 C361.7,168.8 384.2,159.7 400.0,158.0 C415.8,156.3 434.2,161.3 450.0,165.0 C465.8,168.7 488.3,175.0 495.0,180.0 C501.7,185.0 495.8,191.7 490.0,195.0 C484.2,198.3 468.3,196.2 460.0,200.0 C451.7,203.8 450.0,218.0 440.0,218.0 C430.0,218.0 413.3,203.8 400.0,200.0 C386.7,196.2 367.5,199.2 360.0,195.0 C352.5,190.8 348.3,181.2 355.0,175.0z M370.0,255.0 C371.8,253.7 384.0,277.5 385.0,290.0 C386.0,302.5 375.2,318.3 376.0,330.0 C376.8,341.7 391.0,353.0 390.0,360.0 C389.0,367.0 375.8,372.0 370.0,372.0 C364.2,372.0 355.0,367.0 355.0,360.0 C355.0,353.0 366.8,340.3 370.0,330.0 C373.2,319.7 374.0,310.5 374.0,298.0 C374.0,285.5 368.2,256.3 370.0,255.0z M230.0,425.0 C232.5,423.7 245.8,427.8 250.0,430.0 C254.2,432.2 257.5,436.7 255.0,438.0 C252.5,439.3 239.2,440.2 235.0,438.0 C230.8,435.8 227.5,426.3 230.0,425.0z M955.0,280.0 C959.2,278.3 980.0,289.5 1000.0,290.0 C1020.0,290.5 1063.3,281.3 1075.0,283.0 C1086.7,284.7 1080.8,295.8 1070.0,300.0 C1059.2,304.2 1025.8,308.0 1010.0,308.0 C994.2,308.0 984.2,304.7 975.0,300.0 C965.8,295.3 950.8,281.7 955.0,280.0z M800.0,345.0 C803.3,342.5 813.3,346.7 830.0,350.0 C846.7,353.3 878.3,361.3 900.0,365.0 C921.7,368.7 936.7,372.0 960.0,372.0 C983.3,372.0 1021.7,367.3 1040.0,365.0 C1058.3,362.7 1064.0,353.8 1070.0,358.0 C1076.0,362.2 1076.0,379.7 1076.0,390.0 C1076.0,400.3 1073.0,418.0 1070.0,420.0 C1067.0,422.0 1061.3,407.8 1058.0,402.0 C1054.7,396.2 1066.3,387.0 1050.0,385.0 C1033.7,383.0 985.0,388.3 960.0,390.0 C935.0,391.7 916.7,397.5 900.0,395.0 C883.3,392.5 875.0,380.0 860.0,375.0 C845.0,370.0 820.0,370.0 810.0,365.0 C800.0,360.0 796.7,347.5 800.0,345.0z M700.0,440.0 C703.3,434.2 724.2,434.7 740.0,430.0 C755.8,425.3 785.0,410.3 795.0,412.0 C805.0,413.7 805.8,432.8 800.0,440.0 C794.2,447.2 773.3,450.8 760.0,455.0 C746.7,459.2 730.0,467.5 720.0,465.0 C710.0,462.5 696.7,445.8 700.0,440.0z M920.0,535.0 C923.3,528.3 934.2,527.5 945.0,530.0 C955.8,532.5 975.8,541.7 985.0,550.0 C994.2,558.3 1001.7,573.7 1000.0,580.0 C998.3,586.3 985.0,585.5 975.0,588.0 C965.0,590.5 948.3,598.0 940.0,595.0 C931.7,592.0 928.3,580.0 925.0,570.0 C921.7,560.0 916.7,541.7 920.0,535.0z M1045.0,575.0 C1045.8,565.0 1059.5,542.5 1065.0,540.0 C1070.5,537.5 1076.3,548.3 1078.0,560.0 C1079.7,571.7 1078.0,603.3 1075.0,610.0 C1072.0,616.7 1065.0,605.8 1060.0,600.0 C1055.0,594.2 1044.2,585.0 1045.0,575.0z M583.0,661.0 C583.0,657.0 612.2,662.3 630.0,668.0 C647.8,673.7 672.5,686.0 690.0,695.0 C707.5,704.0 725.5,715.2 735.0,722.0 C744.5,728.8 749.5,733.0 747.0,736.0 C744.5,739.0 731.2,742.3 720.0,740.0 C708.8,737.7 695.0,730.0 680.0,722.0 C665.0,714.0 646.2,702.2 630.0,692.0 C613.8,681.8 583.0,665.0 583.0,661.0z M957.0,647.0 C961.2,647.0 967.5,648.8 965.0,656.0 C962.5,663.2 951.5,680.3 942.0,690.0 C932.5,699.7 910.0,708.7 908.0,714.0 C906.0,719.3 922.2,720.2 930.0,722.0 C937.8,723.8 950.5,722.5 955.0,725.0 C959.5,727.5 966.2,734.5 957.0,737.0 C947.8,739.5 919.8,739.8 900.0,740.0 C880.2,740.2 849.3,740.3 838.0,738.0 C826.7,735.7 826.7,731.3 832.0,726.0 C837.3,720.7 857.0,713.3 870.0,706.0 C883.0,698.7 898.3,690.3 910.0,682.0 C921.7,673.7 932.2,661.8 940.0,656.0 C947.8,650.2 952.8,647.0 957.0,647.0z M1074,710 a6,8 0 1 0 12,0 a6,8 0 1 0 -12,0z" fill="url(#hx)" stroke="#8f52e2" stroke-width="1.300"/><path d="M710.0,66.0 C733.3,60.7 778.3,66.3 820.0,68.0 C861.7,69.7 931.7,70.7 960.0,76.0 C988.3,81.3 1000.0,94.7 990.0,100.0 C980.0,105.3 926.7,103.7 900.0,108.0 C873.3,112.3 846.7,116.5 830.0,126.0 C813.3,135.5 812.5,150.7 800.0,165.0 C787.5,179.3 768.3,202.5 755.0,212.0 C741.7,221.5 729.2,224.0 720.0,222.0 C710.8,220.0 709.7,206.7 700.0,200.0 C690.3,193.3 672.0,182.0 662.0,182.0 C652.0,182.0 650.3,190.0 640.0,200.0 C629.7,210.0 613.3,226.7 600.0,242.0 C586.7,257.3 573.0,277.0 560.0,292.0 C547.0,307.0 527.7,317.3 522.0,332.0 C516.3,346.7 527.2,360.3 526.0,380.0 C524.8,399.7 521.0,430.0 515.0,450.0 C509.0,470.0 502.5,485.0 490.0,500.0 C477.5,515.0 455.8,525.0 440.0,540.0 C424.2,555.0 400.0,575.8 395.0,590.0 C390.0,604.2 397.5,618.3 410.0,625.0 C422.5,631.7 458.3,625.8 470.0,630.0 C481.7,634.2 490.0,645.8 480.0,650.0 C470.0,654.2 430.0,656.3 410.0,655.0 C390.0,653.7 370.0,634.5 360.0,642.0 C350.0,649.5 353.3,684.0 350.0,700.0 C346.7,716.0 347.5,731.7 340.0,738.0 C332.5,744.3 309.2,746.0 305.0,738.0 C300.8,730.0 312.5,704.7 315.0,690.0 C317.5,675.3 320.8,665.0 320.0,650.0 C319.2,635.0 310.0,615.0 310.0,600.0 C310.0,585.0 320.8,573.3 320.0,560.0 C319.2,546.7 306.7,533.3 305.0,520.0 C303.3,506.7 302.5,483.3 310.0,480.0 C317.5,476.7 335.0,498.3 350.0,500.0 C365.0,501.7 385.0,495.0 400.0,490.0 C415.0,485.0 430.8,478.3 440.0,470.0 C449.2,461.7 451.7,451.7 455.0,440.0 C458.3,428.3 461.7,418.3 460.0,400.0 C458.3,381.7 446.7,349.2 445.0,330.0 C443.3,310.8 444.2,298.3 450.0,285.0 C455.8,271.7 465.0,256.7 480.0,250.0 C495.0,243.3 523.3,250.8 540.0,245.0 C556.7,239.2 570.8,229.2 580.0,215.0 C589.2,200.8 588.3,175.0 595.0,160.0 C601.7,145.0 605.8,135.0 620.0,125.0 C634.2,115.0 665.0,109.8 680.0,100.0 C695.0,90.2 686.7,71.3 710.0,66.0z M375.0,85.0 C380.0,82.5 390.0,89.2 400.0,95.0 C410.0,100.8 435.0,113.3 435.0,120.0 C435.0,126.7 409.2,130.0 400.0,135.0 C390.8,140.0 386.7,149.2 380.0,150.0 C373.3,150.8 361.7,146.7 360.0,140.0 C358.3,133.3 367.5,119.2 370.0,110.0 C372.5,100.8 370.0,87.5 375.0,85.0z M355.0,175.0 C361.7,168.8 384.2,159.7 400.0,158.0 C415.8,156.3 434.2,161.3 450.0,165.0 C465.8,168.7 488.3,175.0 495.0,180.0 C501.7,185.0 495.8,191.7 490.0,195.0 C484.2,198.3 468.3,196.2 460.0,200.0 C451.7,203.8 450.0,218.0 440.0,218.0 C430.0,218.0 413.3,203.8 400.0,200.0 C386.7,196.2 367.5,199.2 360.0,195.0 C352.5,190.8 348.3,181.2 355.0,175.0z M370.0,255.0 C371.8,253.7 384.0,277.5 385.0,290.0 C386.0,302.5 375.2,318.3 376.0,330.0 C376.8,341.7 391.0,353.0 390.0,360.0 C389.0,367.0 375.8,372.0 370.0,372.0 C364.2,372.0 355.0,367.0 355.0,360.0 C355.0,353.0 366.8,340.3 370.0,330.0 C373.2,319.7 374.0,310.5 374.0,298.0 C374.0,285.5 368.2,256.3 370.0,255.0z M230.0,425.0 C232.5,423.7 245.8,427.8 250.0,430.0 C254.2,432.2 257.5,436.7 255.0,438.0 C252.5,439.3 239.2,440.2 235.0,438.0 C230.8,435.8 227.5,426.3 230.0,425.0z M955.0,280.0 C959.2,278.3 980.0,289.5 1000.0,290.0 C1020.0,290.5 1063.3,281.3 1075.0,283.0 C1086.7,284.7 1080.8,295.8 1070.0,300.0 C1059.2,304.2 1025.8,308.0 1010.0,308.0 C994.2,308.0 984.2,304.7 975.0,300.0 C965.8,295.3 950.8,281.7 955.0,280.0z M800.0,345.0 C803.3,342.5 813.3,346.7 830.0,350.0 C846.7,353.3 878.3,361.3 900.0,365.0 C921.7,368.7 936.7,372.0 960.0,372.0 C983.3,372.0 1021.7,367.3 1040.0,365.0 C1058.3,362.7 1064.0,353.8 1070.0,358.0 C1076.0,362.2 1076.0,379.7 1076.0,390.0 C1076.0,400.3 1073.0,418.0 1070.0,420.0 C1067.0,422.0 1061.3,407.8 1058.0,402.0 C1054.7,396.2 1066.3,387.0 1050.0,385.0 C1033.7,383.0 985.0,388.3 960.0,390.0 C935.0,391.7 916.7,397.5 900.0,395.0 C883.3,392.5 875.0,380.0 860.0,375.0 C845.0,370.0 820.0,370.0 810.0,365.0 C800.0,360.0 796.7,347.5 800.0,345.0z M700.0,440.0 C703.3,434.2 724.2,434.7 740.0,430.0 C755.8,425.3 785.0,410.3 795.0,412.0 C805.0,413.7 805.8,432.8 800.0,440.0 C794.2,447.2 773.3,450.8 760.0,455.0 C746.7,459.2 730.0,467.5 720.0,465.0 C710.0,462.5 696.7,445.8 700.0,440.0z M920.0,535.0 C923.3,528.3 934.2,527.5 945.0,530.0 C955.8,532.5 975.8,541.7 985.0,550.0 C994.2,558.3 1001.7,573.7 1000.0,580.0 C998.3,586.3 985.0,585.5 975.0,588.0 C965.0,590.5 948.3,598.0 940.0,595.0 C931.7,592.0 928.3,580.0 925.0,570.0 C921.7,560.0 916.7,541.7 920.0,535.0z M1045.0,575.0 C1045.8,565.0 1059.5,542.5 1065.0,540.0 C1070.5,537.5 1076.3,548.3 1078.0,560.0 C1079.7,571.7 1078.0,603.3 1075.0,610.0 C1072.0,616.7 1065.0,605.8 1060.0,600.0 C1055.0,594.2 1044.2,585.0 1045.0,575.0z M583.0,661.0 C583.0,657.0 612.2,662.3 630.0,668.0 C647.8,673.7 672.5,686.0 690.0,695.0 C707.5,704.0 725.5,715.2 735.0,722.0 C744.5,728.8 749.5,733.0 747.0,736.0 C744.5,739.0 731.2,742.3 720.0,740.0 C708.8,737.7 695.0,730.0 680.0,722.0 C665.0,714.0 646.2,702.2 630.0,692.0 C613.8,681.8 583.0,665.0 583.0,661.0z M957.0,647.0 C961.2,647.0 967.5,648.8 965.0,656.0 C962.5,663.2 951.5,680.3 942.0,690.0 C932.5,699.7 910.0,708.7 908.0,714.0 C906.0,719.3 922.2,720.2 930.0,722.0 C937.8,723.8 950.5,722.5 955.0,725.0 C959.5,727.5 966.2,734.5 957.0,737.0 C947.8,739.5 919.8,739.8 900.0,740.0 C880.2,740.2 849.3,740.3 838.0,738.0 C826.7,735.7 826.7,731.3 832.0,726.0 C837.3,720.7 857.0,713.3 870.0,706.0 C883.0,698.7 898.3,690.3 910.0,682.0 C921.7,673.7 932.2,661.8 940.0,656.0 C947.8,650.2 952.8,647.0 957.0,647.0z M1074,710 a6,8 0 1 0 12,0 a6,8 0 1 0 -12,0z" fill="url(#hy)" stroke="none"/><path d="M265.0,290.0 C263.8,295.8 259.7,313.3 258.0,325.0 C256.3,336.7 255.5,354.2 255.0,360.0" fill="none" stroke="#4a7ae8" stroke-width="1.100"/><path d="M765.0,355.0 C768.3,361.7 779.2,380.8 785.0,395.0 C790.8,409.2 797.5,432.5 800.0,440.0" fill="none" stroke="#4a7ae8" stroke-width="1.100"/><path d="M710.0,545.0 C723.3,545.0 773.7,550.0 790.0,545.0 C806.3,540.0 805.0,520.0 808.0,515.0" fill="none" stroke="#4a7ae8" stroke-width="1.100"/><path d="M495.0,670.0 C500.8,662.5 510.8,638.3 530.0,625.0 C549.2,611.7 596.7,595.8 610.0,590.0" fill="none" stroke="#4a7ae8" stroke-width="1.100"/><path d="M1008.0,475.0 C1012.5,477.5 1030.5,487.5 1035.0,490.0" fill="none" stroke="#4a7ae8" stroke-width="1.100"/><path d="M712.0,66.0 C710.3,70.3 708.2,83.5 702.0,92.0 C695.8,100.5 685.0,110.0 675.0,117.0 C665.0,124.0 652.3,126.8 642.0,134.0 C631.7,141.2 617.8,155.7 613.0,160.0" fill="none" stroke="#1273ea" stroke-width="10" stroke-linecap="round" stroke-linejoin="round"/><path d="M642.0,134.0 C637.2,138.3 619.8,150.7 613.0,160.0 C606.2,169.3 602.5,180.8 601.0,190.0 C599.5,199.2 606.5,205.8 604.0,215.0 C601.5,224.2 594.7,236.2 586.0,245.0 C577.3,253.8 564.0,261.0 552.0,268.0 C540.0,275.0 520.3,283.8 514.0,287.0" fill="none" stroke="#1273ea" stroke-width="12.500" stroke-linecap="round" stroke-linejoin="round"/><path d="M446.0,288.0 C450.7,282.2 459.0,274.3 470.0,273.0 C481.0,271.7 503.5,275.5 512.0,280.0 C520.5,284.5 520.3,293.0 521.0,300.0 C521.7,307.0 519.3,315.0 516.0,322.0 C512.7,329.0 503.2,333.7 501.0,342.0 C498.8,350.3 504.2,362.7 503.0,372.0 C501.8,381.3 496.8,390.0 494.0,398.0 C491.2,406.0 490.0,416.3 486.0,420.0 C482.0,423.7 473.3,424.2 470.0,420.0 C466.7,415.8 468.2,404.2 466.0,395.0 C463.8,385.8 460.2,375.5 457.0,365.0 C453.8,354.5 449.5,341.5 447.0,332.0 C444.5,322.5 442.2,315.3 442.0,308.0 C441.8,300.7 441.3,293.8 446.0,288.0z" fill="#1273ea"/><path d="M462.0,300.0 C465.3,296.0 474.2,295.8 480.0,296.0 C485.8,296.2 493.8,298.0 497.0,301.0 C500.2,304.0 501.2,309.5 499.0,314.0 C496.8,318.5 489.2,324.3 484.0,328.0 C478.8,331.7 472.0,337.3 468.0,336.0 C464.0,334.7 461.0,326.0 460.0,320.0 C459.0,314.0 458.7,304.0 462.0,300.0z M478.0,352.0 C480.5,350.0 487.3,356.7 489.0,362.0 C490.7,367.3 489.3,378.7 488.0,384.0 C486.7,389.3 483.3,395.7 481.0,394.0 C478.7,392.3 474.5,381.0 474.0,374.0 C473.5,367.0 475.5,354.0 478.0,352.0z" fill="#fff"/><path d="M462.0,300.0 C465.3,296.0 474.2,295.8 480.0,296.0 C485.8,296.2 493.8,298.0 497.0,301.0 C500.2,304.0 501.2,309.5 499.0,314.0 C496.8,318.5 489.2,324.3 484.0,328.0 C478.8,331.7 472.0,337.3 468.0,336.0 C464.0,334.7 461.0,326.0 460.0,320.0 C459.0,314.0 458.7,304.0 462.0,300.0z M478.0,352.0 C480.5,350.0 487.3,356.7 489.0,362.0 C490.7,367.3 489.3,378.7 488.0,384.0 C486.7,389.3 483.3,395.7 481.0,394.0 C478.7,392.3 474.5,381.0 474.0,374.0 C473.5,367.0 475.5,354.0 478.0,352.0z" fill="url(#hx)"/><path d="M483.6,391.0 C482.2,395.1 478.2,407.3 475.5,415.5 C472.8,423.7 470.0,431.9 467.3,440.0 C464.6,448.1 461.2,455.2 459.2,464.0 C457.2,472.8 457.9,484.4 455.2,492.6 C452.5,500.8 449.1,506.9 443.0,513.0 C436.9,519.1 426.8,523.6 418.7,529.0 C410.6,534.4 402.4,539.9 394.3,545.3 C386.2,550.7 377.4,555.4 370.0,561.5 C362.6,567.6 355.1,575.7 349.7,581.8 C344.3,587.9 342.6,593.0 337.6,598.0 C332.7,603.0 322.0,605.9 320.0,612.0 C318.0,618.1 322.5,627.4 325.4,634.5 C328.3,641.6 336.2,646.7 337.6,654.8 C339.0,662.9 336.2,673.7 333.5,683.2 C330.8,692.7 324.7,701.8 321.3,711.6 C317.9,721.4 314.6,736.9 313.2,742.0" fill="none" stroke="#1273ea" stroke-width="14.500" stroke-linecap="round" stroke-linejoin="round"/><circle cx="304" cy="614" r="25" fill="#1273ea"/></g><rect x="312" y="800" width="17" height="17" fill="#fff" stroke="#555" stroke-width="1.200"/><rect x="520" y="800" width="17" height="17" fill="url(#hx)" stroke="#8d4fe0" stroke-width="1.200"/><circle cx="822.300" cy="798" r="32.700" fill="none" stroke="#666" stroke-width="1.300"/><path d="M808.5,780.6 L824.6,788.2 L836,800.4 L838.2,810.3 L824.6,826.3 L798.8,825.5 L795,800.4z" fill="none" stroke="#444" stroke-width="1.100"/><path d="M822.300,798 L808.5,780.6 M822.300,798 L824.6,788.2 M822.300,798 L836,800.4 M822.300,798 L838.2,810.3 M822.300,798 L824.6,826.3 M822.300,798 L798.8,825.5 M822.300,798 L795,800.4" fill="none" stroke="#444" stroke-width="1"/><path d="M822.300,798 L778,825 Q768,852 802.600,845 Z" fill="none" stroke="#9a5ae6" stroke-width="1.600"/><path d="M820,764 l2.300,-4 l2.300,4" fill="none" stroke="#888" stroke-width="0.800"/><rect x="790" y="767" width="6" height="3.200" fill="#444"/><rect x="850" y="767" width="6" height="3.200" fill="#444"/><rect x="778" y="797" width="4" height="3.200" fill="#444"/><rect x="864" y="797" width="4" height="3.200" fill="#444"/><rect x="858" y="784" width="10" height="3.200" fill="#444"/><rect x="850" y="827" width="7" height="3.200" fill="#444"/><rect x="820" y="841" width="5" height="3.200" fill="#444"/><rect x="762" y="823" width="11" height="3.200" fill="#444"/><rect x="784" y="839" width="6" height="3.200" fill="#444"/><rect x="802" y="846" width="12" height="3.200" fill="#444"/><g font-family="Liberation Sans, sans-serif" font-size="9.500" fill="#9a9a9a"><text x="137.0" y="756">0.00</text><text x="212.8" y="756">1000.00</text><text x="292.5" y="756">2000.00</text><text x="372.2" y="756">3000.00</text><text x="452.0" y="756">4000.00</text><text x="531.8" y="756">5000.00</text><text x="611.5" y="756">6000.00</text><text x="691.2" y="756">7000.00</text><text x="771.0" y="756">8000.00</text><text x="850.8" y="756">9000.00</text><text x="930.5" y="756">10000.00</text><text x="1010.2" y="756">11000.00</text><text x="1090.0" y="756">12000.00</text><text x="131" y="735.5" text-anchor="end">0.00</text><text x="131" y="656.1" text-anchor="end">1000.00</text><text x="131" y="576.7" text-anchor="end">2000.00</text><text x="131" y="497.3" text-anchor="end">3000.00</text><text x="131" y="417.9" text-anchor="end">4000.00</text><text x="131" y="338.5" text-anchor="end">5000.00</text><text x="131" y="259.1" text-anchor="end">6000.00</text><text x="131" y="179.7" text-anchor="end">7000.00</text><text x="131" y="100.3" text-anchor="end">8000.00</text></g></svg>
<span class="t" style="left:881.00px;top:258.75px;font-size:15.5px;line-height:19.5px;color:#111;font-family:'Liberation Serif',serif;letter-spacing:-0.270px;">Картограмма зимней ветрозащиты территорий</span>
<span class="t" style="left:927.60px;top:566.25px;font-size:12.5px;line-height:16.5px;color:#2a2a2a;font-family:'Liberation Serif',serif;font-weight:bold;letter-spacing:-0.332px;">Условные обозначения</span>
<span class="t" style="left:924.00px;top:585.10px;font-size:6.8px;line-height:10.8px;color:#555;font-family:'Liberation Serif',serif;font-weight:bold;letter-spacing:0.209px;">&lt;5 м/с (благ)</span>
<span class="t" style="left:1011.00px;top:584.60px;font-size:6.8px;line-height:10.8px;color:#555;font-family:'Liberation Serif',serif;font-weight:bold;letter-spacing:0.329px;">&gt;5 м/с (небл)</span>
<div class="r" style="left:354px;top:620px;width:1019px;height:57px;background:#f0f0f0;"></div>
<span class="t" style="left:444.00px;top:628.55px;font-size:9.5px;line-height:13.5px;color:#1a1a1a;font-family:'Liberation Sans',sans-serif;letter-spacing:-0.502px;">Имя файла:</span>
<div class="r" style="left:497px;top:626.5px;width:701.5px;height:17px;background:#fff;border:1px solid #7a7a7a;box-sizing:border-box;"></div>
<span class="t" style="left:500.30px;top:628.75px;font-size:9.5px;line-height:13.5px;color:#111;font-family:'Liberation Sans',sans-serif;letter-spacing:-0.479px;">gradostroitelny_analiz.tif</span>
<svg class="r" style="left:1184px;top:630px;" width="14" height="10" viewBox="0 0 14 10"><path d="M3.500,3 l3.500,3.500 l3.500,-3.500" fill="none" stroke="#444" stroke-width="1.100"/></svg>
<div class="r" style="left:1206.5px;top:625.5px;width:154.5px;height:18.5px;background:#fff;border:1px solid #0078d7;box-sizing:border-box;"></div>
<div class="r" style="left:1208.5px;top:643.5px;width:283px;height:106.5px;background:#fff;border:1px solid #0078d7;box-sizing:border-box;box-shadow:1px 2px 3px rgba(0,0,0,0.35);"></div>
<div class="r" style="left:1209.5px;top:644.5px;width:281px;height:10.5px;background:#0078d7;"></div>
<span class="t" style="left:1211.00px;top:642.85px;font-size:9.5px;line-height:13.5px;color:#fff;font-family:'Liberation Sans',sans-serif;letter-spacing:-0.336px;">Файлы изображений (*.tif;*.tiff;*.bmp;*.jpg;*.jpeg;*.png;*.pcx;*.gif;*.ecw)</span>
<span class="t" style="left:1211.00px;top:653.40px;font-size:9.5px;line-height:13.5px;color:#111;font-family:'Liberation Sans',sans-serif;letter-spacing:-0.421px;">Tagged Image File (TIF) (*.tif)</span>
<span class="t" style="left:1211.00px;top:663.95px;font-size:9.5px;line-height:13.5px;color:#111;font-family:'Liberation Sans',sans-serif;letter-spacing:-0.434px;">Tagged Image File (TIFF) (*.tiff)</span>
<span class="t" style="left:1211.00px;top:674.50px;font-size:9.5px;line-height:13.5px;color:#111;font-family:'Liberation Sans',sans-serif;letter-spacing:-0.524px;">Windows Bitmap (*.bmp)</span>
<span class="t" style="left:1211.00px;top:685.05px;font-size:9.5px;line-height:13.5px;color:#111;font-family:'Liberation Sans',sans-serif;letter-spacing:-0.551px;">JPG (*.jpg)</span>
<span class="t" style="left:1211.00px;top:695.60px;font-size:9.5px;line-height:13.5px;color:#111;font-family:'Liberation Sans',sans-serif;letter-spacing:-0.544px;">JPEG (*.jpeg)</span>
<span class="t" style="left:1211.00px;top:706.15px;font-size:9.5px;line-height:13.5px;color:#111;font-family:'Liberation Sans',sans-serif;letter-spacing:-0.430px;">Portable Network Graphics (*.png)</span>
<span class="t" style="left:1211.00px;top:716.70px;font-size:9.5px;line-height:13.5px;color:#111;font-family:'Liberation Sans',sans-serif;letter-spacing:-0.468px;">ZSoft PCX (*.pcx)</span>
<span class="t" style="left:1211.00px;top:727.25px;font-size:9.5px;line-height:13.5px;color:#111;font-family:'Liberation Sans',sans-serif;letter-spacing:-0.561px;">GIF (*.gif)</span>
<span class="t" style="left:1211.00px;top:737.80px;font-size:9.5px;line-height:13.5px;color:#111;font-family:'Liberation Sans',sans-serif;letter-spacing:-0.362px;">ER Mapper (версия с ограничениями) (*.ecw)</span>
<div class="r" style="left:1206.5px;top:627px;width:325px;height:15px;background:#fff;border:1px solid #767676;box-sizing:border-box;box-shadow:1px 1px 2px rgba(0,0,0,0.3);"></div>
<span class="t" style="left:1211.00px;top:627.70px;font-size:10px;line-height:14px;color:#575757;font-family:'Liberation Sans',sans-serif;letter-spacing:-0.041px;">Файлы изображений (*.tif;*.tiff;*.bmp;*.jpg;*.jpeg;*.png;*.pcx;*.gif;*.ecw)</span>
<div class="r" style="left:0px;top:794.2px;width:1560px;height:4px;background:#555;"></div>
<div class="r" style="left:1px;top:795.5px;width:1558px;height:1px;background:#4c4c4c;"></div>
<div class="r" style="left:1px;top:798px;width:1558px;height:58px;background:#5b5b5b;"></div>
<div class="r" style="left:1px;top:797.5px;width:15px;height:58.5px;background:#696969;"></div>
<div class="r" style="left:15px;top:843.5px;width:1543px;height:1px;background:#666;"></div>
<svg class="r" style="left:0px;top:798px;" width="15" height="58" viewBox="0 798 15 58"><path d="M4.500,805 l5,5 M9.500,805 l-5,5" stroke="#fff" stroke-width="1.500"/><path d="M5,819.500 h4 M6,819.500 v4 M8.300,819.500 v4 M4,823.500 h6 M7,823.500 v3.500" stroke="#fff" stroke-width="0.900" fill="none"/><rect x="6.800" y="819.500" width="1.500" height="4" fill="#fff"/></svg>
<span class="t" style="left:3.5px;top:854.5px;font-size:9px;line-height:10px;color:#d4d4d4;letter-spacing:-0.3px;font-family:'Liberation Sans',sans-serif;transform-origin:0 0;transform:rotate(-90deg);">Коман</span>
<div class="r" style="left:15px;top:799.2px;width:600px;height:9px;overflow:hidden"><span class="t" style="left:3.00px;top:-4.88px;font-size:9.17px;line-height:13.17px;color:#e4e4e4;font-family:'Liberation Mono',monospace;">L,ERASE,C,СТЕРЕТЬ - Удаление</span></div>
<span class="t" style="left:18.00px;top:806.71px;font-size:9.17px;line-height:13.17px;color:#ececec;font-family:'Liberation Mono',monospace;">1 найдено</span>
<span class="t" style="left:18.00px;top:818.71px;font-size:9.17px;line-height:13.17px;color:#ececec;font-family:'Liberation Mono',monospace;letter-spacing:0.164px;">IAT,IMAGEATTACH,ROPEN,ИВ,ИЗОБВСТАВИТЬ,РОТКРЫТЬ - Вставка растра...</span>
<span class="t" style="left:18.00px;top:830.12px;font-size:9.17px;line-height:13.17px;color:#ececec;font-family:'Liberation Mono',monospace;letter-spacing:0.164px;">IAT,IMAGEATTACH,ROPEN,ИВ,ИЗОБВСТАВИТЬ,РОТКРЫТЬ - Вставка растра...</span>
<span class="t" style="left:18.00px;top:843.81px;font-size:9.17px;line-height:13.17px;color:#ececec;font-family:'Liberation Mono',monospace;">Команда:</span>
<div class="r" style="left:0px;top:856px;width:1560px;height:19.5px;background:#484848;"></div>
<div class="r" style="left:0px;top:875px;width:1560px;height:2px;background:#2e2e2e;"></div>
<div class="r" style="left:360px;top:875px;width:40px;height:2px;background:#555;"></div>
<span class="t" style="left:4.00px;top:858.50px;font-size:10px;line-height:14px;color:#f0f0f0;font-family:'Liberation Sans',sans-serif;letter-spacing:-0.654px;">32345.4742,35467.5493,0.0000</span>
<div class="r" style="left:136.5px;top:858px;width:1px;height:15px;background:#5e5e5e;"></div>
<div class="r" style="left:170px;top:858px;width:1px;height:15px;background:#5e5e5e;"></div>
<div class="r" style="left:488px;top:858px;width:1px;height:15px;background:#5e5e5e;"></div>
<div class="r" style="left:589px;top:858px;width:1px;height:15px;background:#5e5e5e;"></div>
<div class="r" style="left:617px;top:858px;width:1px;height:15px;background:#5e5e5e;"></div>
<span class="t" style="left:145.00px;top:858.90px;font-size:9.2px;line-height:13.2px;color:#e8e8e8;font-family:'Liberation Sans',sans-serif;letter-spacing:-0.850px;">ШАГ</span>
<span class="t" style="left:178.00px;top:858.90px;font-size:9.2px;line-height:13.2px;color:#e8e8e8;font-family:'Liberation Sans',sans-serif;letter-spacing:-0.979px;">СЕТКА</span>
<div class="r" style="left:209.5px;top:857px;width:64.0px;height:17.5px;background:#546a8c;border:1px solid #7397cc;box-sizing:border-box;"></div><span class="t" style="left:218.00px;top:858.90px;font-size:9.2px;line-height:13.2px;color:#fff;font-family:'Liberation Sans',sans-serif;letter-spacing:-0.667px;">оПРИВЯЗКА</span>
<div class="r" style="left:275px;top:857px;width:76.5px;height:17.5px;background:#546a8c;border:1px solid #7397cc;box-sizing:border-box;"></div><span class="t" style="left:282.00px;top:858.90px;font-size:9.2px;line-height:13.2px;color:#fff;font-family:'Liberation Sans',sans-serif;letter-spacing:-0.527px;">3D оПРИВЯЗКА</span>
<div class="r" style="left:353px;top:857px;width:68.5px;height:17.5px;background:#546a8c;border:1px solid #7397cc;box-sizing:border-box;"></div><span class="t" style="left:360.00px;top:858.90px;font-size:9.2px;line-height:13.2px;color:#fff;font-family:'Liberation Sans',sans-serif;letter-spacing:-0.677px;">ОТС-ОБЪЕКТ</span>
<div class="r" style="left:423px;top:857px;width:63.5px;height:17.5px;background:#546a8c;border:1px solid #7397cc;box-sizing:border-box;"></div><span class="t" style="left:429.00px;top:858.90px;font-size:9.2px;line-height:13.2px;color:#fff;font-family:'Liberation Sans',sans-serif;letter-spacing:-0.441px;">ОТС-ПОЛЯР</span>
<span class="t" style="left:495.00px;top:858.90px;font-size:9.2px;line-height:13.2px;color:#e8e8e8;font-family:'Liberation Sans',sans-serif;letter-spacing:-0.560px;">ОРТО</span>
<div class="r" style="left:526px;top:857px;width:60.5px;height:17.5px;background:#546a8c;border:1px solid #7397cc;box-sizing:border-box;"></div><span class="t" style="left:534.00px;top:858.90px;font-size:9.2px;line-height:13.2px;color:#fff;font-family:'Liberation Sans',sans-serif;letter-spacing:-0.338px;">ДИН-ВВОД</span>
<span class="t" style="left:595.00px;top:858.90px;font-size:9.2px;line-height:13.2px;color:#e8e8e8;font-family:'Liberation Sans',sans-serif;letter-spacing:-0.741px;">ИЗО</span>
<div class="r" style="left:623px;top:857px;width:29.5px;height:17.5px;background:#546a8c;border:1px solid #7397cc;box-sizing:border-box;"></div><span class="t" style="left:630.00px;top:858.90px;font-size:9.2px;line-height:13.2px;color:#fff;font-family:'Liberation Sans',sans-serif;letter-spacing:-0.972px;">ВЕС</span>
<div class="r" style="left:654px;top:857px;width:67.5px;height:17.5px;background:#546a8c;border:1px solid #7397cc;box-sizing:border-box;"></div><span class="t" style="left:661.00px;top:858.90px;font-size:9.2px;line-height:13.2px;color:#fff;font-family:'Liberation Sans',sans-serif;letter-spacing:-0.602px;">ШТРИХОВКА</span>
<span class="t" style="left:1049.00px;top:858.75px;font-size:9.5px;line-height:13.5px;color:#e8e8e8;font-family:'Liberation Sans',sans-serif;letter-spacing:-0.472px;">МОДЕЛЬ</span>
<svg class="r" style="left:1080px;top:856px;" width="480" height="20" viewBox="1080 856 480 20"><path d="M1092,868 a2,2 0 0 1 4,0 M1096,864 a2,2 0 0 1 4,0 M1093,866 l5,-3" fill="none" stroke="#ccc" stroke-width="1"/><rect x="1105.500" y="859" width="1" height="13" fill="#666"/><rect x="1108.500" y="861" width="10" height="7.500" fill="#ddd"/><path d="M1111,868.500 h6 l-3,3.500z" fill="#ddd"/><rect x="1195.500" y="859" width="1" height="13" fill="#666"/><circle cx="1202" cy="863" r="3" fill="#f0e0a0"/><rect x="1200.800" y="866" width="2.400" height="2.500" fill="#ccc"/><rect x="1204.500" y="860.500" width="6" height="9" fill="none" stroke="#ccc" stroke-width="0.800"/><polygon points="1206.0,864.0 1206.0,871.0 1207.7,869.5 1208.9,872.1 1210.1,871.6 1208.8,869.0 1211.0,869.0" fill="#fff" stroke="#555" stroke-width="0.6"/><rect x="1214" y="859" width="1" height="13" fill="#666"/><circle cx="1222.500" cy="863.500" r="3.600" fill="#d8d8d8"/><rect x="1221" y="867" width="3" height="3.500" fill="#bbb"/><rect x="1233.5" y="857.500" width="22" height="16.500" fill="#546a8c" stroke="#7397cc" stroke-width="1"/><rect x="1257.5" y="857.500" width="22" height="16.500" fill="#546a8c" stroke="#7397cc" stroke-width="1"/><rect x="1281.5" y="857.500" width="22" height="16.500" fill="#546a8c" stroke="#7397cc" stroke-width="1"/><circle cx="1244.500" cy="866" r="5.500" fill="none" stroke="#d03030" stroke-width="1.300"/><polygon points="1242.5,861.5 1242.5,868.5 1244.2,867.0 1245.4,869.6 1246.6,869.1 1245.3,866.5 1247.5,866.5" fill="#fff" stroke="#555" stroke-width="0.6"/><polygon points="1262.0,859.5 1262.0,868.0 1264.0,866.1 1265.6,869.4 1266.9,868.7 1265.4,865.6 1268.1,865.6" fill="#fff" stroke="#555" stroke-width="0.6"/><rect x="1268" y="866" width="6.500" height="5.500" fill="#ddd"/><rect x="1269" y="867.500" width="4.500" height="0.800" fill="#555"/><rect x="1269" y="869.200" width="4.500" height="0.800" fill="#555"/><path d="M1288,860 v10 h10" fill="none" stroke="#ddd" stroke-width="1"/><path d="M1286,862 l2,-2 l2,2 M1296,868 l2,2 l-2,2" fill="none" stroke="#ddd" stroke-width="0.800"/><path d="M1296,859 l-3,5 h2.500 l-2,4" fill="none" stroke="#6aa9f5" stroke-width="1"/><rect x="1375.500" y="859" width="1" height="13" fill="#666"/><path d="M1385,866 l-2,-3 l1,-1 l2,2 v-5 h1.500 v4 v-5 h1.500 v5 v-4.500 h1.500 v4.500 v-3 h1.500 v6 q0,4 -3,5 h-3 q-2,-1 -3.500,-5z" fill="#f0f0f0"/><circle cx="1411.500" cy="864" r="4" fill="#dff" stroke="#eee" stroke-width="1.200"/><path d="M1414.500,867 l4,4" stroke="#58a0e8" stroke-width="2"/><rect x="1430.500" y="858.500" width="15" height="15" fill="#5a9af0" stroke="#8ab8f8" stroke-width="1"/><circle cx="1437" cy="865" r="3.300" fill="#dff" stroke="#fff" stroke-width="1"/><path d="M1439.500,867.500 l3.500,3.500" stroke="#fff" stroke-width="1.600"/><rect x="1454.500" y="860.500" width="10" height="8" fill="none" stroke="#ddd" stroke-width="1"/><circle cx="1463" cy="868" r="3" fill="#484848" stroke="#ddd" stroke-width="1"/><path d="M1465,870 l3,3" stroke="#ddd" stroke-width="1.300"/><ellipse cx="1484.500" cy="866" rx="6" ry="3" fill="none" stroke="#ccc" stroke-width="1"/><path d="M1484.500,859 v13" stroke="#ccc" stroke-width="1"/><path d="M1482.500,861 l2,-2.500 l2,2.500" fill="none" stroke="#ccc" stroke-width="0.800"/><path d="M1512,866 a4.500,4.500 0 0 1 -8,2.500 M1503,866 a4.500,4.500 0 0 1 8,-2.500" fill="none" stroke="#50e060" stroke-width="1.700"/><path d="M1502,869.500 l2.500,-2.500 l1,3z M1513,862.500 l-2.500,2.500 l-1,-3z" fill="#50e060"/><rect x="1518" y="859" width="1" height="13" fill="#666"/><rect x="1521.500" y="860.500" width="9" height="7" fill="none" stroke="#ddd" stroke-width="1"/><rect x="1525" y="865" width="8" height="6.500" fill="#ddd"/><path d="M1527,865 v-1.500 a2,2 0 0 1 4,0 v1.500" fill="none" stroke="#ddd" stroke-width="1"/><rect x="1545" y="861" width="10" height="9" fill="#3a78d0" stroke="#8ac0ff" stroke-width="1"/><path d="M1543,859 h3 M1543,859 v3 M1557,859 h-3 M1557,859 v3 M1543,872 h3 M1543,872 v-3 M1557,872 h-3 M1557,872 v-3" stroke="#8ac0ff" stroke-width="1" fill="none"/></svg>
<span class="t" style="left:1325.00px;top:858.75px;font-size:9.5px;line-height:13.5px;color:#e8e8e8;font-family:'Liberation Sans',sans-serif;letter-spacing:-0.198px;">m1:100</span>
<div class="r" style="left:1559px;top:26px;width:1px;height:851px;background:#c8c8c8;"></div>
</body></html>
